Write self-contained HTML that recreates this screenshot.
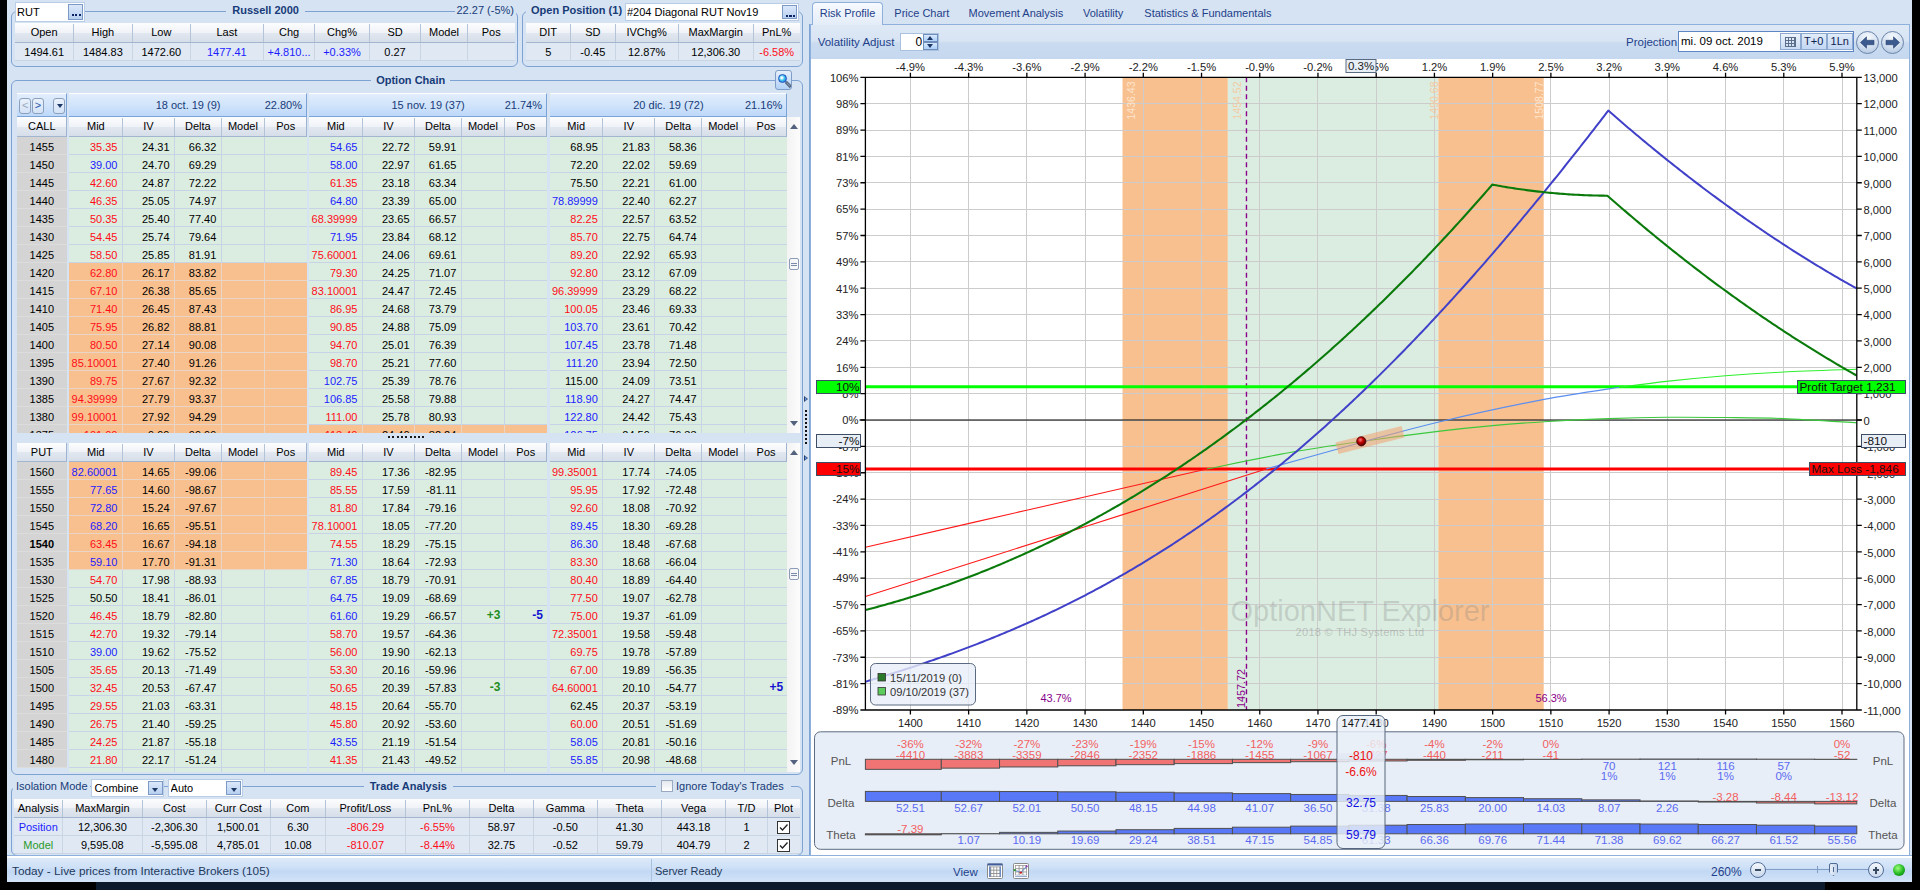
<!DOCTYPE html><html><head><meta charset="utf-8"><style>
*{box-sizing:border-box}
body{margin:0;width:1920px;height:890px;overflow:hidden;position:relative;background:#000;font-family:"Liberation Sans",sans-serif;font-size:11px;color:#000}
body div{position:absolute;white-space:nowrap;overflow:hidden}
svg{position:absolute;overflow:hidden}
</style></head><body>

<div style="left:7.00px;top:0.00px;width:1905.00px;height:882.00px;background:#d6e3f2;"></div>
<div style="left:96.00px;top:882.00px;width:1824.00px;height:8.00px;background:#0c1a2e;"></div>
<div style="left:1825.00px;top:882.00px;width:95.00px;height:8.00px;background:#000;"></div>
<div style="left:11.00px;top:11.00px;width:507.00px;height:56.00px;border:1px solid #7da2d3;border-radius:6px;"></div>
<div style="left:226.27px;top:2.00px;width:78.65px;height:16.00px;line-height:16.00px;text-align:center;color:#173b78;font-size:11px;font-weight:bold;background:#d6e3f2;">Russell 2000</div>
<div style="left:454.53px;top:2.00px;width:61.47px;height:16.00px;line-height:16.00px;text-align:center;color:#173b78;font-size:11px;background:#d6e3f2;">22.27 (-5%)</div>
<div style="left:15.00px;top:2.00px;width:70.00px;height:20.00px;background:#fff;border:1px solid #b9cde6;"></div>
<div style="left:17.00px;top:2.00px;width:66.00px;height:20.00px;line-height:20.00px;text-align:left;color:#000;font-size:11px;padding-left:0px;">RUT</div>
<div style="left:68.00px;top:4.00px;width:15.00px;height:16.00px;background:linear-gradient(#dbe8fa,#b7d0f0);border:1px solid #7b9ac6;"><div style="left:2.5px;top:9px;width:9px;height:2.2px;background:repeating-linear-gradient(90deg,#0c2466 0,#0c2466 2.2px,transparent 2.2px,transparent 3.3px);"></div></div>
<div style="left:15.00px;top:23.00px;width:500.00px;height:19.50px;background:linear-gradient(#fdfdfe,#eff2f7 50%,#e2e8f0 51%,#d6dee9);border-bottom:1px solid #a3b6d0;"></div>
<div style="left:15.00px;top:23.00px;width:58.30px;height:19.50px;line-height:19.50px;text-align:center;color:#000;font-size:11px;">Open</div>
<div style="left:72.80px;top:24.00px;width:1.00px;height:17.50px;background:#b3c3d8;"></div>
<div style="left:73.30px;top:23.00px;width:59.20px;height:19.50px;line-height:19.50px;text-align:center;color:#000;font-size:11px;">High</div>
<div style="left:132.00px;top:24.00px;width:1.00px;height:17.50px;background:#b3c3d8;"></div>
<div style="left:132.50px;top:23.00px;width:57.70px;height:19.50px;line-height:19.50px;text-align:center;color:#000;font-size:11px;">Low</div>
<div style="left:189.70px;top:24.00px;width:1.00px;height:17.50px;background:#b3c3d8;"></div>
<div style="left:190.20px;top:23.00px;width:73.30px;height:19.50px;line-height:19.50px;text-align:center;color:#000;font-size:11px;">Last</div>
<div style="left:263.00px;top:24.00px;width:1.00px;height:17.50px;background:#b3c3d8;"></div>
<div style="left:263.50px;top:23.00px;width:51.10px;height:19.50px;line-height:19.50px;text-align:center;color:#000;font-size:11px;">Chg</div>
<div style="left:314.10px;top:24.00px;width:1.00px;height:17.50px;background:#b3c3d8;"></div>
<div style="left:314.60px;top:23.00px;width:54.80px;height:19.50px;line-height:19.50px;text-align:center;color:#000;font-size:11px;">Chg%</div>
<div style="left:368.90px;top:24.00px;width:1.00px;height:17.50px;background:#b3c3d8;"></div>
<div style="left:369.40px;top:23.00px;width:51.30px;height:19.50px;line-height:19.50px;text-align:center;color:#000;font-size:11px;">SD</div>
<div style="left:420.20px;top:24.00px;width:1.00px;height:17.50px;background:#b3c3d8;"></div>
<div style="left:420.70px;top:23.00px;width:46.80px;height:19.50px;line-height:19.50px;text-align:center;color:#000;font-size:11px;">Model</div>
<div style="left:467.00px;top:24.00px;width:1.00px;height:17.50px;background:#b3c3d8;"></div>
<div style="left:467.50px;top:23.00px;width:47.50px;height:19.50px;line-height:19.50px;text-align:center;color:#000;font-size:11px;">Pos</div>
<div style="left:15.00px;top:42.50px;width:500.00px;height:18.00px;background:#dfe8f3;border-bottom:1px solid #c9d5e3;"></div>
<div style="left:15.00px;top:42.50px;width:58.30px;height:18.00px;line-height:18.00px;text-align:center;color:#000;font-size:11px;">1494.61</div>
<div style="left:72.80px;top:42.50px;width:1.00px;height:18.00px;background:#c9d5e3;"></div>
<div style="left:73.30px;top:42.50px;width:59.20px;height:18.00px;line-height:18.00px;text-align:center;color:#000;font-size:11px;">1484.83</div>
<div style="left:132.00px;top:42.50px;width:1.00px;height:18.00px;background:#c9d5e3;"></div>
<div style="left:132.50px;top:42.50px;width:57.70px;height:18.00px;line-height:18.00px;text-align:center;color:#000;font-size:11px;">1472.60</div>
<div style="left:189.70px;top:42.50px;width:1.00px;height:18.00px;background:#c9d5e3;"></div>
<div style="left:190.20px;top:42.50px;width:73.30px;height:18.00px;line-height:18.00px;text-align:center;color:#1c1cff;font-size:11px;">1477.41</div>
<div style="left:263.00px;top:42.50px;width:1.00px;height:18.00px;background:#c9d5e3;"></div>
<div style="left:263.50px;top:42.50px;width:51.10px;height:18.00px;line-height:18.00px;text-align:center;color:#1c1cff;font-size:11px;">+4.810...</div>
<div style="left:314.10px;top:42.50px;width:1.00px;height:18.00px;background:#c9d5e3;"></div>
<div style="left:314.60px;top:42.50px;width:54.80px;height:18.00px;line-height:18.00px;text-align:center;color:#1c1cff;font-size:11px;">+0.33%</div>
<div style="left:368.90px;top:42.50px;width:1.00px;height:18.00px;background:#c9d5e3;"></div>
<div style="left:369.40px;top:42.50px;width:51.30px;height:18.00px;line-height:18.00px;text-align:center;color:#000;font-size:11px;">0.27</div>
<div style="left:420.20px;top:42.50px;width:1.00px;height:18.00px;background:#c9d5e3;"></div>
<div style="left:420.70px;top:42.50px;width:46.80px;height:18.00px;line-height:18.00px;text-align:center;color:#000;font-size:11px;"></div>
<div style="left:467.00px;top:42.50px;width:1.00px;height:18.00px;background:#c9d5e3;"></div>
<div style="left:467.50px;top:42.50px;width:47.50px;height:18.00px;line-height:18.00px;text-align:center;color:#000;font-size:11px;"></div>
<div style="left:521.50px;top:11.00px;width:281.00px;height:56.00px;border:1px solid #7da2d3;border-radius:6px;"></div>
<div style="left:526.00px;top:2.00px;width:101.05px;height:16.00px;line-height:16.00px;text-align:center;color:#173b78;font-size:11px;font-weight:bold;background:#d6e3f2;">Open Position (1)</div>
<div style="left:625.00px;top:3.00px;width:174.00px;height:18.00px;background:#fff;border:1px solid #b9cde6;"></div>
<div style="left:627.00px;top:3.00px;width:170.00px;height:18.00px;line-height:18.00px;text-align:left;color:#000;font-size:11px;padding-left:0px;">#204 Diagonal RUT Nov19</div>
<div style="left:782.00px;top:5.00px;width:15.00px;height:14.00px;background:linear-gradient(#dbe8fa,#b7d0f0);border:1px solid #7b9ac6;"><div style="left:2.5px;top:9px;width:9px;height:2.2px;background:repeating-linear-gradient(90deg,#0c2466 0,#0c2466 2.2px,transparent 2.2px,transparent 3.3px);"></div></div>
<div style="left:526.00px;top:23.00px;width:274.00px;height:19.50px;background:linear-gradient(#fdfdfe,#eff2f7 50%,#e2e8f0 51%,#d6dee9);border-bottom:1px solid #a3b6d0;"></div>
<div style="left:526.00px;top:23.00px;width:44.40px;height:19.50px;line-height:19.50px;text-align:center;color:#000;font-size:11px;">DIT</div>
<div style="left:569.90px;top:24.00px;width:1.00px;height:17.50px;background:#b3c3d8;"></div>
<div style="left:570.40px;top:23.00px;width:44.80px;height:19.50px;line-height:19.50px;text-align:center;color:#000;font-size:11px;">SD</div>
<div style="left:614.70px;top:24.00px;width:1.00px;height:17.50px;background:#b3c3d8;"></div>
<div style="left:615.20px;top:23.00px;width:62.90px;height:19.50px;line-height:19.50px;text-align:center;color:#000;font-size:11px;">IVChg%</div>
<div style="left:677.60px;top:24.00px;width:1.00px;height:17.50px;background:#b3c3d8;"></div>
<div style="left:678.10px;top:23.00px;width:75.30px;height:19.50px;line-height:19.50px;text-align:center;color:#000;font-size:11px;">MaxMargin</div>
<div style="left:752.90px;top:24.00px;width:1.00px;height:17.50px;background:#b3c3d8;"></div>
<div style="left:753.40px;top:23.00px;width:46.60px;height:19.50px;line-height:19.50px;text-align:center;color:#000;font-size:11px;">PnL%</div>
<div style="left:526.00px;top:42.50px;width:274.00px;height:18.00px;background:#dfe8f3;border-bottom:1px solid #c9d5e3;"></div>
<div style="left:526.00px;top:42.50px;width:44.40px;height:18.00px;line-height:18.00px;text-align:center;color:#000;font-size:11px;">5</div>
<div style="left:569.90px;top:42.50px;width:1.00px;height:18.00px;background:#c9d5e3;"></div>
<div style="left:570.40px;top:42.50px;width:44.80px;height:18.00px;line-height:18.00px;text-align:center;color:#000;font-size:11px;">-0.45</div>
<div style="left:614.70px;top:42.50px;width:1.00px;height:18.00px;background:#c9d5e3;"></div>
<div style="left:615.20px;top:42.50px;width:62.90px;height:18.00px;line-height:18.00px;text-align:center;color:#000;font-size:11px;">12.87%</div>
<div style="left:677.60px;top:42.50px;width:1.00px;height:18.00px;background:#c9d5e3;"></div>
<div style="left:678.10px;top:42.50px;width:75.30px;height:18.00px;line-height:18.00px;text-align:center;color:#000;font-size:11px;">12,306.30</div>
<div style="left:752.90px;top:42.50px;width:1.00px;height:18.00px;background:#c9d5e3;"></div>
<div style="left:753.40px;top:42.50px;width:46.60px;height:18.00px;line-height:18.00px;text-align:center;color:#ff0c18;font-size:11px;">-6.58%</div>
<div style="left:11.00px;top:79.50px;width:792.00px;height:695.50px;border:1px solid #7da2d3;border-radius:6px;"></div>
<div style="left:371.18px;top:71.50px;width:79.04px;height:16.00px;line-height:16.00px;text-align:center;color:#173b78;font-size:11px;font-weight:bold;background:#d6e3f2;">Option Chain</div>
<div style="left:775.00px;top:70.00px;width:17.00px;height:19.50px;background:linear-gradient(#e6f0fc,#b3d1f6);border:1px solid #7f9cc6;border-radius:3px;"><div style="left:1.5px;top:2.5px;width:9.5px;height:9.5px;border:1px solid #2050c0;border-radius:50%;background:radial-gradient(circle at 40% 40%,#ffffff 10%,#3fc8f0 45%,#1f60d0 90%);"></div><div style="left:8.5px;top:12px;width:7px;height:2.5px;background:#8aa0b8;border:0.5px solid #50607a;transform:rotate(45deg);"></div></div>
<div style="left:17.00px;top:92.50px;width:49.70px;height:24.70px;background:linear-gradient(#e1edfc,#d3e5fb 45%,#bdd8f9);border-top:1px solid #fff;border-bottom:1.5px solid #7aa3d8;border-right:1.5px solid #7aa3d8;"></div>
<div style="left:19.40px;top:98.10px;width:11.50px;height:15.60px;border:1px solid #8d9fbb;border-radius:3px;background:linear-gradient(#e9f1fc,#d3e3f7);"><div style="left:0;top:0;width:9.5px;height:13.6px;line-height:13.6px;text-align:center;font-size:11px;color:#9aa8bd">&lt;</div></div>
<div style="left:32.20px;top:98.10px;width:11.50px;height:15.60px;border:1px solid #8d9fbb;border-radius:3px;background:linear-gradient(#e9f1fc,#d3e3f7);"><div style="left:0;top:0;width:9.5px;height:13.6px;line-height:13.6px;text-align:center;font-size:11px;color:#2e56a8">&gt;</div></div>
<div style="left:53.10px;top:98.10px;width:11.60px;height:15.60px;border:1px solid #8d9fbb;border-radius:3px;background:linear-gradient(#e9f1fc,#d3e3f7);"><div style="left:2.5px;top:5px;width:0;height:0;border-left:3.5px solid transparent;border-right:3.5px solid transparent;border-top:4px solid #1c3766;"></div></div>
<div style="left:69.20px;top:92.50px;width:237.80px;height:24.70px;background:linear-gradient(#e1edfc,#d3e5fb 45%,#bdd8f9);border-top:1px solid #fff;border-bottom:1.5px solid #7aa3d8;border-right:1.5px solid #7aa3d8;"></div>
<div style="left:69.20px;top:92.50px;width:237.80px;height:24.70px;line-height:24.70px;text-align:center;color:#173b78;font-size:11px;">18 oct. 19 (9)</div>
<div style="left:69.20px;top:92.50px;width:237.80px;height:24.70px;line-height:24.70px;text-align:right;color:#173b78;font-size:11px;padding-right:5px;">22.80%</div>
<div style="left:309.20px;top:92.50px;width:237.80px;height:24.70px;background:linear-gradient(#e1edfc,#d3e5fb 45%,#bdd8f9);border-top:1px solid #fff;border-bottom:1.5px solid #7aa3d8;border-right:1.5px solid #7aa3d8;"></div>
<div style="left:309.20px;top:92.50px;width:237.80px;height:24.70px;line-height:24.70px;text-align:center;color:#173b78;font-size:11px;">15 nov. 19 (37)</div>
<div style="left:309.20px;top:92.50px;width:237.80px;height:24.70px;line-height:24.70px;text-align:right;color:#173b78;font-size:11px;padding-right:5px;">21.74%</div>
<div style="left:549.50px;top:92.50px;width:237.80px;height:24.70px;background:linear-gradient(#e1edfc,#d3e5fb 45%,#bdd8f9);border-top:1px solid #fff;border-bottom:1.5px solid #7aa3d8;border-right:1.5px solid #7aa3d8;"></div>
<div style="left:549.50px;top:92.50px;width:237.80px;height:24.70px;line-height:24.70px;text-align:center;color:#173b78;font-size:11px;">20 dic. 19 (72)</div>
<div style="left:549.50px;top:92.50px;width:237.80px;height:24.70px;line-height:24.70px;text-align:right;color:#173b78;font-size:11px;padding-right:5px;">21.16%</div>
<div style="left:17.00px;top:117.20px;width:49.70px;height:19.80px;background:linear-gradient(#fdfdfe,#eff2f7 50%,#e2e8f0 51%,#d6dee9);border-bottom:1px solid #a3b6d0;border-right:1px solid #9fb3cf;"></div>
<div style="left:17.00px;top:117.20px;width:49.70px;height:19.80px;line-height:19.80px;text-align:center;color:#000;font-size:11px;">CALL</div>
<div style="left:69.20px;top:117.20px;width:237.80px;height:19.80px;background:linear-gradient(#fdfdfe,#eff2f7 50%,#e2e8f0 51%,#d6dee9);border-bottom:1px solid #a3b6d0;border-right:1px solid #9fb3cf;"></div>
<div style="left:69.20px;top:117.20px;width:53.30px;height:19.80px;line-height:19.80px;text-align:center;color:#000;font-size:11px;">Mid</div>
<div style="left:122.00px;top:118.20px;width:1.00px;height:17.80px;background:#b3c3d8;"></div>
<div style="left:122.50px;top:117.20px;width:52.00px;height:19.80px;line-height:19.80px;text-align:center;color:#000;font-size:11px;">IV</div>
<div style="left:174.00px;top:118.20px;width:1.00px;height:17.80px;background:#b3c3d8;"></div>
<div style="left:174.50px;top:117.20px;width:46.80px;height:19.80px;line-height:19.80px;text-align:center;color:#000;font-size:11px;">Delta</div>
<div style="left:220.80px;top:118.20px;width:1.00px;height:17.80px;background:#b3c3d8;"></div>
<div style="left:221.30px;top:117.20px;width:43.20px;height:19.80px;line-height:19.80px;text-align:center;color:#000;font-size:11px;">Model</div>
<div style="left:264.00px;top:118.20px;width:1.00px;height:17.80px;background:#b3c3d8;"></div>
<div style="left:264.50px;top:117.20px;width:42.50px;height:19.80px;line-height:19.80px;text-align:center;color:#000;font-size:11px;">Pos</div>
<div style="left:309.20px;top:117.20px;width:237.80px;height:19.80px;background:linear-gradient(#fdfdfe,#eff2f7 50%,#e2e8f0 51%,#d6dee9);border-bottom:1px solid #a3b6d0;border-right:1px solid #9fb3cf;"></div>
<div style="left:309.20px;top:117.20px;width:53.30px;height:19.80px;line-height:19.80px;text-align:center;color:#000;font-size:11px;">Mid</div>
<div style="left:362.00px;top:118.20px;width:1.00px;height:17.80px;background:#b3c3d8;"></div>
<div style="left:362.50px;top:117.20px;width:52.00px;height:19.80px;line-height:19.80px;text-align:center;color:#000;font-size:11px;">IV</div>
<div style="left:414.00px;top:118.20px;width:1.00px;height:17.80px;background:#b3c3d8;"></div>
<div style="left:414.50px;top:117.20px;width:46.80px;height:19.80px;line-height:19.80px;text-align:center;color:#000;font-size:11px;">Delta</div>
<div style="left:460.80px;top:118.20px;width:1.00px;height:17.80px;background:#b3c3d8;"></div>
<div style="left:461.30px;top:117.20px;width:43.20px;height:19.80px;line-height:19.80px;text-align:center;color:#000;font-size:11px;">Model</div>
<div style="left:504.00px;top:118.20px;width:1.00px;height:17.80px;background:#b3c3d8;"></div>
<div style="left:504.50px;top:117.20px;width:42.50px;height:19.80px;line-height:19.80px;text-align:center;color:#000;font-size:11px;">Pos</div>
<div style="left:549.50px;top:117.20px;width:237.80px;height:19.80px;background:linear-gradient(#fdfdfe,#eff2f7 50%,#e2e8f0 51%,#d6dee9);border-bottom:1px solid #a3b6d0;border-right:1px solid #9fb3cf;"></div>
<div style="left:549.50px;top:117.20px;width:53.30px;height:19.80px;line-height:19.80px;text-align:center;color:#000;font-size:11px;">Mid</div>
<div style="left:602.30px;top:118.20px;width:1.00px;height:17.80px;background:#b3c3d8;"></div>
<div style="left:602.80px;top:117.20px;width:52.00px;height:19.80px;line-height:19.80px;text-align:center;color:#000;font-size:11px;">IV</div>
<div style="left:654.30px;top:118.20px;width:1.00px;height:17.80px;background:#b3c3d8;"></div>
<div style="left:654.80px;top:117.20px;width:46.80px;height:19.80px;line-height:19.80px;text-align:center;color:#000;font-size:11px;">Delta</div>
<div style="left:701.10px;top:118.20px;width:1.00px;height:17.80px;background:#b3c3d8;"></div>
<div style="left:701.60px;top:117.20px;width:43.20px;height:19.80px;line-height:19.80px;text-align:center;color:#000;font-size:11px;">Model</div>
<div style="left:744.30px;top:118.20px;width:1.00px;height:17.80px;background:#b3c3d8;"></div>
<div style="left:744.80px;top:117.20px;width:42.50px;height:19.80px;line-height:19.80px;text-align:center;color:#000;font-size:11px;">Pos</div>
<div style="left:0;top:0;width:1920px;height:433px;">
<div style="left:17.00px;top:137.00px;width:49.70px;height:18.00px;background:#d4d4d4;border-bottom:1px solid #dcdcdc;"></div>
<div style="left:17.00px;top:137.50px;width:49.70px;height:18.00px;line-height:18.00px;text-align:center;color:#000;font-size:11px;">1455</div>
<div style="left:69.20px;top:137.00px;width:237.80px;height:18.00px;background:#dbede1;border-bottom:1px solid #c9d3e6;"></div>
<div style="left:122.00px;top:137.00px;width:1.00px;height:18.00px;background:#c9d3e6;"></div>
<div style="left:174.00px;top:137.00px;width:1.00px;height:18.00px;background:#c9d3e6;"></div>
<div style="left:220.80px;top:137.00px;width:1.00px;height:18.00px;background:#c9d3e6;"></div>
<div style="left:264.00px;top:137.00px;width:1.00px;height:18.00px;background:#c9d3e6;"></div>
<div style="left:69.20px;top:137.50px;width:53.30px;height:18.00px;line-height:18.00px;text-align:right;color:#ff0c18;font-size:11px;padding-right:5px;">35.35</div>
<div style="left:122.50px;top:137.50px;width:52.00px;height:18.00px;line-height:18.00px;text-align:right;color:#000;font-size:11px;padding-right:5px;">24.31</div>
<div style="left:174.50px;top:137.50px;width:46.80px;height:18.00px;line-height:18.00px;text-align:right;color:#000;font-size:11px;padding-right:5px;">66.32</div>
<div style="left:309.20px;top:137.00px;width:237.80px;height:18.00px;background:#dbede1;border-bottom:1px solid #c9d3e6;"></div>
<div style="left:362.00px;top:137.00px;width:1.00px;height:18.00px;background:#c9d3e6;"></div>
<div style="left:414.00px;top:137.00px;width:1.00px;height:18.00px;background:#c9d3e6;"></div>
<div style="left:460.80px;top:137.00px;width:1.00px;height:18.00px;background:#c9d3e6;"></div>
<div style="left:504.00px;top:137.00px;width:1.00px;height:18.00px;background:#c9d3e6;"></div>
<div style="left:309.20px;top:137.50px;width:53.30px;height:18.00px;line-height:18.00px;text-align:right;color:#1c1cff;font-size:11px;padding-right:5px;">54.65</div>
<div style="left:362.50px;top:137.50px;width:52.00px;height:18.00px;line-height:18.00px;text-align:right;color:#000;font-size:11px;padding-right:5px;">22.72</div>
<div style="left:414.50px;top:137.50px;width:46.80px;height:18.00px;line-height:18.00px;text-align:right;color:#000;font-size:11px;padding-right:5px;">59.91</div>
<div style="left:549.50px;top:137.00px;width:237.80px;height:18.00px;background:#dbede1;border-bottom:1px solid #c9d3e6;"></div>
<div style="left:602.30px;top:137.00px;width:1.00px;height:18.00px;background:#c9d3e6;"></div>
<div style="left:654.30px;top:137.00px;width:1.00px;height:18.00px;background:#c9d3e6;"></div>
<div style="left:701.10px;top:137.00px;width:1.00px;height:18.00px;background:#c9d3e6;"></div>
<div style="left:744.30px;top:137.00px;width:1.00px;height:18.00px;background:#c9d3e6;"></div>
<div style="left:549.50px;top:137.50px;width:53.30px;height:18.00px;line-height:18.00px;text-align:right;color:#000;font-size:11px;padding-right:5px;">68.95</div>
<div style="left:602.80px;top:137.50px;width:52.00px;height:18.00px;line-height:18.00px;text-align:right;color:#000;font-size:11px;padding-right:5px;">21.83</div>
<div style="left:654.80px;top:137.50px;width:46.80px;height:18.00px;line-height:18.00px;text-align:right;color:#000;font-size:11px;padding-right:5px;">58.36</div>
<div style="left:17.00px;top:155.00px;width:49.70px;height:18.00px;background:#d4d4d4;border-bottom:1px solid #dcdcdc;"></div>
<div style="left:17.00px;top:155.50px;width:49.70px;height:18.00px;line-height:18.00px;text-align:center;color:#000;font-size:11px;">1450</div>
<div style="left:69.20px;top:155.00px;width:237.80px;height:18.00px;background:#dbede1;border-bottom:1px solid #c9d3e6;"></div>
<div style="left:122.00px;top:155.00px;width:1.00px;height:18.00px;background:#c9d3e6;"></div>
<div style="left:174.00px;top:155.00px;width:1.00px;height:18.00px;background:#c9d3e6;"></div>
<div style="left:220.80px;top:155.00px;width:1.00px;height:18.00px;background:#c9d3e6;"></div>
<div style="left:264.00px;top:155.00px;width:1.00px;height:18.00px;background:#c9d3e6;"></div>
<div style="left:69.20px;top:155.50px;width:53.30px;height:18.00px;line-height:18.00px;text-align:right;color:#1c1cff;font-size:11px;padding-right:5px;">39.00</div>
<div style="left:122.50px;top:155.50px;width:52.00px;height:18.00px;line-height:18.00px;text-align:right;color:#000;font-size:11px;padding-right:5px;">24.70</div>
<div style="left:174.50px;top:155.50px;width:46.80px;height:18.00px;line-height:18.00px;text-align:right;color:#000;font-size:11px;padding-right:5px;">69.29</div>
<div style="left:309.20px;top:155.00px;width:237.80px;height:18.00px;background:#dbede1;border-bottom:1px solid #c9d3e6;"></div>
<div style="left:362.00px;top:155.00px;width:1.00px;height:18.00px;background:#c9d3e6;"></div>
<div style="left:414.00px;top:155.00px;width:1.00px;height:18.00px;background:#c9d3e6;"></div>
<div style="left:460.80px;top:155.00px;width:1.00px;height:18.00px;background:#c9d3e6;"></div>
<div style="left:504.00px;top:155.00px;width:1.00px;height:18.00px;background:#c9d3e6;"></div>
<div style="left:309.20px;top:155.50px;width:53.30px;height:18.00px;line-height:18.00px;text-align:right;color:#1c1cff;font-size:11px;padding-right:5px;">58.00</div>
<div style="left:362.50px;top:155.50px;width:52.00px;height:18.00px;line-height:18.00px;text-align:right;color:#000;font-size:11px;padding-right:5px;">22.97</div>
<div style="left:414.50px;top:155.50px;width:46.80px;height:18.00px;line-height:18.00px;text-align:right;color:#000;font-size:11px;padding-right:5px;">61.65</div>
<div style="left:549.50px;top:155.00px;width:237.80px;height:18.00px;background:#dbede1;border-bottom:1px solid #c9d3e6;"></div>
<div style="left:602.30px;top:155.00px;width:1.00px;height:18.00px;background:#c9d3e6;"></div>
<div style="left:654.30px;top:155.00px;width:1.00px;height:18.00px;background:#c9d3e6;"></div>
<div style="left:701.10px;top:155.00px;width:1.00px;height:18.00px;background:#c9d3e6;"></div>
<div style="left:744.30px;top:155.00px;width:1.00px;height:18.00px;background:#c9d3e6;"></div>
<div style="left:549.50px;top:155.50px;width:53.30px;height:18.00px;line-height:18.00px;text-align:right;color:#000;font-size:11px;padding-right:5px;">72.20</div>
<div style="left:602.80px;top:155.50px;width:52.00px;height:18.00px;line-height:18.00px;text-align:right;color:#000;font-size:11px;padding-right:5px;">22.02</div>
<div style="left:654.80px;top:155.50px;width:46.80px;height:18.00px;line-height:18.00px;text-align:right;color:#000;font-size:11px;padding-right:5px;">59.69</div>
<div style="left:17.00px;top:173.00px;width:49.70px;height:18.00px;background:#d4d4d4;border-bottom:1px solid #dcdcdc;"></div>
<div style="left:17.00px;top:173.50px;width:49.70px;height:18.00px;line-height:18.00px;text-align:center;color:#000;font-size:11px;">1445</div>
<div style="left:69.20px;top:173.00px;width:237.80px;height:18.00px;background:#dbede1;border-bottom:1px solid #c9d3e6;"></div>
<div style="left:122.00px;top:173.00px;width:1.00px;height:18.00px;background:#c9d3e6;"></div>
<div style="left:174.00px;top:173.00px;width:1.00px;height:18.00px;background:#c9d3e6;"></div>
<div style="left:220.80px;top:173.00px;width:1.00px;height:18.00px;background:#c9d3e6;"></div>
<div style="left:264.00px;top:173.00px;width:1.00px;height:18.00px;background:#c9d3e6;"></div>
<div style="left:69.20px;top:173.50px;width:53.30px;height:18.00px;line-height:18.00px;text-align:right;color:#ff0c18;font-size:11px;padding-right:5px;">42.60</div>
<div style="left:122.50px;top:173.50px;width:52.00px;height:18.00px;line-height:18.00px;text-align:right;color:#000;font-size:11px;padding-right:5px;">24.87</div>
<div style="left:174.50px;top:173.50px;width:46.80px;height:18.00px;line-height:18.00px;text-align:right;color:#000;font-size:11px;padding-right:5px;">72.22</div>
<div style="left:309.20px;top:173.00px;width:237.80px;height:18.00px;background:#dbede1;border-bottom:1px solid #c9d3e6;"></div>
<div style="left:362.00px;top:173.00px;width:1.00px;height:18.00px;background:#c9d3e6;"></div>
<div style="left:414.00px;top:173.00px;width:1.00px;height:18.00px;background:#c9d3e6;"></div>
<div style="left:460.80px;top:173.00px;width:1.00px;height:18.00px;background:#c9d3e6;"></div>
<div style="left:504.00px;top:173.00px;width:1.00px;height:18.00px;background:#c9d3e6;"></div>
<div style="left:309.20px;top:173.50px;width:53.30px;height:18.00px;line-height:18.00px;text-align:right;color:#ff0c18;font-size:11px;padding-right:5px;">61.35</div>
<div style="left:362.50px;top:173.50px;width:52.00px;height:18.00px;line-height:18.00px;text-align:right;color:#000;font-size:11px;padding-right:5px;">23.18</div>
<div style="left:414.50px;top:173.50px;width:46.80px;height:18.00px;line-height:18.00px;text-align:right;color:#000;font-size:11px;padding-right:5px;">63.34</div>
<div style="left:549.50px;top:173.00px;width:237.80px;height:18.00px;background:#dbede1;border-bottom:1px solid #c9d3e6;"></div>
<div style="left:602.30px;top:173.00px;width:1.00px;height:18.00px;background:#c9d3e6;"></div>
<div style="left:654.30px;top:173.00px;width:1.00px;height:18.00px;background:#c9d3e6;"></div>
<div style="left:701.10px;top:173.00px;width:1.00px;height:18.00px;background:#c9d3e6;"></div>
<div style="left:744.30px;top:173.00px;width:1.00px;height:18.00px;background:#c9d3e6;"></div>
<div style="left:549.50px;top:173.50px;width:53.30px;height:18.00px;line-height:18.00px;text-align:right;color:#000;font-size:11px;padding-right:5px;">75.50</div>
<div style="left:602.80px;top:173.50px;width:52.00px;height:18.00px;line-height:18.00px;text-align:right;color:#000;font-size:11px;padding-right:5px;">22.21</div>
<div style="left:654.80px;top:173.50px;width:46.80px;height:18.00px;line-height:18.00px;text-align:right;color:#000;font-size:11px;padding-right:5px;">61.00</div>
<div style="left:17.00px;top:191.00px;width:49.70px;height:18.00px;background:#d4d4d4;border-bottom:1px solid #dcdcdc;"></div>
<div style="left:17.00px;top:191.50px;width:49.70px;height:18.00px;line-height:18.00px;text-align:center;color:#000;font-size:11px;">1440</div>
<div style="left:69.20px;top:191.00px;width:237.80px;height:18.00px;background:#dbede1;border-bottom:1px solid #c9d3e6;"></div>
<div style="left:122.00px;top:191.00px;width:1.00px;height:18.00px;background:#c9d3e6;"></div>
<div style="left:174.00px;top:191.00px;width:1.00px;height:18.00px;background:#c9d3e6;"></div>
<div style="left:220.80px;top:191.00px;width:1.00px;height:18.00px;background:#c9d3e6;"></div>
<div style="left:264.00px;top:191.00px;width:1.00px;height:18.00px;background:#c9d3e6;"></div>
<div style="left:69.20px;top:191.50px;width:53.30px;height:18.00px;line-height:18.00px;text-align:right;color:#ff0c18;font-size:11px;padding-right:5px;">46.35</div>
<div style="left:122.50px;top:191.50px;width:52.00px;height:18.00px;line-height:18.00px;text-align:right;color:#000;font-size:11px;padding-right:5px;">25.05</div>
<div style="left:174.50px;top:191.50px;width:46.80px;height:18.00px;line-height:18.00px;text-align:right;color:#000;font-size:11px;padding-right:5px;">74.97</div>
<div style="left:309.20px;top:191.00px;width:237.80px;height:18.00px;background:#dbede1;border-bottom:1px solid #c9d3e6;"></div>
<div style="left:362.00px;top:191.00px;width:1.00px;height:18.00px;background:#c9d3e6;"></div>
<div style="left:414.00px;top:191.00px;width:1.00px;height:18.00px;background:#c9d3e6;"></div>
<div style="left:460.80px;top:191.00px;width:1.00px;height:18.00px;background:#c9d3e6;"></div>
<div style="left:504.00px;top:191.00px;width:1.00px;height:18.00px;background:#c9d3e6;"></div>
<div style="left:309.20px;top:191.50px;width:53.30px;height:18.00px;line-height:18.00px;text-align:right;color:#1c1cff;font-size:11px;padding-right:5px;">64.80</div>
<div style="left:362.50px;top:191.50px;width:52.00px;height:18.00px;line-height:18.00px;text-align:right;color:#000;font-size:11px;padding-right:5px;">23.39</div>
<div style="left:414.50px;top:191.50px;width:46.80px;height:18.00px;line-height:18.00px;text-align:right;color:#000;font-size:11px;padding-right:5px;">65.00</div>
<div style="left:549.50px;top:191.00px;width:237.80px;height:18.00px;background:#dbede1;border-bottom:1px solid #c9d3e6;"></div>
<div style="left:602.30px;top:191.00px;width:1.00px;height:18.00px;background:#c9d3e6;"></div>
<div style="left:654.30px;top:191.00px;width:1.00px;height:18.00px;background:#c9d3e6;"></div>
<div style="left:701.10px;top:191.00px;width:1.00px;height:18.00px;background:#c9d3e6;"></div>
<div style="left:744.30px;top:191.00px;width:1.00px;height:18.00px;background:#c9d3e6;"></div>
<div style="left:549.50px;top:191.50px;width:53.30px;height:18.00px;line-height:18.00px;text-align:right;color:#1c1cff;font-size:11px;padding-right:5px;">78.89999</div>
<div style="left:602.80px;top:191.50px;width:52.00px;height:18.00px;line-height:18.00px;text-align:right;color:#000;font-size:11px;padding-right:5px;">22.40</div>
<div style="left:654.80px;top:191.50px;width:46.80px;height:18.00px;line-height:18.00px;text-align:right;color:#000;font-size:11px;padding-right:5px;">62.27</div>
<div style="left:17.00px;top:209.00px;width:49.70px;height:18.00px;background:#d4d4d4;border-bottom:1px solid #dcdcdc;"></div>
<div style="left:17.00px;top:209.50px;width:49.70px;height:18.00px;line-height:18.00px;text-align:center;color:#000;font-size:11px;">1435</div>
<div style="left:69.20px;top:209.00px;width:237.80px;height:18.00px;background:#dbede1;border-bottom:1px solid #c9d3e6;"></div>
<div style="left:122.00px;top:209.00px;width:1.00px;height:18.00px;background:#c9d3e6;"></div>
<div style="left:174.00px;top:209.00px;width:1.00px;height:18.00px;background:#c9d3e6;"></div>
<div style="left:220.80px;top:209.00px;width:1.00px;height:18.00px;background:#c9d3e6;"></div>
<div style="left:264.00px;top:209.00px;width:1.00px;height:18.00px;background:#c9d3e6;"></div>
<div style="left:69.20px;top:209.50px;width:53.30px;height:18.00px;line-height:18.00px;text-align:right;color:#ff0c18;font-size:11px;padding-right:5px;">50.35</div>
<div style="left:122.50px;top:209.50px;width:52.00px;height:18.00px;line-height:18.00px;text-align:right;color:#000;font-size:11px;padding-right:5px;">25.40</div>
<div style="left:174.50px;top:209.50px;width:46.80px;height:18.00px;line-height:18.00px;text-align:right;color:#000;font-size:11px;padding-right:5px;">77.40</div>
<div style="left:309.20px;top:209.00px;width:237.80px;height:18.00px;background:#dbede1;border-bottom:1px solid #c9d3e6;"></div>
<div style="left:362.00px;top:209.00px;width:1.00px;height:18.00px;background:#c9d3e6;"></div>
<div style="left:414.00px;top:209.00px;width:1.00px;height:18.00px;background:#c9d3e6;"></div>
<div style="left:460.80px;top:209.00px;width:1.00px;height:18.00px;background:#c9d3e6;"></div>
<div style="left:504.00px;top:209.00px;width:1.00px;height:18.00px;background:#c9d3e6;"></div>
<div style="left:309.20px;top:209.50px;width:53.30px;height:18.00px;line-height:18.00px;text-align:right;color:#ff0c18;font-size:11px;padding-right:5px;">68.39999</div>
<div style="left:362.50px;top:209.50px;width:52.00px;height:18.00px;line-height:18.00px;text-align:right;color:#000;font-size:11px;padding-right:5px;">23.65</div>
<div style="left:414.50px;top:209.50px;width:46.80px;height:18.00px;line-height:18.00px;text-align:right;color:#000;font-size:11px;padding-right:5px;">66.57</div>
<div style="left:549.50px;top:209.00px;width:237.80px;height:18.00px;background:#dbede1;border-bottom:1px solid #c9d3e6;"></div>
<div style="left:602.30px;top:209.00px;width:1.00px;height:18.00px;background:#c9d3e6;"></div>
<div style="left:654.30px;top:209.00px;width:1.00px;height:18.00px;background:#c9d3e6;"></div>
<div style="left:701.10px;top:209.00px;width:1.00px;height:18.00px;background:#c9d3e6;"></div>
<div style="left:744.30px;top:209.00px;width:1.00px;height:18.00px;background:#c9d3e6;"></div>
<div style="left:549.50px;top:209.50px;width:53.30px;height:18.00px;line-height:18.00px;text-align:right;color:#ff0c18;font-size:11px;padding-right:5px;">82.25</div>
<div style="left:602.80px;top:209.50px;width:52.00px;height:18.00px;line-height:18.00px;text-align:right;color:#000;font-size:11px;padding-right:5px;">22.57</div>
<div style="left:654.80px;top:209.50px;width:46.80px;height:18.00px;line-height:18.00px;text-align:right;color:#000;font-size:11px;padding-right:5px;">63.52</div>
<div style="left:17.00px;top:227.00px;width:49.70px;height:18.00px;background:#d4d4d4;border-bottom:1px solid #dcdcdc;"></div>
<div style="left:17.00px;top:227.50px;width:49.70px;height:18.00px;line-height:18.00px;text-align:center;color:#000;font-size:11px;">1430</div>
<div style="left:69.20px;top:227.00px;width:237.80px;height:18.00px;background:#dbede1;border-bottom:1px solid #c9d3e6;"></div>
<div style="left:122.00px;top:227.00px;width:1.00px;height:18.00px;background:#c9d3e6;"></div>
<div style="left:174.00px;top:227.00px;width:1.00px;height:18.00px;background:#c9d3e6;"></div>
<div style="left:220.80px;top:227.00px;width:1.00px;height:18.00px;background:#c9d3e6;"></div>
<div style="left:264.00px;top:227.00px;width:1.00px;height:18.00px;background:#c9d3e6;"></div>
<div style="left:69.20px;top:227.50px;width:53.30px;height:18.00px;line-height:18.00px;text-align:right;color:#ff0c18;font-size:11px;padding-right:5px;">54.45</div>
<div style="left:122.50px;top:227.50px;width:52.00px;height:18.00px;line-height:18.00px;text-align:right;color:#000;font-size:11px;padding-right:5px;">25.74</div>
<div style="left:174.50px;top:227.50px;width:46.80px;height:18.00px;line-height:18.00px;text-align:right;color:#000;font-size:11px;padding-right:5px;">79.64</div>
<div style="left:309.20px;top:227.00px;width:237.80px;height:18.00px;background:#dbede1;border-bottom:1px solid #c9d3e6;"></div>
<div style="left:362.00px;top:227.00px;width:1.00px;height:18.00px;background:#c9d3e6;"></div>
<div style="left:414.00px;top:227.00px;width:1.00px;height:18.00px;background:#c9d3e6;"></div>
<div style="left:460.80px;top:227.00px;width:1.00px;height:18.00px;background:#c9d3e6;"></div>
<div style="left:504.00px;top:227.00px;width:1.00px;height:18.00px;background:#c9d3e6;"></div>
<div style="left:309.20px;top:227.50px;width:53.30px;height:18.00px;line-height:18.00px;text-align:right;color:#1c1cff;font-size:11px;padding-right:5px;">71.95</div>
<div style="left:362.50px;top:227.50px;width:52.00px;height:18.00px;line-height:18.00px;text-align:right;color:#000;font-size:11px;padding-right:5px;">23.84</div>
<div style="left:414.50px;top:227.50px;width:46.80px;height:18.00px;line-height:18.00px;text-align:right;color:#000;font-size:11px;padding-right:5px;">68.12</div>
<div style="left:549.50px;top:227.00px;width:237.80px;height:18.00px;background:#dbede1;border-bottom:1px solid #c9d3e6;"></div>
<div style="left:602.30px;top:227.00px;width:1.00px;height:18.00px;background:#c9d3e6;"></div>
<div style="left:654.30px;top:227.00px;width:1.00px;height:18.00px;background:#c9d3e6;"></div>
<div style="left:701.10px;top:227.00px;width:1.00px;height:18.00px;background:#c9d3e6;"></div>
<div style="left:744.30px;top:227.00px;width:1.00px;height:18.00px;background:#c9d3e6;"></div>
<div style="left:549.50px;top:227.50px;width:53.30px;height:18.00px;line-height:18.00px;text-align:right;color:#ff0c18;font-size:11px;padding-right:5px;">85.70</div>
<div style="left:602.80px;top:227.50px;width:52.00px;height:18.00px;line-height:18.00px;text-align:right;color:#000;font-size:11px;padding-right:5px;">22.75</div>
<div style="left:654.80px;top:227.50px;width:46.80px;height:18.00px;line-height:18.00px;text-align:right;color:#000;font-size:11px;padding-right:5px;">64.74</div>
<div style="left:17.00px;top:245.00px;width:49.70px;height:18.00px;background:#d4d4d4;border-bottom:1px solid #dcdcdc;"></div>
<div style="left:17.00px;top:245.50px;width:49.70px;height:18.00px;line-height:18.00px;text-align:center;color:#000;font-size:11px;">1425</div>
<div style="left:69.20px;top:245.00px;width:237.80px;height:18.00px;background:#dbede1;border-bottom:1px solid #c9d3e6;"></div>
<div style="left:122.00px;top:245.00px;width:1.00px;height:18.00px;background:#c9d3e6;"></div>
<div style="left:174.00px;top:245.00px;width:1.00px;height:18.00px;background:#c9d3e6;"></div>
<div style="left:220.80px;top:245.00px;width:1.00px;height:18.00px;background:#c9d3e6;"></div>
<div style="left:264.00px;top:245.00px;width:1.00px;height:18.00px;background:#c9d3e6;"></div>
<div style="left:69.20px;top:245.50px;width:53.30px;height:18.00px;line-height:18.00px;text-align:right;color:#ff0c18;font-size:11px;padding-right:5px;">58.50</div>
<div style="left:122.50px;top:245.50px;width:52.00px;height:18.00px;line-height:18.00px;text-align:right;color:#000;font-size:11px;padding-right:5px;">25.85</div>
<div style="left:174.50px;top:245.50px;width:46.80px;height:18.00px;line-height:18.00px;text-align:right;color:#000;font-size:11px;padding-right:5px;">81.91</div>
<div style="left:309.20px;top:245.00px;width:237.80px;height:18.00px;background:#dbede1;border-bottom:1px solid #c9d3e6;"></div>
<div style="left:362.00px;top:245.00px;width:1.00px;height:18.00px;background:#c9d3e6;"></div>
<div style="left:414.00px;top:245.00px;width:1.00px;height:18.00px;background:#c9d3e6;"></div>
<div style="left:460.80px;top:245.00px;width:1.00px;height:18.00px;background:#c9d3e6;"></div>
<div style="left:504.00px;top:245.00px;width:1.00px;height:18.00px;background:#c9d3e6;"></div>
<div style="left:309.20px;top:245.50px;width:53.30px;height:18.00px;line-height:18.00px;text-align:right;color:#ff0c18;font-size:11px;padding-right:5px;">75.60001</div>
<div style="left:362.50px;top:245.50px;width:52.00px;height:18.00px;line-height:18.00px;text-align:right;color:#000;font-size:11px;padding-right:5px;">24.06</div>
<div style="left:414.50px;top:245.50px;width:46.80px;height:18.00px;line-height:18.00px;text-align:right;color:#000;font-size:11px;padding-right:5px;">69.61</div>
<div style="left:549.50px;top:245.00px;width:237.80px;height:18.00px;background:#dbede1;border-bottom:1px solid #c9d3e6;"></div>
<div style="left:602.30px;top:245.00px;width:1.00px;height:18.00px;background:#c9d3e6;"></div>
<div style="left:654.30px;top:245.00px;width:1.00px;height:18.00px;background:#c9d3e6;"></div>
<div style="left:701.10px;top:245.00px;width:1.00px;height:18.00px;background:#c9d3e6;"></div>
<div style="left:744.30px;top:245.00px;width:1.00px;height:18.00px;background:#c9d3e6;"></div>
<div style="left:549.50px;top:245.50px;width:53.30px;height:18.00px;line-height:18.00px;text-align:right;color:#ff0c18;font-size:11px;padding-right:5px;">89.20</div>
<div style="left:602.80px;top:245.50px;width:52.00px;height:18.00px;line-height:18.00px;text-align:right;color:#000;font-size:11px;padding-right:5px;">22.92</div>
<div style="left:654.80px;top:245.50px;width:46.80px;height:18.00px;line-height:18.00px;text-align:right;color:#000;font-size:11px;padding-right:5px;">65.93</div>
<div style="left:17.00px;top:263.00px;width:49.70px;height:18.00px;background:#d4d4d4;border-bottom:1px solid #dcdcdc;"></div>
<div style="left:17.00px;top:263.50px;width:49.70px;height:18.00px;line-height:18.00px;text-align:center;color:#000;font-size:11px;">1420</div>
<div style="left:69.20px;top:263.00px;width:237.80px;height:18.00px;background:#f9c08f;border-bottom:1px solid #e9d4c8;"></div>
<div style="left:122.00px;top:263.00px;width:1.00px;height:18.00px;background:#e9d4c8;"></div>
<div style="left:174.00px;top:263.00px;width:1.00px;height:18.00px;background:#e9d4c8;"></div>
<div style="left:220.80px;top:263.00px;width:1.00px;height:18.00px;background:#e9d4c8;"></div>
<div style="left:264.00px;top:263.00px;width:1.00px;height:18.00px;background:#e9d4c8;"></div>
<div style="left:69.20px;top:263.50px;width:53.30px;height:18.00px;line-height:18.00px;text-align:right;color:#ff0c18;font-size:11px;padding-right:5px;">62.80</div>
<div style="left:122.50px;top:263.50px;width:52.00px;height:18.00px;line-height:18.00px;text-align:right;color:#000;font-size:11px;padding-right:5px;">26.17</div>
<div style="left:174.50px;top:263.50px;width:46.80px;height:18.00px;line-height:18.00px;text-align:right;color:#000;font-size:11px;padding-right:5px;">83.82</div>
<div style="left:309.20px;top:263.00px;width:237.80px;height:18.00px;background:#dbede1;border-bottom:1px solid #c9d3e6;"></div>
<div style="left:362.00px;top:263.00px;width:1.00px;height:18.00px;background:#c9d3e6;"></div>
<div style="left:414.00px;top:263.00px;width:1.00px;height:18.00px;background:#c9d3e6;"></div>
<div style="left:460.80px;top:263.00px;width:1.00px;height:18.00px;background:#c9d3e6;"></div>
<div style="left:504.00px;top:263.00px;width:1.00px;height:18.00px;background:#c9d3e6;"></div>
<div style="left:309.20px;top:263.50px;width:53.30px;height:18.00px;line-height:18.00px;text-align:right;color:#ff0c18;font-size:11px;padding-right:5px;">79.30</div>
<div style="left:362.50px;top:263.50px;width:52.00px;height:18.00px;line-height:18.00px;text-align:right;color:#000;font-size:11px;padding-right:5px;">24.25</div>
<div style="left:414.50px;top:263.50px;width:46.80px;height:18.00px;line-height:18.00px;text-align:right;color:#000;font-size:11px;padding-right:5px;">71.07</div>
<div style="left:549.50px;top:263.00px;width:237.80px;height:18.00px;background:#dbede1;border-bottom:1px solid #c9d3e6;"></div>
<div style="left:602.30px;top:263.00px;width:1.00px;height:18.00px;background:#c9d3e6;"></div>
<div style="left:654.30px;top:263.00px;width:1.00px;height:18.00px;background:#c9d3e6;"></div>
<div style="left:701.10px;top:263.00px;width:1.00px;height:18.00px;background:#c9d3e6;"></div>
<div style="left:744.30px;top:263.00px;width:1.00px;height:18.00px;background:#c9d3e6;"></div>
<div style="left:549.50px;top:263.50px;width:53.30px;height:18.00px;line-height:18.00px;text-align:right;color:#ff0c18;font-size:11px;padding-right:5px;">92.80</div>
<div style="left:602.80px;top:263.50px;width:52.00px;height:18.00px;line-height:18.00px;text-align:right;color:#000;font-size:11px;padding-right:5px;">23.12</div>
<div style="left:654.80px;top:263.50px;width:46.80px;height:18.00px;line-height:18.00px;text-align:right;color:#000;font-size:11px;padding-right:5px;">67.09</div>
<div style="left:17.00px;top:281.00px;width:49.70px;height:18.00px;background:#d4d4d4;border-bottom:1px solid #dcdcdc;"></div>
<div style="left:17.00px;top:281.50px;width:49.70px;height:18.00px;line-height:18.00px;text-align:center;color:#000;font-size:11px;">1415</div>
<div style="left:69.20px;top:281.00px;width:237.80px;height:18.00px;background:#f9c08f;border-bottom:1px solid #e9d4c8;"></div>
<div style="left:122.00px;top:281.00px;width:1.00px;height:18.00px;background:#e9d4c8;"></div>
<div style="left:174.00px;top:281.00px;width:1.00px;height:18.00px;background:#e9d4c8;"></div>
<div style="left:220.80px;top:281.00px;width:1.00px;height:18.00px;background:#e9d4c8;"></div>
<div style="left:264.00px;top:281.00px;width:1.00px;height:18.00px;background:#e9d4c8;"></div>
<div style="left:69.20px;top:281.50px;width:53.30px;height:18.00px;line-height:18.00px;text-align:right;color:#ff0c18;font-size:11px;padding-right:5px;">67.10</div>
<div style="left:122.50px;top:281.50px;width:52.00px;height:18.00px;line-height:18.00px;text-align:right;color:#000;font-size:11px;padding-right:5px;">26.38</div>
<div style="left:174.50px;top:281.50px;width:46.80px;height:18.00px;line-height:18.00px;text-align:right;color:#000;font-size:11px;padding-right:5px;">85.65</div>
<div style="left:309.20px;top:281.00px;width:237.80px;height:18.00px;background:#dbede1;border-bottom:1px solid #c9d3e6;"></div>
<div style="left:362.00px;top:281.00px;width:1.00px;height:18.00px;background:#c9d3e6;"></div>
<div style="left:414.00px;top:281.00px;width:1.00px;height:18.00px;background:#c9d3e6;"></div>
<div style="left:460.80px;top:281.00px;width:1.00px;height:18.00px;background:#c9d3e6;"></div>
<div style="left:504.00px;top:281.00px;width:1.00px;height:18.00px;background:#c9d3e6;"></div>
<div style="left:309.20px;top:281.50px;width:53.30px;height:18.00px;line-height:18.00px;text-align:right;color:#ff0c18;font-size:11px;padding-right:5px;">83.10001</div>
<div style="left:362.50px;top:281.50px;width:52.00px;height:18.00px;line-height:18.00px;text-align:right;color:#000;font-size:11px;padding-right:5px;">24.47</div>
<div style="left:414.50px;top:281.50px;width:46.80px;height:18.00px;line-height:18.00px;text-align:right;color:#000;font-size:11px;padding-right:5px;">72.45</div>
<div style="left:549.50px;top:281.00px;width:237.80px;height:18.00px;background:#dbede1;border-bottom:1px solid #c9d3e6;"></div>
<div style="left:602.30px;top:281.00px;width:1.00px;height:18.00px;background:#c9d3e6;"></div>
<div style="left:654.30px;top:281.00px;width:1.00px;height:18.00px;background:#c9d3e6;"></div>
<div style="left:701.10px;top:281.00px;width:1.00px;height:18.00px;background:#c9d3e6;"></div>
<div style="left:744.30px;top:281.00px;width:1.00px;height:18.00px;background:#c9d3e6;"></div>
<div style="left:549.50px;top:281.50px;width:53.30px;height:18.00px;line-height:18.00px;text-align:right;color:#ff0c18;font-size:11px;padding-right:5px;">96.39999</div>
<div style="left:602.80px;top:281.50px;width:52.00px;height:18.00px;line-height:18.00px;text-align:right;color:#000;font-size:11px;padding-right:5px;">23.29</div>
<div style="left:654.80px;top:281.50px;width:46.80px;height:18.00px;line-height:18.00px;text-align:right;color:#000;font-size:11px;padding-right:5px;">68.22</div>
<div style="left:17.00px;top:299.00px;width:49.70px;height:18.00px;background:#d4d4d4;border-bottom:1px solid #dcdcdc;"></div>
<div style="left:17.00px;top:299.50px;width:49.70px;height:18.00px;line-height:18.00px;text-align:center;color:#000;font-size:11px;">1410</div>
<div style="left:69.20px;top:299.00px;width:237.80px;height:18.00px;background:#f9c08f;border-bottom:1px solid #e9d4c8;"></div>
<div style="left:122.00px;top:299.00px;width:1.00px;height:18.00px;background:#e9d4c8;"></div>
<div style="left:174.00px;top:299.00px;width:1.00px;height:18.00px;background:#e9d4c8;"></div>
<div style="left:220.80px;top:299.00px;width:1.00px;height:18.00px;background:#e9d4c8;"></div>
<div style="left:264.00px;top:299.00px;width:1.00px;height:18.00px;background:#e9d4c8;"></div>
<div style="left:69.20px;top:299.50px;width:53.30px;height:18.00px;line-height:18.00px;text-align:right;color:#ff0c18;font-size:11px;padding-right:5px;">71.40</div>
<div style="left:122.50px;top:299.50px;width:52.00px;height:18.00px;line-height:18.00px;text-align:right;color:#000;font-size:11px;padding-right:5px;">26.45</div>
<div style="left:174.50px;top:299.50px;width:46.80px;height:18.00px;line-height:18.00px;text-align:right;color:#000;font-size:11px;padding-right:5px;">87.43</div>
<div style="left:309.20px;top:299.00px;width:237.80px;height:18.00px;background:#dbede1;border-bottom:1px solid #c9d3e6;"></div>
<div style="left:362.00px;top:299.00px;width:1.00px;height:18.00px;background:#c9d3e6;"></div>
<div style="left:414.00px;top:299.00px;width:1.00px;height:18.00px;background:#c9d3e6;"></div>
<div style="left:460.80px;top:299.00px;width:1.00px;height:18.00px;background:#c9d3e6;"></div>
<div style="left:504.00px;top:299.00px;width:1.00px;height:18.00px;background:#c9d3e6;"></div>
<div style="left:309.20px;top:299.50px;width:53.30px;height:18.00px;line-height:18.00px;text-align:right;color:#ff0c18;font-size:11px;padding-right:5px;">86.95</div>
<div style="left:362.50px;top:299.50px;width:52.00px;height:18.00px;line-height:18.00px;text-align:right;color:#000;font-size:11px;padding-right:5px;">24.68</div>
<div style="left:414.50px;top:299.50px;width:46.80px;height:18.00px;line-height:18.00px;text-align:right;color:#000;font-size:11px;padding-right:5px;">73.79</div>
<div style="left:549.50px;top:299.00px;width:237.80px;height:18.00px;background:#dbede1;border-bottom:1px solid #c9d3e6;"></div>
<div style="left:602.30px;top:299.00px;width:1.00px;height:18.00px;background:#c9d3e6;"></div>
<div style="left:654.30px;top:299.00px;width:1.00px;height:18.00px;background:#c9d3e6;"></div>
<div style="left:701.10px;top:299.00px;width:1.00px;height:18.00px;background:#c9d3e6;"></div>
<div style="left:744.30px;top:299.00px;width:1.00px;height:18.00px;background:#c9d3e6;"></div>
<div style="left:549.50px;top:299.50px;width:53.30px;height:18.00px;line-height:18.00px;text-align:right;color:#ff0c18;font-size:11px;padding-right:5px;">100.05</div>
<div style="left:602.80px;top:299.50px;width:52.00px;height:18.00px;line-height:18.00px;text-align:right;color:#000;font-size:11px;padding-right:5px;">23.46</div>
<div style="left:654.80px;top:299.50px;width:46.80px;height:18.00px;line-height:18.00px;text-align:right;color:#000;font-size:11px;padding-right:5px;">69.33</div>
<div style="left:17.00px;top:317.00px;width:49.70px;height:18.00px;background:#d4d4d4;border-bottom:1px solid #dcdcdc;"></div>
<div style="left:17.00px;top:317.50px;width:49.70px;height:18.00px;line-height:18.00px;text-align:center;color:#000;font-size:11px;">1405</div>
<div style="left:69.20px;top:317.00px;width:237.80px;height:18.00px;background:#f9c08f;border-bottom:1px solid #e9d4c8;"></div>
<div style="left:122.00px;top:317.00px;width:1.00px;height:18.00px;background:#e9d4c8;"></div>
<div style="left:174.00px;top:317.00px;width:1.00px;height:18.00px;background:#e9d4c8;"></div>
<div style="left:220.80px;top:317.00px;width:1.00px;height:18.00px;background:#e9d4c8;"></div>
<div style="left:264.00px;top:317.00px;width:1.00px;height:18.00px;background:#e9d4c8;"></div>
<div style="left:69.20px;top:317.50px;width:53.30px;height:18.00px;line-height:18.00px;text-align:right;color:#ff0c18;font-size:11px;padding-right:5px;">75.95</div>
<div style="left:122.50px;top:317.50px;width:52.00px;height:18.00px;line-height:18.00px;text-align:right;color:#000;font-size:11px;padding-right:5px;">26.82</div>
<div style="left:174.50px;top:317.50px;width:46.80px;height:18.00px;line-height:18.00px;text-align:right;color:#000;font-size:11px;padding-right:5px;">88.81</div>
<div style="left:309.20px;top:317.00px;width:237.80px;height:18.00px;background:#dbede1;border-bottom:1px solid #c9d3e6;"></div>
<div style="left:362.00px;top:317.00px;width:1.00px;height:18.00px;background:#c9d3e6;"></div>
<div style="left:414.00px;top:317.00px;width:1.00px;height:18.00px;background:#c9d3e6;"></div>
<div style="left:460.80px;top:317.00px;width:1.00px;height:18.00px;background:#c9d3e6;"></div>
<div style="left:504.00px;top:317.00px;width:1.00px;height:18.00px;background:#c9d3e6;"></div>
<div style="left:309.20px;top:317.50px;width:53.30px;height:18.00px;line-height:18.00px;text-align:right;color:#ff0c18;font-size:11px;padding-right:5px;">90.85</div>
<div style="left:362.50px;top:317.50px;width:52.00px;height:18.00px;line-height:18.00px;text-align:right;color:#000;font-size:11px;padding-right:5px;">24.88</div>
<div style="left:414.50px;top:317.50px;width:46.80px;height:18.00px;line-height:18.00px;text-align:right;color:#000;font-size:11px;padding-right:5px;">75.09</div>
<div style="left:549.50px;top:317.00px;width:237.80px;height:18.00px;background:#dbede1;border-bottom:1px solid #c9d3e6;"></div>
<div style="left:602.30px;top:317.00px;width:1.00px;height:18.00px;background:#c9d3e6;"></div>
<div style="left:654.30px;top:317.00px;width:1.00px;height:18.00px;background:#c9d3e6;"></div>
<div style="left:701.10px;top:317.00px;width:1.00px;height:18.00px;background:#c9d3e6;"></div>
<div style="left:744.30px;top:317.00px;width:1.00px;height:18.00px;background:#c9d3e6;"></div>
<div style="left:549.50px;top:317.50px;width:53.30px;height:18.00px;line-height:18.00px;text-align:right;color:#1c1cff;font-size:11px;padding-right:5px;">103.70</div>
<div style="left:602.80px;top:317.50px;width:52.00px;height:18.00px;line-height:18.00px;text-align:right;color:#000;font-size:11px;padding-right:5px;">23.61</div>
<div style="left:654.80px;top:317.50px;width:46.80px;height:18.00px;line-height:18.00px;text-align:right;color:#000;font-size:11px;padding-right:5px;">70.42</div>
<div style="left:17.00px;top:335.00px;width:49.70px;height:18.00px;background:#d4d4d4;border-bottom:1px solid #dcdcdc;"></div>
<div style="left:17.00px;top:335.50px;width:49.70px;height:18.00px;line-height:18.00px;text-align:center;color:#000;font-size:11px;">1400</div>
<div style="left:69.20px;top:335.00px;width:237.80px;height:18.00px;background:#f9c08f;border-bottom:1px solid #e9d4c8;"></div>
<div style="left:122.00px;top:335.00px;width:1.00px;height:18.00px;background:#e9d4c8;"></div>
<div style="left:174.00px;top:335.00px;width:1.00px;height:18.00px;background:#e9d4c8;"></div>
<div style="left:220.80px;top:335.00px;width:1.00px;height:18.00px;background:#e9d4c8;"></div>
<div style="left:264.00px;top:335.00px;width:1.00px;height:18.00px;background:#e9d4c8;"></div>
<div style="left:69.20px;top:335.50px;width:53.30px;height:18.00px;line-height:18.00px;text-align:right;color:#ff0c18;font-size:11px;padding-right:5px;">80.50</div>
<div style="left:122.50px;top:335.50px;width:52.00px;height:18.00px;line-height:18.00px;text-align:right;color:#000;font-size:11px;padding-right:5px;">27.14</div>
<div style="left:174.50px;top:335.50px;width:46.80px;height:18.00px;line-height:18.00px;text-align:right;color:#000;font-size:11px;padding-right:5px;">90.08</div>
<div style="left:309.20px;top:335.00px;width:237.80px;height:18.00px;background:#dbede1;border-bottom:1px solid #c9d3e6;"></div>
<div style="left:362.00px;top:335.00px;width:1.00px;height:18.00px;background:#c9d3e6;"></div>
<div style="left:414.00px;top:335.00px;width:1.00px;height:18.00px;background:#c9d3e6;"></div>
<div style="left:460.80px;top:335.00px;width:1.00px;height:18.00px;background:#c9d3e6;"></div>
<div style="left:504.00px;top:335.00px;width:1.00px;height:18.00px;background:#c9d3e6;"></div>
<div style="left:309.20px;top:335.50px;width:53.30px;height:18.00px;line-height:18.00px;text-align:right;color:#ff0c18;font-size:11px;padding-right:5px;">94.70</div>
<div style="left:362.50px;top:335.50px;width:52.00px;height:18.00px;line-height:18.00px;text-align:right;color:#000;font-size:11px;padding-right:5px;">25.01</div>
<div style="left:414.50px;top:335.50px;width:46.80px;height:18.00px;line-height:18.00px;text-align:right;color:#000;font-size:11px;padding-right:5px;">76.39</div>
<div style="left:549.50px;top:335.00px;width:237.80px;height:18.00px;background:#dbede1;border-bottom:1px solid #c9d3e6;"></div>
<div style="left:602.30px;top:335.00px;width:1.00px;height:18.00px;background:#c9d3e6;"></div>
<div style="left:654.30px;top:335.00px;width:1.00px;height:18.00px;background:#c9d3e6;"></div>
<div style="left:701.10px;top:335.00px;width:1.00px;height:18.00px;background:#c9d3e6;"></div>
<div style="left:744.30px;top:335.00px;width:1.00px;height:18.00px;background:#c9d3e6;"></div>
<div style="left:549.50px;top:335.50px;width:53.30px;height:18.00px;line-height:18.00px;text-align:right;color:#1c1cff;font-size:11px;padding-right:5px;">107.45</div>
<div style="left:602.80px;top:335.50px;width:52.00px;height:18.00px;line-height:18.00px;text-align:right;color:#000;font-size:11px;padding-right:5px;">23.78</div>
<div style="left:654.80px;top:335.50px;width:46.80px;height:18.00px;line-height:18.00px;text-align:right;color:#000;font-size:11px;padding-right:5px;">71.48</div>
<div style="left:17.00px;top:353.00px;width:49.70px;height:18.00px;background:#d4d4d4;border-bottom:1px solid #dcdcdc;"></div>
<div style="left:17.00px;top:353.50px;width:49.70px;height:18.00px;line-height:18.00px;text-align:center;color:#000;font-size:11px;">1395</div>
<div style="left:69.20px;top:353.00px;width:237.80px;height:18.00px;background:#f9c08f;border-bottom:1px solid #e9d4c8;"></div>
<div style="left:122.00px;top:353.00px;width:1.00px;height:18.00px;background:#e9d4c8;"></div>
<div style="left:174.00px;top:353.00px;width:1.00px;height:18.00px;background:#e9d4c8;"></div>
<div style="left:220.80px;top:353.00px;width:1.00px;height:18.00px;background:#e9d4c8;"></div>
<div style="left:264.00px;top:353.00px;width:1.00px;height:18.00px;background:#e9d4c8;"></div>
<div style="left:69.20px;top:353.50px;width:53.30px;height:18.00px;line-height:18.00px;text-align:right;color:#ff0c18;font-size:11px;padding-right:5px;">85.10001</div>
<div style="left:122.50px;top:353.50px;width:52.00px;height:18.00px;line-height:18.00px;text-align:right;color:#000;font-size:11px;padding-right:5px;">27.40</div>
<div style="left:174.50px;top:353.50px;width:46.80px;height:18.00px;line-height:18.00px;text-align:right;color:#000;font-size:11px;padding-right:5px;">91.26</div>
<div style="left:309.20px;top:353.00px;width:237.80px;height:18.00px;background:#dbede1;border-bottom:1px solid #c9d3e6;"></div>
<div style="left:362.00px;top:353.00px;width:1.00px;height:18.00px;background:#c9d3e6;"></div>
<div style="left:414.00px;top:353.00px;width:1.00px;height:18.00px;background:#c9d3e6;"></div>
<div style="left:460.80px;top:353.00px;width:1.00px;height:18.00px;background:#c9d3e6;"></div>
<div style="left:504.00px;top:353.00px;width:1.00px;height:18.00px;background:#c9d3e6;"></div>
<div style="left:309.20px;top:353.50px;width:53.30px;height:18.00px;line-height:18.00px;text-align:right;color:#ff0c18;font-size:11px;padding-right:5px;">98.70</div>
<div style="left:362.50px;top:353.50px;width:52.00px;height:18.00px;line-height:18.00px;text-align:right;color:#000;font-size:11px;padding-right:5px;">25.21</div>
<div style="left:414.50px;top:353.50px;width:46.80px;height:18.00px;line-height:18.00px;text-align:right;color:#000;font-size:11px;padding-right:5px;">77.60</div>
<div style="left:549.50px;top:353.00px;width:237.80px;height:18.00px;background:#dbede1;border-bottom:1px solid #c9d3e6;"></div>
<div style="left:602.30px;top:353.00px;width:1.00px;height:18.00px;background:#c9d3e6;"></div>
<div style="left:654.30px;top:353.00px;width:1.00px;height:18.00px;background:#c9d3e6;"></div>
<div style="left:701.10px;top:353.00px;width:1.00px;height:18.00px;background:#c9d3e6;"></div>
<div style="left:744.30px;top:353.00px;width:1.00px;height:18.00px;background:#c9d3e6;"></div>
<div style="left:549.50px;top:353.50px;width:53.30px;height:18.00px;line-height:18.00px;text-align:right;color:#1c1cff;font-size:11px;padding-right:5px;">111.20</div>
<div style="left:602.80px;top:353.50px;width:52.00px;height:18.00px;line-height:18.00px;text-align:right;color:#000;font-size:11px;padding-right:5px;">23.94</div>
<div style="left:654.80px;top:353.50px;width:46.80px;height:18.00px;line-height:18.00px;text-align:right;color:#000;font-size:11px;padding-right:5px;">72.50</div>
<div style="left:17.00px;top:371.00px;width:49.70px;height:18.00px;background:#d4d4d4;border-bottom:1px solid #dcdcdc;"></div>
<div style="left:17.00px;top:371.50px;width:49.70px;height:18.00px;line-height:18.00px;text-align:center;color:#000;font-size:11px;">1390</div>
<div style="left:69.20px;top:371.00px;width:237.80px;height:18.00px;background:#f9c08f;border-bottom:1px solid #e9d4c8;"></div>
<div style="left:122.00px;top:371.00px;width:1.00px;height:18.00px;background:#e9d4c8;"></div>
<div style="left:174.00px;top:371.00px;width:1.00px;height:18.00px;background:#e9d4c8;"></div>
<div style="left:220.80px;top:371.00px;width:1.00px;height:18.00px;background:#e9d4c8;"></div>
<div style="left:264.00px;top:371.00px;width:1.00px;height:18.00px;background:#e9d4c8;"></div>
<div style="left:69.20px;top:371.50px;width:53.30px;height:18.00px;line-height:18.00px;text-align:right;color:#ff0c18;font-size:11px;padding-right:5px;">89.75</div>
<div style="left:122.50px;top:371.50px;width:52.00px;height:18.00px;line-height:18.00px;text-align:right;color:#000;font-size:11px;padding-right:5px;">27.67</div>
<div style="left:174.50px;top:371.50px;width:46.80px;height:18.00px;line-height:18.00px;text-align:right;color:#000;font-size:11px;padding-right:5px;">92.32</div>
<div style="left:309.20px;top:371.00px;width:237.80px;height:18.00px;background:#dbede1;border-bottom:1px solid #c9d3e6;"></div>
<div style="left:362.00px;top:371.00px;width:1.00px;height:18.00px;background:#c9d3e6;"></div>
<div style="left:414.00px;top:371.00px;width:1.00px;height:18.00px;background:#c9d3e6;"></div>
<div style="left:460.80px;top:371.00px;width:1.00px;height:18.00px;background:#c9d3e6;"></div>
<div style="left:504.00px;top:371.00px;width:1.00px;height:18.00px;background:#c9d3e6;"></div>
<div style="left:309.20px;top:371.50px;width:53.30px;height:18.00px;line-height:18.00px;text-align:right;color:#1c1cff;font-size:11px;padding-right:5px;">102.75</div>
<div style="left:362.50px;top:371.50px;width:52.00px;height:18.00px;line-height:18.00px;text-align:right;color:#000;font-size:11px;padding-right:5px;">25.39</div>
<div style="left:414.50px;top:371.50px;width:46.80px;height:18.00px;line-height:18.00px;text-align:right;color:#000;font-size:11px;padding-right:5px;">78.76</div>
<div style="left:549.50px;top:371.00px;width:237.80px;height:18.00px;background:#dbede1;border-bottom:1px solid #c9d3e6;"></div>
<div style="left:602.30px;top:371.00px;width:1.00px;height:18.00px;background:#c9d3e6;"></div>
<div style="left:654.30px;top:371.00px;width:1.00px;height:18.00px;background:#c9d3e6;"></div>
<div style="left:701.10px;top:371.00px;width:1.00px;height:18.00px;background:#c9d3e6;"></div>
<div style="left:744.30px;top:371.00px;width:1.00px;height:18.00px;background:#c9d3e6;"></div>
<div style="left:549.50px;top:371.50px;width:53.30px;height:18.00px;line-height:18.00px;text-align:right;color:#000;font-size:11px;padding-right:5px;">115.00</div>
<div style="left:602.80px;top:371.50px;width:52.00px;height:18.00px;line-height:18.00px;text-align:right;color:#000;font-size:11px;padding-right:5px;">24.09</div>
<div style="left:654.80px;top:371.50px;width:46.80px;height:18.00px;line-height:18.00px;text-align:right;color:#000;font-size:11px;padding-right:5px;">73.51</div>
<div style="left:17.00px;top:389.00px;width:49.70px;height:18.00px;background:#d4d4d4;border-bottom:1px solid #dcdcdc;"></div>
<div style="left:17.00px;top:389.50px;width:49.70px;height:18.00px;line-height:18.00px;text-align:center;color:#000;font-size:11px;">1385</div>
<div style="left:69.20px;top:389.00px;width:237.80px;height:18.00px;background:#f9c08f;border-bottom:1px solid #e9d4c8;"></div>
<div style="left:122.00px;top:389.00px;width:1.00px;height:18.00px;background:#e9d4c8;"></div>
<div style="left:174.00px;top:389.00px;width:1.00px;height:18.00px;background:#e9d4c8;"></div>
<div style="left:220.80px;top:389.00px;width:1.00px;height:18.00px;background:#e9d4c8;"></div>
<div style="left:264.00px;top:389.00px;width:1.00px;height:18.00px;background:#e9d4c8;"></div>
<div style="left:69.20px;top:389.50px;width:53.30px;height:18.00px;line-height:18.00px;text-align:right;color:#ff0c18;font-size:11px;padding-right:5px;">94.39999</div>
<div style="left:122.50px;top:389.50px;width:52.00px;height:18.00px;line-height:18.00px;text-align:right;color:#000;font-size:11px;padding-right:5px;">27.79</div>
<div style="left:174.50px;top:389.50px;width:46.80px;height:18.00px;line-height:18.00px;text-align:right;color:#000;font-size:11px;padding-right:5px;">93.37</div>
<div style="left:309.20px;top:389.00px;width:237.80px;height:18.00px;background:#dbede1;border-bottom:1px solid #c9d3e6;"></div>
<div style="left:362.00px;top:389.00px;width:1.00px;height:18.00px;background:#c9d3e6;"></div>
<div style="left:414.00px;top:389.00px;width:1.00px;height:18.00px;background:#c9d3e6;"></div>
<div style="left:460.80px;top:389.00px;width:1.00px;height:18.00px;background:#c9d3e6;"></div>
<div style="left:504.00px;top:389.00px;width:1.00px;height:18.00px;background:#c9d3e6;"></div>
<div style="left:309.20px;top:389.50px;width:53.30px;height:18.00px;line-height:18.00px;text-align:right;color:#1c1cff;font-size:11px;padding-right:5px;">106.85</div>
<div style="left:362.50px;top:389.50px;width:52.00px;height:18.00px;line-height:18.00px;text-align:right;color:#000;font-size:11px;padding-right:5px;">25.58</div>
<div style="left:414.50px;top:389.50px;width:46.80px;height:18.00px;line-height:18.00px;text-align:right;color:#000;font-size:11px;padding-right:5px;">79.88</div>
<div style="left:549.50px;top:389.00px;width:237.80px;height:18.00px;background:#dbede1;border-bottom:1px solid #c9d3e6;"></div>
<div style="left:602.30px;top:389.00px;width:1.00px;height:18.00px;background:#c9d3e6;"></div>
<div style="left:654.30px;top:389.00px;width:1.00px;height:18.00px;background:#c9d3e6;"></div>
<div style="left:701.10px;top:389.00px;width:1.00px;height:18.00px;background:#c9d3e6;"></div>
<div style="left:744.30px;top:389.00px;width:1.00px;height:18.00px;background:#c9d3e6;"></div>
<div style="left:549.50px;top:389.50px;width:53.30px;height:18.00px;line-height:18.00px;text-align:right;color:#1c1cff;font-size:11px;padding-right:5px;">118.90</div>
<div style="left:602.80px;top:389.50px;width:52.00px;height:18.00px;line-height:18.00px;text-align:right;color:#000;font-size:11px;padding-right:5px;">24.27</div>
<div style="left:654.80px;top:389.50px;width:46.80px;height:18.00px;line-height:18.00px;text-align:right;color:#000;font-size:11px;padding-right:5px;">74.47</div>
<div style="left:17.00px;top:407.00px;width:49.70px;height:18.00px;background:#d4d4d4;border-bottom:1px solid #dcdcdc;"></div>
<div style="left:17.00px;top:407.50px;width:49.70px;height:18.00px;line-height:18.00px;text-align:center;color:#000;font-size:11px;">1380</div>
<div style="left:69.20px;top:407.00px;width:237.80px;height:18.00px;background:#f9c08f;border-bottom:1px solid #e9d4c8;"></div>
<div style="left:122.00px;top:407.00px;width:1.00px;height:18.00px;background:#e9d4c8;"></div>
<div style="left:174.00px;top:407.00px;width:1.00px;height:18.00px;background:#e9d4c8;"></div>
<div style="left:220.80px;top:407.00px;width:1.00px;height:18.00px;background:#e9d4c8;"></div>
<div style="left:264.00px;top:407.00px;width:1.00px;height:18.00px;background:#e9d4c8;"></div>
<div style="left:69.20px;top:407.50px;width:53.30px;height:18.00px;line-height:18.00px;text-align:right;color:#ff0c18;font-size:11px;padding-right:5px;">99.10001</div>
<div style="left:122.50px;top:407.50px;width:52.00px;height:18.00px;line-height:18.00px;text-align:right;color:#000;font-size:11px;padding-right:5px;">27.92</div>
<div style="left:174.50px;top:407.50px;width:46.80px;height:18.00px;line-height:18.00px;text-align:right;color:#000;font-size:11px;padding-right:5px;">94.29</div>
<div style="left:309.20px;top:407.00px;width:237.80px;height:18.00px;background:#dbede1;border-bottom:1px solid #c9d3e6;"></div>
<div style="left:362.00px;top:407.00px;width:1.00px;height:18.00px;background:#c9d3e6;"></div>
<div style="left:414.00px;top:407.00px;width:1.00px;height:18.00px;background:#c9d3e6;"></div>
<div style="left:460.80px;top:407.00px;width:1.00px;height:18.00px;background:#c9d3e6;"></div>
<div style="left:504.00px;top:407.00px;width:1.00px;height:18.00px;background:#c9d3e6;"></div>
<div style="left:309.20px;top:407.50px;width:53.30px;height:18.00px;line-height:18.00px;text-align:right;color:#ff0c18;font-size:11px;padding-right:5px;">111.00</div>
<div style="left:362.50px;top:407.50px;width:52.00px;height:18.00px;line-height:18.00px;text-align:right;color:#000;font-size:11px;padding-right:5px;">25.78</div>
<div style="left:414.50px;top:407.50px;width:46.80px;height:18.00px;line-height:18.00px;text-align:right;color:#000;font-size:11px;padding-right:5px;">80.93</div>
<div style="left:549.50px;top:407.00px;width:237.80px;height:18.00px;background:#dbede1;border-bottom:1px solid #c9d3e6;"></div>
<div style="left:602.30px;top:407.00px;width:1.00px;height:18.00px;background:#c9d3e6;"></div>
<div style="left:654.30px;top:407.00px;width:1.00px;height:18.00px;background:#c9d3e6;"></div>
<div style="left:701.10px;top:407.00px;width:1.00px;height:18.00px;background:#c9d3e6;"></div>
<div style="left:744.30px;top:407.00px;width:1.00px;height:18.00px;background:#c9d3e6;"></div>
<div style="left:549.50px;top:407.50px;width:53.30px;height:18.00px;line-height:18.00px;text-align:right;color:#1c1cff;font-size:11px;padding-right:5px;">122.80</div>
<div style="left:602.80px;top:407.50px;width:52.00px;height:18.00px;line-height:18.00px;text-align:right;color:#000;font-size:11px;padding-right:5px;">24.42</div>
<div style="left:654.80px;top:407.50px;width:46.80px;height:18.00px;line-height:18.00px;text-align:right;color:#000;font-size:11px;padding-right:5px;">75.43</div>
<div style="left:17.00px;top:425.00px;width:49.70px;height:18.00px;background:#d4d4d4;border-bottom:1px solid #dcdcdc;"></div>
<div style="left:17.00px;top:425.50px;width:49.70px;height:18.00px;line-height:18.00px;text-align:center;color:#000;font-size:11px;">1375</div>
<div style="left:69.20px;top:425.00px;width:237.80px;height:18.00px;background:#f9c08f;border-bottom:1px solid #e9d4c8;"></div>
<div style="left:122.00px;top:425.00px;width:1.00px;height:18.00px;background:#e9d4c8;"></div>
<div style="left:174.00px;top:425.00px;width:1.00px;height:18.00px;background:#e9d4c8;"></div>
<div style="left:220.80px;top:425.00px;width:1.00px;height:18.00px;background:#e9d4c8;"></div>
<div style="left:264.00px;top:425.00px;width:1.00px;height:18.00px;background:#e9d4c8;"></div>
<div style="left:69.20px;top:425.50px;width:53.30px;height:18.00px;line-height:18.00px;text-align:right;color:#ff0c18;font-size:11px;padding-right:5px;">101.00</div>
<div style="left:122.50px;top:425.50px;width:52.00px;height:18.00px;line-height:18.00px;text-align:right;color:#000;font-size:11px;padding-right:5px;">9.99</div>
<div style="left:174.50px;top:425.50px;width:46.80px;height:18.00px;line-height:18.00px;text-align:right;color:#000;font-size:11px;padding-right:5px;">99.99</div>
<div style="left:309.20px;top:425.00px;width:237.80px;height:18.00px;background:#f9c08f;border-bottom:1px solid #e9d4c8;"></div>
<div style="left:362.00px;top:425.00px;width:1.00px;height:18.00px;background:#e9d4c8;"></div>
<div style="left:414.00px;top:425.00px;width:1.00px;height:18.00px;background:#e9d4c8;"></div>
<div style="left:460.80px;top:425.00px;width:1.00px;height:18.00px;background:#e9d4c8;"></div>
<div style="left:504.00px;top:425.00px;width:1.00px;height:18.00px;background:#e9d4c8;"></div>
<div style="left:309.20px;top:425.50px;width:53.30px;height:18.00px;line-height:18.00px;text-align:right;color:#ff0c18;font-size:11px;padding-right:5px;">113.40</div>
<div style="left:362.50px;top:425.50px;width:52.00px;height:18.00px;line-height:18.00px;text-align:right;color:#000;font-size:11px;padding-right:5px;">24.40</div>
<div style="left:414.50px;top:425.50px;width:46.80px;height:18.00px;line-height:18.00px;text-align:right;color:#000;font-size:11px;padding-right:5px;">82.24</div>
<div style="left:549.50px;top:425.00px;width:237.80px;height:18.00px;background:#dbede1;border-bottom:1px solid #c9d3e6;"></div>
<div style="left:602.30px;top:425.00px;width:1.00px;height:18.00px;background:#c9d3e6;"></div>
<div style="left:654.30px;top:425.00px;width:1.00px;height:18.00px;background:#c9d3e6;"></div>
<div style="left:701.10px;top:425.00px;width:1.00px;height:18.00px;background:#c9d3e6;"></div>
<div style="left:744.30px;top:425.00px;width:1.00px;height:18.00px;background:#c9d3e6;"></div>
<div style="left:549.50px;top:425.50px;width:53.30px;height:18.00px;line-height:18.00px;text-align:right;color:#1c1cff;font-size:11px;padding-right:5px;">126.75</div>
<div style="left:602.80px;top:425.50px;width:52.00px;height:18.00px;line-height:18.00px;text-align:right;color:#000;font-size:11px;padding-right:5px;">24.59</div>
<div style="left:654.80px;top:425.50px;width:46.80px;height:18.00px;line-height:18.00px;text-align:right;color:#000;font-size:11px;padding-right:5px;">76.33</div>
</div>
<div style="left:786.50px;top:117.20px;width:13.50px;height:315.80px;background:linear-gradient(90deg,#f3f3f3,#fcfcfc);"></div>
<div style="left:789.50px;top:124.20px;width:8.00px;height:0.00px;border-left:4px solid transparent;border-right:4px solid transparent;border-bottom:5px solid #53627e;"></div>
<div style="left:789.50px;top:421.00px;width:8.00px;height:0.00px;border-left:4px solid transparent;border-right:4px solid transparent;border-top:5px solid #53627e;"></div>
<div style="left:788.50px;top:257.50px;width:10.00px;height:12.00px;border:1px solid #8a9cb8;border-radius:2px;background:repeating-linear-gradient(#f4f6fa 0,#f4f6fa 1.5px,#7d8ca6 1.5px,#7d8ca6 2.5px);background-clip:content-box;padding:2px 1px;"></div>
<div style="left:17.00px;top:433.00px;width:770.00px;height:9.00px;background:#d6e3f2;"></div>
<div style="left:388.00px;top:435.50px;width:38.00px;height:2.50px;background:repeating-linear-gradient(90deg,#1a1a1a 0,#1a1a1a 2px,transparent 2px,transparent 4.3px);"></div>
<div style="left:17.00px;top:442.50px;width:49.70px;height:19.80px;background:linear-gradient(#fdfdfe,#eff2f7 50%,#e2e8f0 51%,#d6dee9);border-bottom:1px solid #a3b6d0;border-right:1px solid #9fb3cf;"></div>
<div style="left:17.00px;top:442.50px;width:49.70px;height:19.80px;line-height:19.80px;text-align:center;color:#000;font-size:11px;">PUT</div>
<div style="left:69.20px;top:442.50px;width:237.80px;height:19.80px;background:linear-gradient(#fdfdfe,#eff2f7 50%,#e2e8f0 51%,#d6dee9);border-bottom:1px solid #a3b6d0;border-right:1px solid #9fb3cf;"></div>
<div style="left:69.20px;top:442.50px;width:53.30px;height:19.80px;line-height:19.80px;text-align:center;color:#000;font-size:11px;">Mid</div>
<div style="left:122.00px;top:443.50px;width:1.00px;height:17.80px;background:#b3c3d8;"></div>
<div style="left:122.50px;top:442.50px;width:52.00px;height:19.80px;line-height:19.80px;text-align:center;color:#000;font-size:11px;">IV</div>
<div style="left:174.00px;top:443.50px;width:1.00px;height:17.80px;background:#b3c3d8;"></div>
<div style="left:174.50px;top:442.50px;width:46.80px;height:19.80px;line-height:19.80px;text-align:center;color:#000;font-size:11px;">Delta</div>
<div style="left:220.80px;top:443.50px;width:1.00px;height:17.80px;background:#b3c3d8;"></div>
<div style="left:221.30px;top:442.50px;width:43.20px;height:19.80px;line-height:19.80px;text-align:center;color:#000;font-size:11px;">Model</div>
<div style="left:264.00px;top:443.50px;width:1.00px;height:17.80px;background:#b3c3d8;"></div>
<div style="left:264.50px;top:442.50px;width:42.50px;height:19.80px;line-height:19.80px;text-align:center;color:#000;font-size:11px;">Pos</div>
<div style="left:309.20px;top:442.50px;width:237.80px;height:19.80px;background:linear-gradient(#fdfdfe,#eff2f7 50%,#e2e8f0 51%,#d6dee9);border-bottom:1px solid #a3b6d0;border-right:1px solid #9fb3cf;"></div>
<div style="left:309.20px;top:442.50px;width:53.30px;height:19.80px;line-height:19.80px;text-align:center;color:#000;font-size:11px;">Mid</div>
<div style="left:362.00px;top:443.50px;width:1.00px;height:17.80px;background:#b3c3d8;"></div>
<div style="left:362.50px;top:442.50px;width:52.00px;height:19.80px;line-height:19.80px;text-align:center;color:#000;font-size:11px;">IV</div>
<div style="left:414.00px;top:443.50px;width:1.00px;height:17.80px;background:#b3c3d8;"></div>
<div style="left:414.50px;top:442.50px;width:46.80px;height:19.80px;line-height:19.80px;text-align:center;color:#000;font-size:11px;">Delta</div>
<div style="left:460.80px;top:443.50px;width:1.00px;height:17.80px;background:#b3c3d8;"></div>
<div style="left:461.30px;top:442.50px;width:43.20px;height:19.80px;line-height:19.80px;text-align:center;color:#000;font-size:11px;">Model</div>
<div style="left:504.00px;top:443.50px;width:1.00px;height:17.80px;background:#b3c3d8;"></div>
<div style="left:504.50px;top:442.50px;width:42.50px;height:19.80px;line-height:19.80px;text-align:center;color:#000;font-size:11px;">Pos</div>
<div style="left:549.50px;top:442.50px;width:237.80px;height:19.80px;background:linear-gradient(#fdfdfe,#eff2f7 50%,#e2e8f0 51%,#d6dee9);border-bottom:1px solid #a3b6d0;border-right:1px solid #9fb3cf;"></div>
<div style="left:549.50px;top:442.50px;width:53.30px;height:19.80px;line-height:19.80px;text-align:center;color:#000;font-size:11px;">Mid</div>
<div style="left:602.30px;top:443.50px;width:1.00px;height:17.80px;background:#b3c3d8;"></div>
<div style="left:602.80px;top:442.50px;width:52.00px;height:19.80px;line-height:19.80px;text-align:center;color:#000;font-size:11px;">IV</div>
<div style="left:654.30px;top:443.50px;width:1.00px;height:17.80px;background:#b3c3d8;"></div>
<div style="left:654.80px;top:442.50px;width:46.80px;height:19.80px;line-height:19.80px;text-align:center;color:#000;font-size:11px;">Delta</div>
<div style="left:701.10px;top:443.50px;width:1.00px;height:17.80px;background:#b3c3d8;"></div>
<div style="left:701.60px;top:442.50px;width:43.20px;height:19.80px;line-height:19.80px;text-align:center;color:#000;font-size:11px;">Model</div>
<div style="left:744.30px;top:443.50px;width:1.00px;height:17.80px;background:#b3c3d8;"></div>
<div style="left:744.80px;top:442.50px;width:42.50px;height:19.80px;line-height:19.80px;text-align:center;color:#000;font-size:11px;">Pos</div>
<div style="left:0;top:0;width:1920px;height:772px;">
<div style="left:17.00px;top:462.30px;width:49.70px;height:18.00px;background:#d4d4d4;border-bottom:1px solid #dcdcdc;"></div>
<div style="left:17.00px;top:462.80px;width:49.70px;height:18.00px;line-height:18.00px;text-align:center;color:#000;font-size:11px;">1560</div>
<div style="left:69.20px;top:462.30px;width:237.80px;height:18.00px;background:#f9c08f;border-bottom:1px solid #e9d4c8;"></div>
<div style="left:122.00px;top:462.30px;width:1.00px;height:18.00px;background:#e9d4c8;"></div>
<div style="left:174.00px;top:462.30px;width:1.00px;height:18.00px;background:#e9d4c8;"></div>
<div style="left:220.80px;top:462.30px;width:1.00px;height:18.00px;background:#e9d4c8;"></div>
<div style="left:264.00px;top:462.30px;width:1.00px;height:18.00px;background:#e9d4c8;"></div>
<div style="left:69.20px;top:462.80px;width:53.30px;height:18.00px;line-height:18.00px;text-align:right;color:#1c1cff;font-size:11px;padding-right:5px;">82.60001</div>
<div style="left:122.50px;top:462.80px;width:52.00px;height:18.00px;line-height:18.00px;text-align:right;color:#000;font-size:11px;padding-right:5px;">14.65</div>
<div style="left:174.50px;top:462.80px;width:46.80px;height:18.00px;line-height:18.00px;text-align:right;color:#000;font-size:11px;padding-right:5px;">-99.06</div>
<div style="left:309.20px;top:462.30px;width:237.80px;height:18.00px;background:#dbede1;border-bottom:1px solid #c9d3e6;"></div>
<div style="left:362.00px;top:462.30px;width:1.00px;height:18.00px;background:#c9d3e6;"></div>
<div style="left:414.00px;top:462.30px;width:1.00px;height:18.00px;background:#c9d3e6;"></div>
<div style="left:460.80px;top:462.30px;width:1.00px;height:18.00px;background:#c9d3e6;"></div>
<div style="left:504.00px;top:462.30px;width:1.00px;height:18.00px;background:#c9d3e6;"></div>
<div style="left:309.20px;top:462.80px;width:53.30px;height:18.00px;line-height:18.00px;text-align:right;color:#ff0c18;font-size:11px;padding-right:5px;">89.45</div>
<div style="left:362.50px;top:462.80px;width:52.00px;height:18.00px;line-height:18.00px;text-align:right;color:#000;font-size:11px;padding-right:5px;">17.36</div>
<div style="left:414.50px;top:462.80px;width:46.80px;height:18.00px;line-height:18.00px;text-align:right;color:#000;font-size:11px;padding-right:5px;">-82.95</div>
<div style="left:549.50px;top:462.30px;width:237.80px;height:18.00px;background:#dbede1;border-bottom:1px solid #c9d3e6;"></div>
<div style="left:602.30px;top:462.30px;width:1.00px;height:18.00px;background:#c9d3e6;"></div>
<div style="left:654.30px;top:462.30px;width:1.00px;height:18.00px;background:#c9d3e6;"></div>
<div style="left:701.10px;top:462.30px;width:1.00px;height:18.00px;background:#c9d3e6;"></div>
<div style="left:744.30px;top:462.30px;width:1.00px;height:18.00px;background:#c9d3e6;"></div>
<div style="left:549.50px;top:462.80px;width:53.30px;height:18.00px;line-height:18.00px;text-align:right;color:#ff0c18;font-size:11px;padding-right:5px;">99.35001</div>
<div style="left:602.80px;top:462.80px;width:52.00px;height:18.00px;line-height:18.00px;text-align:right;color:#000;font-size:11px;padding-right:5px;">17.74</div>
<div style="left:654.80px;top:462.80px;width:46.80px;height:18.00px;line-height:18.00px;text-align:right;color:#000;font-size:11px;padding-right:5px;">-74.05</div>
<div style="left:17.00px;top:480.30px;width:49.70px;height:18.00px;background:#d4d4d4;border-bottom:1px solid #dcdcdc;"></div>
<div style="left:17.00px;top:480.80px;width:49.70px;height:18.00px;line-height:18.00px;text-align:center;color:#000;font-size:11px;">1555</div>
<div style="left:69.20px;top:480.30px;width:237.80px;height:18.00px;background:#f9c08f;border-bottom:1px solid #e9d4c8;"></div>
<div style="left:122.00px;top:480.30px;width:1.00px;height:18.00px;background:#e9d4c8;"></div>
<div style="left:174.00px;top:480.30px;width:1.00px;height:18.00px;background:#e9d4c8;"></div>
<div style="left:220.80px;top:480.30px;width:1.00px;height:18.00px;background:#e9d4c8;"></div>
<div style="left:264.00px;top:480.30px;width:1.00px;height:18.00px;background:#e9d4c8;"></div>
<div style="left:69.20px;top:480.80px;width:53.30px;height:18.00px;line-height:18.00px;text-align:right;color:#1c1cff;font-size:11px;padding-right:5px;">77.65</div>
<div style="left:122.50px;top:480.80px;width:52.00px;height:18.00px;line-height:18.00px;text-align:right;color:#000;font-size:11px;padding-right:5px;">14.60</div>
<div style="left:174.50px;top:480.80px;width:46.80px;height:18.00px;line-height:18.00px;text-align:right;color:#000;font-size:11px;padding-right:5px;">-98.67</div>
<div style="left:309.20px;top:480.30px;width:237.80px;height:18.00px;background:#dbede1;border-bottom:1px solid #c9d3e6;"></div>
<div style="left:362.00px;top:480.30px;width:1.00px;height:18.00px;background:#c9d3e6;"></div>
<div style="left:414.00px;top:480.30px;width:1.00px;height:18.00px;background:#c9d3e6;"></div>
<div style="left:460.80px;top:480.30px;width:1.00px;height:18.00px;background:#c9d3e6;"></div>
<div style="left:504.00px;top:480.30px;width:1.00px;height:18.00px;background:#c9d3e6;"></div>
<div style="left:309.20px;top:480.80px;width:53.30px;height:18.00px;line-height:18.00px;text-align:right;color:#ff0c18;font-size:11px;padding-right:5px;">85.55</div>
<div style="left:362.50px;top:480.80px;width:52.00px;height:18.00px;line-height:18.00px;text-align:right;color:#000;font-size:11px;padding-right:5px;">17.59</div>
<div style="left:414.50px;top:480.80px;width:46.80px;height:18.00px;line-height:18.00px;text-align:right;color:#000;font-size:11px;padding-right:5px;">-81.11</div>
<div style="left:549.50px;top:480.30px;width:237.80px;height:18.00px;background:#dbede1;border-bottom:1px solid #c9d3e6;"></div>
<div style="left:602.30px;top:480.30px;width:1.00px;height:18.00px;background:#c9d3e6;"></div>
<div style="left:654.30px;top:480.30px;width:1.00px;height:18.00px;background:#c9d3e6;"></div>
<div style="left:701.10px;top:480.30px;width:1.00px;height:18.00px;background:#c9d3e6;"></div>
<div style="left:744.30px;top:480.30px;width:1.00px;height:18.00px;background:#c9d3e6;"></div>
<div style="left:549.50px;top:480.80px;width:53.30px;height:18.00px;line-height:18.00px;text-align:right;color:#ff0c18;font-size:11px;padding-right:5px;">95.95</div>
<div style="left:602.80px;top:480.80px;width:52.00px;height:18.00px;line-height:18.00px;text-align:right;color:#000;font-size:11px;padding-right:5px;">17.92</div>
<div style="left:654.80px;top:480.80px;width:46.80px;height:18.00px;line-height:18.00px;text-align:right;color:#000;font-size:11px;padding-right:5px;">-72.48</div>
<div style="left:17.00px;top:498.30px;width:49.70px;height:18.00px;background:#d4d4d4;border-bottom:1px solid #dcdcdc;"></div>
<div style="left:17.00px;top:498.80px;width:49.70px;height:18.00px;line-height:18.00px;text-align:center;color:#000;font-size:11px;">1550</div>
<div style="left:69.20px;top:498.30px;width:237.80px;height:18.00px;background:#f9c08f;border-bottom:1px solid #e9d4c8;"></div>
<div style="left:122.00px;top:498.30px;width:1.00px;height:18.00px;background:#e9d4c8;"></div>
<div style="left:174.00px;top:498.30px;width:1.00px;height:18.00px;background:#e9d4c8;"></div>
<div style="left:220.80px;top:498.30px;width:1.00px;height:18.00px;background:#e9d4c8;"></div>
<div style="left:264.00px;top:498.30px;width:1.00px;height:18.00px;background:#e9d4c8;"></div>
<div style="left:69.20px;top:498.80px;width:53.30px;height:18.00px;line-height:18.00px;text-align:right;color:#1c1cff;font-size:11px;padding-right:5px;">72.80</div>
<div style="left:122.50px;top:498.80px;width:52.00px;height:18.00px;line-height:18.00px;text-align:right;color:#000;font-size:11px;padding-right:5px;">15.24</div>
<div style="left:174.50px;top:498.80px;width:46.80px;height:18.00px;line-height:18.00px;text-align:right;color:#000;font-size:11px;padding-right:5px;">-97.67</div>
<div style="left:309.20px;top:498.30px;width:237.80px;height:18.00px;background:#dbede1;border-bottom:1px solid #c9d3e6;"></div>
<div style="left:362.00px;top:498.30px;width:1.00px;height:18.00px;background:#c9d3e6;"></div>
<div style="left:414.00px;top:498.30px;width:1.00px;height:18.00px;background:#c9d3e6;"></div>
<div style="left:460.80px;top:498.30px;width:1.00px;height:18.00px;background:#c9d3e6;"></div>
<div style="left:504.00px;top:498.30px;width:1.00px;height:18.00px;background:#c9d3e6;"></div>
<div style="left:309.20px;top:498.80px;width:53.30px;height:18.00px;line-height:18.00px;text-align:right;color:#ff0c18;font-size:11px;padding-right:5px;">81.80</div>
<div style="left:362.50px;top:498.80px;width:52.00px;height:18.00px;line-height:18.00px;text-align:right;color:#000;font-size:11px;padding-right:5px;">17.84</div>
<div style="left:414.50px;top:498.80px;width:46.80px;height:18.00px;line-height:18.00px;text-align:right;color:#000;font-size:11px;padding-right:5px;">-79.16</div>
<div style="left:549.50px;top:498.30px;width:237.80px;height:18.00px;background:#dbede1;border-bottom:1px solid #c9d3e6;"></div>
<div style="left:602.30px;top:498.30px;width:1.00px;height:18.00px;background:#c9d3e6;"></div>
<div style="left:654.30px;top:498.30px;width:1.00px;height:18.00px;background:#c9d3e6;"></div>
<div style="left:701.10px;top:498.30px;width:1.00px;height:18.00px;background:#c9d3e6;"></div>
<div style="left:744.30px;top:498.30px;width:1.00px;height:18.00px;background:#c9d3e6;"></div>
<div style="left:549.50px;top:498.80px;width:53.30px;height:18.00px;line-height:18.00px;text-align:right;color:#ff0c18;font-size:11px;padding-right:5px;">92.60</div>
<div style="left:602.80px;top:498.80px;width:52.00px;height:18.00px;line-height:18.00px;text-align:right;color:#000;font-size:11px;padding-right:5px;">18.08</div>
<div style="left:654.80px;top:498.80px;width:46.80px;height:18.00px;line-height:18.00px;text-align:right;color:#000;font-size:11px;padding-right:5px;">-70.92</div>
<div style="left:17.00px;top:516.30px;width:49.70px;height:18.00px;background:#d4d4d4;border-bottom:1px solid #dcdcdc;"></div>
<div style="left:17.00px;top:516.80px;width:49.70px;height:18.00px;line-height:18.00px;text-align:center;color:#000;font-size:11px;">1545</div>
<div style="left:69.20px;top:516.30px;width:237.80px;height:18.00px;background:#f9c08f;border-bottom:1px solid #e9d4c8;"></div>
<div style="left:122.00px;top:516.30px;width:1.00px;height:18.00px;background:#e9d4c8;"></div>
<div style="left:174.00px;top:516.30px;width:1.00px;height:18.00px;background:#e9d4c8;"></div>
<div style="left:220.80px;top:516.30px;width:1.00px;height:18.00px;background:#e9d4c8;"></div>
<div style="left:264.00px;top:516.30px;width:1.00px;height:18.00px;background:#e9d4c8;"></div>
<div style="left:69.20px;top:516.80px;width:53.30px;height:18.00px;line-height:18.00px;text-align:right;color:#1c1cff;font-size:11px;padding-right:5px;">68.20</div>
<div style="left:122.50px;top:516.80px;width:52.00px;height:18.00px;line-height:18.00px;text-align:right;color:#000;font-size:11px;padding-right:5px;">16.65</div>
<div style="left:174.50px;top:516.80px;width:46.80px;height:18.00px;line-height:18.00px;text-align:right;color:#000;font-size:11px;padding-right:5px;">-95.51</div>
<div style="left:309.20px;top:516.30px;width:237.80px;height:18.00px;background:#dbede1;border-bottom:1px solid #c9d3e6;"></div>
<div style="left:362.00px;top:516.30px;width:1.00px;height:18.00px;background:#c9d3e6;"></div>
<div style="left:414.00px;top:516.30px;width:1.00px;height:18.00px;background:#c9d3e6;"></div>
<div style="left:460.80px;top:516.30px;width:1.00px;height:18.00px;background:#c9d3e6;"></div>
<div style="left:504.00px;top:516.30px;width:1.00px;height:18.00px;background:#c9d3e6;"></div>
<div style="left:309.20px;top:516.80px;width:53.30px;height:18.00px;line-height:18.00px;text-align:right;color:#ff0c18;font-size:11px;padding-right:5px;">78.10001</div>
<div style="left:362.50px;top:516.80px;width:52.00px;height:18.00px;line-height:18.00px;text-align:right;color:#000;font-size:11px;padding-right:5px;">18.05</div>
<div style="left:414.50px;top:516.80px;width:46.80px;height:18.00px;line-height:18.00px;text-align:right;color:#000;font-size:11px;padding-right:5px;">-77.20</div>
<div style="left:549.50px;top:516.30px;width:237.80px;height:18.00px;background:#dbede1;border-bottom:1px solid #c9d3e6;"></div>
<div style="left:602.30px;top:516.30px;width:1.00px;height:18.00px;background:#c9d3e6;"></div>
<div style="left:654.30px;top:516.30px;width:1.00px;height:18.00px;background:#c9d3e6;"></div>
<div style="left:701.10px;top:516.30px;width:1.00px;height:18.00px;background:#c9d3e6;"></div>
<div style="left:744.30px;top:516.30px;width:1.00px;height:18.00px;background:#c9d3e6;"></div>
<div style="left:549.50px;top:516.80px;width:53.30px;height:18.00px;line-height:18.00px;text-align:right;color:#1c1cff;font-size:11px;padding-right:5px;">89.45</div>
<div style="left:602.80px;top:516.80px;width:52.00px;height:18.00px;line-height:18.00px;text-align:right;color:#000;font-size:11px;padding-right:5px;">18.30</div>
<div style="left:654.80px;top:516.80px;width:46.80px;height:18.00px;line-height:18.00px;text-align:right;color:#000;font-size:11px;padding-right:5px;">-69.28</div>
<div style="left:17.00px;top:534.30px;width:49.70px;height:18.00px;background:#d4d4d4;border-bottom:1px solid #dcdcdc;"></div>
<div style="left:17.00px;top:534.80px;width:49.70px;height:18.00px;line-height:18.00px;text-align:center;color:#000;font-size:11px;font-weight:bold;">1540</div>
<div style="left:69.20px;top:534.30px;width:237.80px;height:18.00px;background:#f9c08f;border-bottom:1px solid #e9d4c8;"></div>
<div style="left:122.00px;top:534.30px;width:1.00px;height:18.00px;background:#e9d4c8;"></div>
<div style="left:174.00px;top:534.30px;width:1.00px;height:18.00px;background:#e9d4c8;"></div>
<div style="left:220.80px;top:534.30px;width:1.00px;height:18.00px;background:#e9d4c8;"></div>
<div style="left:264.00px;top:534.30px;width:1.00px;height:18.00px;background:#e9d4c8;"></div>
<div style="left:69.20px;top:534.80px;width:53.30px;height:18.00px;line-height:18.00px;text-align:right;color:#ff0c18;font-size:11px;padding-right:5px;">63.45</div>
<div style="left:122.50px;top:534.80px;width:52.00px;height:18.00px;line-height:18.00px;text-align:right;color:#000;font-size:11px;padding-right:5px;">16.67</div>
<div style="left:174.50px;top:534.80px;width:46.80px;height:18.00px;line-height:18.00px;text-align:right;color:#000;font-size:11px;padding-right:5px;">-94.18</div>
<div style="left:309.20px;top:534.30px;width:237.80px;height:18.00px;background:#dbede1;border-bottom:1px solid #c9d3e6;"></div>
<div style="left:362.00px;top:534.30px;width:1.00px;height:18.00px;background:#c9d3e6;"></div>
<div style="left:414.00px;top:534.30px;width:1.00px;height:18.00px;background:#c9d3e6;"></div>
<div style="left:460.80px;top:534.30px;width:1.00px;height:18.00px;background:#c9d3e6;"></div>
<div style="left:504.00px;top:534.30px;width:1.00px;height:18.00px;background:#c9d3e6;"></div>
<div style="left:309.20px;top:534.80px;width:53.30px;height:18.00px;line-height:18.00px;text-align:right;color:#ff0c18;font-size:11px;padding-right:5px;">74.55</div>
<div style="left:362.50px;top:534.80px;width:52.00px;height:18.00px;line-height:18.00px;text-align:right;color:#000;font-size:11px;padding-right:5px;">18.29</div>
<div style="left:414.50px;top:534.80px;width:46.80px;height:18.00px;line-height:18.00px;text-align:right;color:#000;font-size:11px;padding-right:5px;">-75.15</div>
<div style="left:549.50px;top:534.30px;width:237.80px;height:18.00px;background:#dbede1;border-bottom:1px solid #c9d3e6;"></div>
<div style="left:602.30px;top:534.30px;width:1.00px;height:18.00px;background:#c9d3e6;"></div>
<div style="left:654.30px;top:534.30px;width:1.00px;height:18.00px;background:#c9d3e6;"></div>
<div style="left:701.10px;top:534.30px;width:1.00px;height:18.00px;background:#c9d3e6;"></div>
<div style="left:744.30px;top:534.30px;width:1.00px;height:18.00px;background:#c9d3e6;"></div>
<div style="left:549.50px;top:534.80px;width:53.30px;height:18.00px;line-height:18.00px;text-align:right;color:#1c1cff;font-size:11px;padding-right:5px;">86.30</div>
<div style="left:602.80px;top:534.80px;width:52.00px;height:18.00px;line-height:18.00px;text-align:right;color:#000;font-size:11px;padding-right:5px;">18.48</div>
<div style="left:654.80px;top:534.80px;width:46.80px;height:18.00px;line-height:18.00px;text-align:right;color:#000;font-size:11px;padding-right:5px;">-67.68</div>
<div style="left:17.00px;top:552.30px;width:49.70px;height:18.00px;background:#d4d4d4;border-bottom:1px solid #dcdcdc;"></div>
<div style="left:17.00px;top:552.80px;width:49.70px;height:18.00px;line-height:18.00px;text-align:center;color:#000;font-size:11px;">1535</div>
<div style="left:69.20px;top:552.30px;width:237.80px;height:18.00px;background:#f9c08f;border-bottom:1px solid #e9d4c8;"></div>
<div style="left:122.00px;top:552.30px;width:1.00px;height:18.00px;background:#e9d4c8;"></div>
<div style="left:174.00px;top:552.30px;width:1.00px;height:18.00px;background:#e9d4c8;"></div>
<div style="left:220.80px;top:552.30px;width:1.00px;height:18.00px;background:#e9d4c8;"></div>
<div style="left:264.00px;top:552.30px;width:1.00px;height:18.00px;background:#e9d4c8;"></div>
<div style="left:69.20px;top:552.80px;width:53.30px;height:18.00px;line-height:18.00px;text-align:right;color:#1c1cff;font-size:11px;padding-right:5px;">59.10</div>
<div style="left:122.50px;top:552.80px;width:52.00px;height:18.00px;line-height:18.00px;text-align:right;color:#000;font-size:11px;padding-right:5px;">17.70</div>
<div style="left:174.50px;top:552.80px;width:46.80px;height:18.00px;line-height:18.00px;text-align:right;color:#000;font-size:11px;padding-right:5px;">-91.31</div>
<div style="left:309.20px;top:552.30px;width:237.80px;height:18.00px;background:#dbede1;border-bottom:1px solid #c9d3e6;"></div>
<div style="left:362.00px;top:552.30px;width:1.00px;height:18.00px;background:#c9d3e6;"></div>
<div style="left:414.00px;top:552.30px;width:1.00px;height:18.00px;background:#c9d3e6;"></div>
<div style="left:460.80px;top:552.30px;width:1.00px;height:18.00px;background:#c9d3e6;"></div>
<div style="left:504.00px;top:552.30px;width:1.00px;height:18.00px;background:#c9d3e6;"></div>
<div style="left:309.20px;top:552.80px;width:53.30px;height:18.00px;line-height:18.00px;text-align:right;color:#1c1cff;font-size:11px;padding-right:5px;">71.30</div>
<div style="left:362.50px;top:552.80px;width:52.00px;height:18.00px;line-height:18.00px;text-align:right;color:#000;font-size:11px;padding-right:5px;">18.64</div>
<div style="left:414.50px;top:552.80px;width:46.80px;height:18.00px;line-height:18.00px;text-align:right;color:#000;font-size:11px;padding-right:5px;">-72.93</div>
<div style="left:549.50px;top:552.30px;width:237.80px;height:18.00px;background:#dbede1;border-bottom:1px solid #c9d3e6;"></div>
<div style="left:602.30px;top:552.30px;width:1.00px;height:18.00px;background:#c9d3e6;"></div>
<div style="left:654.30px;top:552.30px;width:1.00px;height:18.00px;background:#c9d3e6;"></div>
<div style="left:701.10px;top:552.30px;width:1.00px;height:18.00px;background:#c9d3e6;"></div>
<div style="left:744.30px;top:552.30px;width:1.00px;height:18.00px;background:#c9d3e6;"></div>
<div style="left:549.50px;top:552.80px;width:53.30px;height:18.00px;line-height:18.00px;text-align:right;color:#ff0c18;font-size:11px;padding-right:5px;">83.30</div>
<div style="left:602.80px;top:552.80px;width:52.00px;height:18.00px;line-height:18.00px;text-align:right;color:#000;font-size:11px;padding-right:5px;">18.68</div>
<div style="left:654.80px;top:552.80px;width:46.80px;height:18.00px;line-height:18.00px;text-align:right;color:#000;font-size:11px;padding-right:5px;">-66.04</div>
<div style="left:17.00px;top:570.30px;width:49.70px;height:18.00px;background:#d4d4d4;border-bottom:1px solid #dcdcdc;"></div>
<div style="left:17.00px;top:570.80px;width:49.70px;height:18.00px;line-height:18.00px;text-align:center;color:#000;font-size:11px;">1530</div>
<div style="left:69.20px;top:570.30px;width:237.80px;height:18.00px;background:#dbede1;border-bottom:1px solid #c9d3e6;"></div>
<div style="left:122.00px;top:570.30px;width:1.00px;height:18.00px;background:#c9d3e6;"></div>
<div style="left:174.00px;top:570.30px;width:1.00px;height:18.00px;background:#c9d3e6;"></div>
<div style="left:220.80px;top:570.30px;width:1.00px;height:18.00px;background:#c9d3e6;"></div>
<div style="left:264.00px;top:570.30px;width:1.00px;height:18.00px;background:#c9d3e6;"></div>
<div style="left:69.20px;top:570.80px;width:53.30px;height:18.00px;line-height:18.00px;text-align:right;color:#ff0c18;font-size:11px;padding-right:5px;">54.70</div>
<div style="left:122.50px;top:570.80px;width:52.00px;height:18.00px;line-height:18.00px;text-align:right;color:#000;font-size:11px;padding-right:5px;">17.98</div>
<div style="left:174.50px;top:570.80px;width:46.80px;height:18.00px;line-height:18.00px;text-align:right;color:#000;font-size:11px;padding-right:5px;">-88.93</div>
<div style="left:309.20px;top:570.30px;width:237.80px;height:18.00px;background:#dbede1;border-bottom:1px solid #c9d3e6;"></div>
<div style="left:362.00px;top:570.30px;width:1.00px;height:18.00px;background:#c9d3e6;"></div>
<div style="left:414.00px;top:570.30px;width:1.00px;height:18.00px;background:#c9d3e6;"></div>
<div style="left:460.80px;top:570.30px;width:1.00px;height:18.00px;background:#c9d3e6;"></div>
<div style="left:504.00px;top:570.30px;width:1.00px;height:18.00px;background:#c9d3e6;"></div>
<div style="left:309.20px;top:570.80px;width:53.30px;height:18.00px;line-height:18.00px;text-align:right;color:#1c1cff;font-size:11px;padding-right:5px;">67.85</div>
<div style="left:362.50px;top:570.80px;width:52.00px;height:18.00px;line-height:18.00px;text-align:right;color:#000;font-size:11px;padding-right:5px;">18.79</div>
<div style="left:414.50px;top:570.80px;width:46.80px;height:18.00px;line-height:18.00px;text-align:right;color:#000;font-size:11px;padding-right:5px;">-70.91</div>
<div style="left:549.50px;top:570.30px;width:237.80px;height:18.00px;background:#dbede1;border-bottom:1px solid #c9d3e6;"></div>
<div style="left:602.30px;top:570.30px;width:1.00px;height:18.00px;background:#c9d3e6;"></div>
<div style="left:654.30px;top:570.30px;width:1.00px;height:18.00px;background:#c9d3e6;"></div>
<div style="left:701.10px;top:570.30px;width:1.00px;height:18.00px;background:#c9d3e6;"></div>
<div style="left:744.30px;top:570.30px;width:1.00px;height:18.00px;background:#c9d3e6;"></div>
<div style="left:549.50px;top:570.80px;width:53.30px;height:18.00px;line-height:18.00px;text-align:right;color:#ff0c18;font-size:11px;padding-right:5px;">80.40</div>
<div style="left:602.80px;top:570.80px;width:52.00px;height:18.00px;line-height:18.00px;text-align:right;color:#000;font-size:11px;padding-right:5px;">18.89</div>
<div style="left:654.80px;top:570.80px;width:46.80px;height:18.00px;line-height:18.00px;text-align:right;color:#000;font-size:11px;padding-right:5px;">-64.40</div>
<div style="left:17.00px;top:588.30px;width:49.70px;height:18.00px;background:#d4d4d4;border-bottom:1px solid #dcdcdc;"></div>
<div style="left:17.00px;top:588.80px;width:49.70px;height:18.00px;line-height:18.00px;text-align:center;color:#000;font-size:11px;">1525</div>
<div style="left:69.20px;top:588.30px;width:237.80px;height:18.00px;background:#dbede1;border-bottom:1px solid #c9d3e6;"></div>
<div style="left:122.00px;top:588.30px;width:1.00px;height:18.00px;background:#c9d3e6;"></div>
<div style="left:174.00px;top:588.30px;width:1.00px;height:18.00px;background:#c9d3e6;"></div>
<div style="left:220.80px;top:588.30px;width:1.00px;height:18.00px;background:#c9d3e6;"></div>
<div style="left:264.00px;top:588.30px;width:1.00px;height:18.00px;background:#c9d3e6;"></div>
<div style="left:69.20px;top:588.80px;width:53.30px;height:18.00px;line-height:18.00px;text-align:right;color:#000;font-size:11px;padding-right:5px;">50.50</div>
<div style="left:122.50px;top:588.80px;width:52.00px;height:18.00px;line-height:18.00px;text-align:right;color:#000;font-size:11px;padding-right:5px;">18.41</div>
<div style="left:174.50px;top:588.80px;width:46.80px;height:18.00px;line-height:18.00px;text-align:right;color:#000;font-size:11px;padding-right:5px;">-86.01</div>
<div style="left:309.20px;top:588.30px;width:237.80px;height:18.00px;background:#dbede1;border-bottom:1px solid #c9d3e6;"></div>
<div style="left:362.00px;top:588.30px;width:1.00px;height:18.00px;background:#c9d3e6;"></div>
<div style="left:414.00px;top:588.30px;width:1.00px;height:18.00px;background:#c9d3e6;"></div>
<div style="left:460.80px;top:588.30px;width:1.00px;height:18.00px;background:#c9d3e6;"></div>
<div style="left:504.00px;top:588.30px;width:1.00px;height:18.00px;background:#c9d3e6;"></div>
<div style="left:309.20px;top:588.80px;width:53.30px;height:18.00px;line-height:18.00px;text-align:right;color:#1c1cff;font-size:11px;padding-right:5px;">64.75</div>
<div style="left:362.50px;top:588.80px;width:52.00px;height:18.00px;line-height:18.00px;text-align:right;color:#000;font-size:11px;padding-right:5px;">19.09</div>
<div style="left:414.50px;top:588.80px;width:46.80px;height:18.00px;line-height:18.00px;text-align:right;color:#000;font-size:11px;padding-right:5px;">-68.69</div>
<div style="left:549.50px;top:588.30px;width:237.80px;height:18.00px;background:#dbede1;border-bottom:1px solid #c9d3e6;"></div>
<div style="left:602.30px;top:588.30px;width:1.00px;height:18.00px;background:#c9d3e6;"></div>
<div style="left:654.30px;top:588.30px;width:1.00px;height:18.00px;background:#c9d3e6;"></div>
<div style="left:701.10px;top:588.30px;width:1.00px;height:18.00px;background:#c9d3e6;"></div>
<div style="left:744.30px;top:588.30px;width:1.00px;height:18.00px;background:#c9d3e6;"></div>
<div style="left:549.50px;top:588.80px;width:53.30px;height:18.00px;line-height:18.00px;text-align:right;color:#ff0c18;font-size:11px;padding-right:5px;">77.50</div>
<div style="left:602.80px;top:588.80px;width:52.00px;height:18.00px;line-height:18.00px;text-align:right;color:#000;font-size:11px;padding-right:5px;">19.07</div>
<div style="left:654.80px;top:588.80px;width:46.80px;height:18.00px;line-height:18.00px;text-align:right;color:#000;font-size:11px;padding-right:5px;">-62.78</div>
<div style="left:17.00px;top:606.30px;width:49.70px;height:18.00px;background:#d4d4d4;border-bottom:1px solid #dcdcdc;"></div>
<div style="left:17.00px;top:606.80px;width:49.70px;height:18.00px;line-height:18.00px;text-align:center;color:#000;font-size:11px;">1520</div>
<div style="left:69.20px;top:606.30px;width:237.80px;height:18.00px;background:#dbede1;border-bottom:1px solid #c9d3e6;"></div>
<div style="left:122.00px;top:606.30px;width:1.00px;height:18.00px;background:#c9d3e6;"></div>
<div style="left:174.00px;top:606.30px;width:1.00px;height:18.00px;background:#c9d3e6;"></div>
<div style="left:220.80px;top:606.30px;width:1.00px;height:18.00px;background:#c9d3e6;"></div>
<div style="left:264.00px;top:606.30px;width:1.00px;height:18.00px;background:#c9d3e6;"></div>
<div style="left:69.20px;top:606.80px;width:53.30px;height:18.00px;line-height:18.00px;text-align:right;color:#ff0c18;font-size:11px;padding-right:5px;">46.45</div>
<div style="left:122.50px;top:606.80px;width:52.00px;height:18.00px;line-height:18.00px;text-align:right;color:#000;font-size:11px;padding-right:5px;">18.79</div>
<div style="left:174.50px;top:606.80px;width:46.80px;height:18.00px;line-height:18.00px;text-align:right;color:#000;font-size:11px;padding-right:5px;">-82.80</div>
<div style="left:309.20px;top:606.30px;width:237.80px;height:18.00px;background:#dbede1;border-bottom:1px solid #c9d3e6;"></div>
<div style="left:362.00px;top:606.30px;width:1.00px;height:18.00px;background:#c9d3e6;"></div>
<div style="left:414.00px;top:606.30px;width:1.00px;height:18.00px;background:#c9d3e6;"></div>
<div style="left:460.80px;top:606.30px;width:1.00px;height:18.00px;background:#c9d3e6;"></div>
<div style="left:504.00px;top:606.30px;width:1.00px;height:18.00px;background:#c9d3e6;"></div>
<div style="left:309.20px;top:606.80px;width:53.30px;height:18.00px;line-height:18.00px;text-align:right;color:#1c1cff;font-size:11px;padding-right:5px;">61.60</div>
<div style="left:362.50px;top:606.80px;width:52.00px;height:18.00px;line-height:18.00px;text-align:right;color:#000;font-size:11px;padding-right:5px;">19.29</div>
<div style="left:414.50px;top:606.80px;width:46.80px;height:18.00px;line-height:18.00px;text-align:right;color:#000;font-size:11px;padding-right:5px;">-66.57</div>
<div style="left:549.50px;top:606.30px;width:237.80px;height:18.00px;background:#dbede1;border-bottom:1px solid #c9d3e6;"></div>
<div style="left:602.30px;top:606.30px;width:1.00px;height:18.00px;background:#c9d3e6;"></div>
<div style="left:654.30px;top:606.30px;width:1.00px;height:18.00px;background:#c9d3e6;"></div>
<div style="left:701.10px;top:606.30px;width:1.00px;height:18.00px;background:#c9d3e6;"></div>
<div style="left:744.30px;top:606.30px;width:1.00px;height:18.00px;background:#c9d3e6;"></div>
<div style="left:549.50px;top:606.80px;width:53.30px;height:18.00px;line-height:18.00px;text-align:right;color:#ff0c18;font-size:11px;padding-right:5px;">75.00</div>
<div style="left:602.80px;top:606.80px;width:52.00px;height:18.00px;line-height:18.00px;text-align:right;color:#000;font-size:11px;padding-right:5px;">19.37</div>
<div style="left:654.80px;top:606.80px;width:46.80px;height:18.00px;line-height:18.00px;text-align:right;color:#000;font-size:11px;padding-right:5px;">-61.09</div>
<div style="left:17.00px;top:624.30px;width:49.70px;height:18.00px;background:#d4d4d4;border-bottom:1px solid #dcdcdc;"></div>
<div style="left:17.00px;top:624.80px;width:49.70px;height:18.00px;line-height:18.00px;text-align:center;color:#000;font-size:11px;">1515</div>
<div style="left:69.20px;top:624.30px;width:237.80px;height:18.00px;background:#dbede1;border-bottom:1px solid #c9d3e6;"></div>
<div style="left:122.00px;top:624.30px;width:1.00px;height:18.00px;background:#c9d3e6;"></div>
<div style="left:174.00px;top:624.30px;width:1.00px;height:18.00px;background:#c9d3e6;"></div>
<div style="left:220.80px;top:624.30px;width:1.00px;height:18.00px;background:#c9d3e6;"></div>
<div style="left:264.00px;top:624.30px;width:1.00px;height:18.00px;background:#c9d3e6;"></div>
<div style="left:69.20px;top:624.80px;width:53.30px;height:18.00px;line-height:18.00px;text-align:right;color:#ff0c18;font-size:11px;padding-right:5px;">42.70</div>
<div style="left:122.50px;top:624.80px;width:52.00px;height:18.00px;line-height:18.00px;text-align:right;color:#000;font-size:11px;padding-right:5px;">19.32</div>
<div style="left:174.50px;top:624.80px;width:46.80px;height:18.00px;line-height:18.00px;text-align:right;color:#000;font-size:11px;padding-right:5px;">-79.14</div>
<div style="left:309.20px;top:624.30px;width:237.80px;height:18.00px;background:#dbede1;border-bottom:1px solid #c9d3e6;"></div>
<div style="left:362.00px;top:624.30px;width:1.00px;height:18.00px;background:#c9d3e6;"></div>
<div style="left:414.00px;top:624.30px;width:1.00px;height:18.00px;background:#c9d3e6;"></div>
<div style="left:460.80px;top:624.30px;width:1.00px;height:18.00px;background:#c9d3e6;"></div>
<div style="left:504.00px;top:624.30px;width:1.00px;height:18.00px;background:#c9d3e6;"></div>
<div style="left:309.20px;top:624.80px;width:53.30px;height:18.00px;line-height:18.00px;text-align:right;color:#ff0c18;font-size:11px;padding-right:5px;">58.70</div>
<div style="left:362.50px;top:624.80px;width:52.00px;height:18.00px;line-height:18.00px;text-align:right;color:#000;font-size:11px;padding-right:5px;">19.57</div>
<div style="left:414.50px;top:624.80px;width:46.80px;height:18.00px;line-height:18.00px;text-align:right;color:#000;font-size:11px;padding-right:5px;">-64.36</div>
<div style="left:549.50px;top:624.30px;width:237.80px;height:18.00px;background:#dbede1;border-bottom:1px solid #c9d3e6;"></div>
<div style="left:602.30px;top:624.30px;width:1.00px;height:18.00px;background:#c9d3e6;"></div>
<div style="left:654.30px;top:624.30px;width:1.00px;height:18.00px;background:#c9d3e6;"></div>
<div style="left:701.10px;top:624.30px;width:1.00px;height:18.00px;background:#c9d3e6;"></div>
<div style="left:744.30px;top:624.30px;width:1.00px;height:18.00px;background:#c9d3e6;"></div>
<div style="left:549.50px;top:624.80px;width:53.30px;height:18.00px;line-height:18.00px;text-align:right;color:#ff0c18;font-size:11px;padding-right:5px;">72.35001</div>
<div style="left:602.80px;top:624.80px;width:52.00px;height:18.00px;line-height:18.00px;text-align:right;color:#000;font-size:11px;padding-right:5px;">19.58</div>
<div style="left:654.80px;top:624.80px;width:46.80px;height:18.00px;line-height:18.00px;text-align:right;color:#000;font-size:11px;padding-right:5px;">-59.48</div>
<div style="left:17.00px;top:642.30px;width:49.70px;height:18.00px;background:#d4d4d4;border-bottom:1px solid #dcdcdc;"></div>
<div style="left:17.00px;top:642.80px;width:49.70px;height:18.00px;line-height:18.00px;text-align:center;color:#000;font-size:11px;">1510</div>
<div style="left:69.20px;top:642.30px;width:237.80px;height:18.00px;background:#dbede1;border-bottom:1px solid #c9d3e6;"></div>
<div style="left:122.00px;top:642.30px;width:1.00px;height:18.00px;background:#c9d3e6;"></div>
<div style="left:174.00px;top:642.30px;width:1.00px;height:18.00px;background:#c9d3e6;"></div>
<div style="left:220.80px;top:642.30px;width:1.00px;height:18.00px;background:#c9d3e6;"></div>
<div style="left:264.00px;top:642.30px;width:1.00px;height:18.00px;background:#c9d3e6;"></div>
<div style="left:69.20px;top:642.80px;width:53.30px;height:18.00px;line-height:18.00px;text-align:right;color:#1c1cff;font-size:11px;padding-right:5px;">39.00</div>
<div style="left:122.50px;top:642.80px;width:52.00px;height:18.00px;line-height:18.00px;text-align:right;color:#000;font-size:11px;padding-right:5px;">19.62</div>
<div style="left:174.50px;top:642.80px;width:46.80px;height:18.00px;line-height:18.00px;text-align:right;color:#000;font-size:11px;padding-right:5px;">-75.52</div>
<div style="left:309.20px;top:642.30px;width:237.80px;height:18.00px;background:#dbede1;border-bottom:1px solid #c9d3e6;"></div>
<div style="left:362.00px;top:642.30px;width:1.00px;height:18.00px;background:#c9d3e6;"></div>
<div style="left:414.00px;top:642.30px;width:1.00px;height:18.00px;background:#c9d3e6;"></div>
<div style="left:460.80px;top:642.30px;width:1.00px;height:18.00px;background:#c9d3e6;"></div>
<div style="left:504.00px;top:642.30px;width:1.00px;height:18.00px;background:#c9d3e6;"></div>
<div style="left:309.20px;top:642.80px;width:53.30px;height:18.00px;line-height:18.00px;text-align:right;color:#ff0c18;font-size:11px;padding-right:5px;">56.00</div>
<div style="left:362.50px;top:642.80px;width:52.00px;height:18.00px;line-height:18.00px;text-align:right;color:#000;font-size:11px;padding-right:5px;">19.90</div>
<div style="left:414.50px;top:642.80px;width:46.80px;height:18.00px;line-height:18.00px;text-align:right;color:#000;font-size:11px;padding-right:5px;">-62.13</div>
<div style="left:549.50px;top:642.30px;width:237.80px;height:18.00px;background:#dbede1;border-bottom:1px solid #c9d3e6;"></div>
<div style="left:602.30px;top:642.30px;width:1.00px;height:18.00px;background:#c9d3e6;"></div>
<div style="left:654.30px;top:642.30px;width:1.00px;height:18.00px;background:#c9d3e6;"></div>
<div style="left:701.10px;top:642.30px;width:1.00px;height:18.00px;background:#c9d3e6;"></div>
<div style="left:744.30px;top:642.30px;width:1.00px;height:18.00px;background:#c9d3e6;"></div>
<div style="left:549.50px;top:642.80px;width:53.30px;height:18.00px;line-height:18.00px;text-align:right;color:#ff0c18;font-size:11px;padding-right:5px;">69.75</div>
<div style="left:602.80px;top:642.80px;width:52.00px;height:18.00px;line-height:18.00px;text-align:right;color:#000;font-size:11px;padding-right:5px;">19.78</div>
<div style="left:654.80px;top:642.80px;width:46.80px;height:18.00px;line-height:18.00px;text-align:right;color:#000;font-size:11px;padding-right:5px;">-57.89</div>
<div style="left:17.00px;top:660.30px;width:49.70px;height:18.00px;background:#d4d4d4;border-bottom:1px solid #dcdcdc;"></div>
<div style="left:17.00px;top:660.80px;width:49.70px;height:18.00px;line-height:18.00px;text-align:center;color:#000;font-size:11px;">1505</div>
<div style="left:69.20px;top:660.30px;width:237.80px;height:18.00px;background:#dbede1;border-bottom:1px solid #c9d3e6;"></div>
<div style="left:122.00px;top:660.30px;width:1.00px;height:18.00px;background:#c9d3e6;"></div>
<div style="left:174.00px;top:660.30px;width:1.00px;height:18.00px;background:#c9d3e6;"></div>
<div style="left:220.80px;top:660.30px;width:1.00px;height:18.00px;background:#c9d3e6;"></div>
<div style="left:264.00px;top:660.30px;width:1.00px;height:18.00px;background:#c9d3e6;"></div>
<div style="left:69.20px;top:660.80px;width:53.30px;height:18.00px;line-height:18.00px;text-align:right;color:#ff0c18;font-size:11px;padding-right:5px;">35.65</div>
<div style="left:122.50px;top:660.80px;width:52.00px;height:18.00px;line-height:18.00px;text-align:right;color:#000;font-size:11px;padding-right:5px;">20.13</div>
<div style="left:174.50px;top:660.80px;width:46.80px;height:18.00px;line-height:18.00px;text-align:right;color:#000;font-size:11px;padding-right:5px;">-71.49</div>
<div style="left:309.20px;top:660.30px;width:237.80px;height:18.00px;background:#dbede1;border-bottom:1px solid #c9d3e6;"></div>
<div style="left:362.00px;top:660.30px;width:1.00px;height:18.00px;background:#c9d3e6;"></div>
<div style="left:414.00px;top:660.30px;width:1.00px;height:18.00px;background:#c9d3e6;"></div>
<div style="left:460.80px;top:660.30px;width:1.00px;height:18.00px;background:#c9d3e6;"></div>
<div style="left:504.00px;top:660.30px;width:1.00px;height:18.00px;background:#c9d3e6;"></div>
<div style="left:309.20px;top:660.80px;width:53.30px;height:18.00px;line-height:18.00px;text-align:right;color:#ff0c18;font-size:11px;padding-right:5px;">53.30</div>
<div style="left:362.50px;top:660.80px;width:52.00px;height:18.00px;line-height:18.00px;text-align:right;color:#000;font-size:11px;padding-right:5px;">20.16</div>
<div style="left:414.50px;top:660.80px;width:46.80px;height:18.00px;line-height:18.00px;text-align:right;color:#000;font-size:11px;padding-right:5px;">-59.96</div>
<div style="left:549.50px;top:660.30px;width:237.80px;height:18.00px;background:#dbede1;border-bottom:1px solid #c9d3e6;"></div>
<div style="left:602.30px;top:660.30px;width:1.00px;height:18.00px;background:#c9d3e6;"></div>
<div style="left:654.30px;top:660.30px;width:1.00px;height:18.00px;background:#c9d3e6;"></div>
<div style="left:701.10px;top:660.30px;width:1.00px;height:18.00px;background:#c9d3e6;"></div>
<div style="left:744.30px;top:660.30px;width:1.00px;height:18.00px;background:#c9d3e6;"></div>
<div style="left:549.50px;top:660.80px;width:53.30px;height:18.00px;line-height:18.00px;text-align:right;color:#ff0c18;font-size:11px;padding-right:5px;">67.00</div>
<div style="left:602.80px;top:660.80px;width:52.00px;height:18.00px;line-height:18.00px;text-align:right;color:#000;font-size:11px;padding-right:5px;">19.89</div>
<div style="left:654.80px;top:660.80px;width:46.80px;height:18.00px;line-height:18.00px;text-align:right;color:#000;font-size:11px;padding-right:5px;">-56.35</div>
<div style="left:17.00px;top:678.30px;width:49.70px;height:18.00px;background:#d4d4d4;border-bottom:1px solid #dcdcdc;"></div>
<div style="left:17.00px;top:678.80px;width:49.70px;height:18.00px;line-height:18.00px;text-align:center;color:#000;font-size:11px;">1500</div>
<div style="left:69.20px;top:678.30px;width:237.80px;height:18.00px;background:#dbede1;border-bottom:1px solid #c9d3e6;"></div>
<div style="left:122.00px;top:678.30px;width:1.00px;height:18.00px;background:#c9d3e6;"></div>
<div style="left:174.00px;top:678.30px;width:1.00px;height:18.00px;background:#c9d3e6;"></div>
<div style="left:220.80px;top:678.30px;width:1.00px;height:18.00px;background:#c9d3e6;"></div>
<div style="left:264.00px;top:678.30px;width:1.00px;height:18.00px;background:#c9d3e6;"></div>
<div style="left:69.20px;top:678.80px;width:53.30px;height:18.00px;line-height:18.00px;text-align:right;color:#ff0c18;font-size:11px;padding-right:5px;">32.45</div>
<div style="left:122.50px;top:678.80px;width:52.00px;height:18.00px;line-height:18.00px;text-align:right;color:#000;font-size:11px;padding-right:5px;">20.53</div>
<div style="left:174.50px;top:678.80px;width:46.80px;height:18.00px;line-height:18.00px;text-align:right;color:#000;font-size:11px;padding-right:5px;">-67.47</div>
<div style="left:309.20px;top:678.30px;width:237.80px;height:18.00px;background:#dbede1;border-bottom:1px solid #c9d3e6;"></div>
<div style="left:362.00px;top:678.30px;width:1.00px;height:18.00px;background:#c9d3e6;"></div>
<div style="left:414.00px;top:678.30px;width:1.00px;height:18.00px;background:#c9d3e6;"></div>
<div style="left:460.80px;top:678.30px;width:1.00px;height:18.00px;background:#c9d3e6;"></div>
<div style="left:504.00px;top:678.30px;width:1.00px;height:18.00px;background:#c9d3e6;"></div>
<div style="left:309.20px;top:678.80px;width:53.30px;height:18.00px;line-height:18.00px;text-align:right;color:#ff0c18;font-size:11px;padding-right:5px;">50.65</div>
<div style="left:362.50px;top:678.80px;width:52.00px;height:18.00px;line-height:18.00px;text-align:right;color:#000;font-size:11px;padding-right:5px;">20.39</div>
<div style="left:414.50px;top:678.80px;width:46.80px;height:18.00px;line-height:18.00px;text-align:right;color:#000;font-size:11px;padding-right:5px;">-57.83</div>
<div style="left:549.50px;top:678.30px;width:237.80px;height:18.00px;background:#dbede1;border-bottom:1px solid #c9d3e6;"></div>
<div style="left:602.30px;top:678.30px;width:1.00px;height:18.00px;background:#c9d3e6;"></div>
<div style="left:654.30px;top:678.30px;width:1.00px;height:18.00px;background:#c9d3e6;"></div>
<div style="left:701.10px;top:678.30px;width:1.00px;height:18.00px;background:#c9d3e6;"></div>
<div style="left:744.30px;top:678.30px;width:1.00px;height:18.00px;background:#c9d3e6;"></div>
<div style="left:549.50px;top:678.80px;width:53.30px;height:18.00px;line-height:18.00px;text-align:right;color:#ff0c18;font-size:11px;padding-right:5px;">64.60001</div>
<div style="left:602.80px;top:678.80px;width:52.00px;height:18.00px;line-height:18.00px;text-align:right;color:#000;font-size:11px;padding-right:5px;">20.10</div>
<div style="left:654.80px;top:678.80px;width:46.80px;height:18.00px;line-height:18.00px;text-align:right;color:#000;font-size:11px;padding-right:5px;">-54.77</div>
<div style="left:17.00px;top:696.30px;width:49.70px;height:18.00px;background:#d4d4d4;border-bottom:1px solid #dcdcdc;"></div>
<div style="left:17.00px;top:696.80px;width:49.70px;height:18.00px;line-height:18.00px;text-align:center;color:#000;font-size:11px;">1495</div>
<div style="left:69.20px;top:696.30px;width:237.80px;height:18.00px;background:#dbede1;border-bottom:1px solid #c9d3e6;"></div>
<div style="left:122.00px;top:696.30px;width:1.00px;height:18.00px;background:#c9d3e6;"></div>
<div style="left:174.00px;top:696.30px;width:1.00px;height:18.00px;background:#c9d3e6;"></div>
<div style="left:220.80px;top:696.30px;width:1.00px;height:18.00px;background:#c9d3e6;"></div>
<div style="left:264.00px;top:696.30px;width:1.00px;height:18.00px;background:#c9d3e6;"></div>
<div style="left:69.20px;top:696.80px;width:53.30px;height:18.00px;line-height:18.00px;text-align:right;color:#ff0c18;font-size:11px;padding-right:5px;">29.55</div>
<div style="left:122.50px;top:696.80px;width:52.00px;height:18.00px;line-height:18.00px;text-align:right;color:#000;font-size:11px;padding-right:5px;">21.03</div>
<div style="left:174.50px;top:696.80px;width:46.80px;height:18.00px;line-height:18.00px;text-align:right;color:#000;font-size:11px;padding-right:5px;">-63.31</div>
<div style="left:309.20px;top:696.30px;width:237.80px;height:18.00px;background:#dbede1;border-bottom:1px solid #c9d3e6;"></div>
<div style="left:362.00px;top:696.30px;width:1.00px;height:18.00px;background:#c9d3e6;"></div>
<div style="left:414.00px;top:696.30px;width:1.00px;height:18.00px;background:#c9d3e6;"></div>
<div style="left:460.80px;top:696.30px;width:1.00px;height:18.00px;background:#c9d3e6;"></div>
<div style="left:504.00px;top:696.30px;width:1.00px;height:18.00px;background:#c9d3e6;"></div>
<div style="left:309.20px;top:696.80px;width:53.30px;height:18.00px;line-height:18.00px;text-align:right;color:#ff0c18;font-size:11px;padding-right:5px;">48.15</div>
<div style="left:362.50px;top:696.80px;width:52.00px;height:18.00px;line-height:18.00px;text-align:right;color:#000;font-size:11px;padding-right:5px;">20.64</div>
<div style="left:414.50px;top:696.80px;width:46.80px;height:18.00px;line-height:18.00px;text-align:right;color:#000;font-size:11px;padding-right:5px;">-55.70</div>
<div style="left:549.50px;top:696.30px;width:237.80px;height:18.00px;background:#dbede1;border-bottom:1px solid #c9d3e6;"></div>
<div style="left:602.30px;top:696.30px;width:1.00px;height:18.00px;background:#c9d3e6;"></div>
<div style="left:654.30px;top:696.30px;width:1.00px;height:18.00px;background:#c9d3e6;"></div>
<div style="left:701.10px;top:696.30px;width:1.00px;height:18.00px;background:#c9d3e6;"></div>
<div style="left:744.30px;top:696.30px;width:1.00px;height:18.00px;background:#c9d3e6;"></div>
<div style="left:549.50px;top:696.80px;width:53.30px;height:18.00px;line-height:18.00px;text-align:right;color:#000;font-size:11px;padding-right:5px;">62.45</div>
<div style="left:602.80px;top:696.80px;width:52.00px;height:18.00px;line-height:18.00px;text-align:right;color:#000;font-size:11px;padding-right:5px;">20.37</div>
<div style="left:654.80px;top:696.80px;width:46.80px;height:18.00px;line-height:18.00px;text-align:right;color:#000;font-size:11px;padding-right:5px;">-53.19</div>
<div style="left:17.00px;top:714.30px;width:49.70px;height:18.00px;background:#d4d4d4;border-bottom:1px solid #dcdcdc;"></div>
<div style="left:17.00px;top:714.80px;width:49.70px;height:18.00px;line-height:18.00px;text-align:center;color:#000;font-size:11px;">1490</div>
<div style="left:69.20px;top:714.30px;width:237.80px;height:18.00px;background:#dbede1;border-bottom:1px solid #c9d3e6;"></div>
<div style="left:122.00px;top:714.30px;width:1.00px;height:18.00px;background:#c9d3e6;"></div>
<div style="left:174.00px;top:714.30px;width:1.00px;height:18.00px;background:#c9d3e6;"></div>
<div style="left:220.80px;top:714.30px;width:1.00px;height:18.00px;background:#c9d3e6;"></div>
<div style="left:264.00px;top:714.30px;width:1.00px;height:18.00px;background:#c9d3e6;"></div>
<div style="left:69.20px;top:714.80px;width:53.30px;height:18.00px;line-height:18.00px;text-align:right;color:#ff0c18;font-size:11px;padding-right:5px;">26.75</div>
<div style="left:122.50px;top:714.80px;width:52.00px;height:18.00px;line-height:18.00px;text-align:right;color:#000;font-size:11px;padding-right:5px;">21.40</div>
<div style="left:174.50px;top:714.80px;width:46.80px;height:18.00px;line-height:18.00px;text-align:right;color:#000;font-size:11px;padding-right:5px;">-59.25</div>
<div style="left:309.20px;top:714.30px;width:237.80px;height:18.00px;background:#dbede1;border-bottom:1px solid #c9d3e6;"></div>
<div style="left:362.00px;top:714.30px;width:1.00px;height:18.00px;background:#c9d3e6;"></div>
<div style="left:414.00px;top:714.30px;width:1.00px;height:18.00px;background:#c9d3e6;"></div>
<div style="left:460.80px;top:714.30px;width:1.00px;height:18.00px;background:#c9d3e6;"></div>
<div style="left:504.00px;top:714.30px;width:1.00px;height:18.00px;background:#c9d3e6;"></div>
<div style="left:309.20px;top:714.80px;width:53.30px;height:18.00px;line-height:18.00px;text-align:right;color:#ff0c18;font-size:11px;padding-right:5px;">45.80</div>
<div style="left:362.50px;top:714.80px;width:52.00px;height:18.00px;line-height:18.00px;text-align:right;color:#000;font-size:11px;padding-right:5px;">20.92</div>
<div style="left:414.50px;top:714.80px;width:46.80px;height:18.00px;line-height:18.00px;text-align:right;color:#000;font-size:11px;padding-right:5px;">-53.60</div>
<div style="left:549.50px;top:714.30px;width:237.80px;height:18.00px;background:#dbede1;border-bottom:1px solid #c9d3e6;"></div>
<div style="left:602.30px;top:714.30px;width:1.00px;height:18.00px;background:#c9d3e6;"></div>
<div style="left:654.30px;top:714.30px;width:1.00px;height:18.00px;background:#c9d3e6;"></div>
<div style="left:701.10px;top:714.30px;width:1.00px;height:18.00px;background:#c9d3e6;"></div>
<div style="left:744.30px;top:714.30px;width:1.00px;height:18.00px;background:#c9d3e6;"></div>
<div style="left:549.50px;top:714.80px;width:53.30px;height:18.00px;line-height:18.00px;text-align:right;color:#ff0c18;font-size:11px;padding-right:5px;">60.00</div>
<div style="left:602.80px;top:714.80px;width:52.00px;height:18.00px;line-height:18.00px;text-align:right;color:#000;font-size:11px;padding-right:5px;">20.51</div>
<div style="left:654.80px;top:714.80px;width:46.80px;height:18.00px;line-height:18.00px;text-align:right;color:#000;font-size:11px;padding-right:5px;">-51.69</div>
<div style="left:17.00px;top:732.30px;width:49.70px;height:18.00px;background:#d4d4d4;border-bottom:1px solid #dcdcdc;"></div>
<div style="left:17.00px;top:732.80px;width:49.70px;height:18.00px;line-height:18.00px;text-align:center;color:#000;font-size:11px;">1485</div>
<div style="left:69.20px;top:732.30px;width:237.80px;height:18.00px;background:#dbede1;border-bottom:1px solid #c9d3e6;"></div>
<div style="left:122.00px;top:732.30px;width:1.00px;height:18.00px;background:#c9d3e6;"></div>
<div style="left:174.00px;top:732.30px;width:1.00px;height:18.00px;background:#c9d3e6;"></div>
<div style="left:220.80px;top:732.30px;width:1.00px;height:18.00px;background:#c9d3e6;"></div>
<div style="left:264.00px;top:732.30px;width:1.00px;height:18.00px;background:#c9d3e6;"></div>
<div style="left:69.20px;top:732.80px;width:53.30px;height:18.00px;line-height:18.00px;text-align:right;color:#ff0c18;font-size:11px;padding-right:5px;">24.25</div>
<div style="left:122.50px;top:732.80px;width:52.00px;height:18.00px;line-height:18.00px;text-align:right;color:#000;font-size:11px;padding-right:5px;">21.87</div>
<div style="left:174.50px;top:732.80px;width:46.80px;height:18.00px;line-height:18.00px;text-align:right;color:#000;font-size:11px;padding-right:5px;">-55.18</div>
<div style="left:309.20px;top:732.30px;width:237.80px;height:18.00px;background:#dbede1;border-bottom:1px solid #c9d3e6;"></div>
<div style="left:362.00px;top:732.30px;width:1.00px;height:18.00px;background:#c9d3e6;"></div>
<div style="left:414.00px;top:732.30px;width:1.00px;height:18.00px;background:#c9d3e6;"></div>
<div style="left:460.80px;top:732.30px;width:1.00px;height:18.00px;background:#c9d3e6;"></div>
<div style="left:504.00px;top:732.30px;width:1.00px;height:18.00px;background:#c9d3e6;"></div>
<div style="left:309.20px;top:732.80px;width:53.30px;height:18.00px;line-height:18.00px;text-align:right;color:#1c1cff;font-size:11px;padding-right:5px;">43.55</div>
<div style="left:362.50px;top:732.80px;width:52.00px;height:18.00px;line-height:18.00px;text-align:right;color:#000;font-size:11px;padding-right:5px;">21.19</div>
<div style="left:414.50px;top:732.80px;width:46.80px;height:18.00px;line-height:18.00px;text-align:right;color:#000;font-size:11px;padding-right:5px;">-51.54</div>
<div style="left:549.50px;top:732.30px;width:237.80px;height:18.00px;background:#dbede1;border-bottom:1px solid #c9d3e6;"></div>
<div style="left:602.30px;top:732.30px;width:1.00px;height:18.00px;background:#c9d3e6;"></div>
<div style="left:654.30px;top:732.30px;width:1.00px;height:18.00px;background:#c9d3e6;"></div>
<div style="left:701.10px;top:732.30px;width:1.00px;height:18.00px;background:#c9d3e6;"></div>
<div style="left:744.30px;top:732.30px;width:1.00px;height:18.00px;background:#c9d3e6;"></div>
<div style="left:549.50px;top:732.80px;width:53.30px;height:18.00px;line-height:18.00px;text-align:right;color:#1c1cff;font-size:11px;padding-right:5px;">58.05</div>
<div style="left:602.80px;top:732.80px;width:52.00px;height:18.00px;line-height:18.00px;text-align:right;color:#000;font-size:11px;padding-right:5px;">20.81</div>
<div style="left:654.80px;top:732.80px;width:46.80px;height:18.00px;line-height:18.00px;text-align:right;color:#000;font-size:11px;padding-right:5px;">-50.16</div>
<div style="left:17.00px;top:750.30px;width:49.70px;height:18.00px;background:#d4d4d4;border-bottom:1px solid #dcdcdc;"></div>
<div style="left:17.00px;top:750.80px;width:49.70px;height:18.00px;line-height:18.00px;text-align:center;color:#000;font-size:11px;">1480</div>
<div style="left:69.20px;top:750.30px;width:237.80px;height:18.00px;background:#dbede1;border-bottom:1px solid #c9d3e6;"></div>
<div style="left:122.00px;top:750.30px;width:1.00px;height:18.00px;background:#c9d3e6;"></div>
<div style="left:174.00px;top:750.30px;width:1.00px;height:18.00px;background:#c9d3e6;"></div>
<div style="left:220.80px;top:750.30px;width:1.00px;height:18.00px;background:#c9d3e6;"></div>
<div style="left:264.00px;top:750.30px;width:1.00px;height:18.00px;background:#c9d3e6;"></div>
<div style="left:69.20px;top:750.80px;width:53.30px;height:18.00px;line-height:18.00px;text-align:right;color:#ff0c18;font-size:11px;padding-right:5px;">21.80</div>
<div style="left:122.50px;top:750.80px;width:52.00px;height:18.00px;line-height:18.00px;text-align:right;color:#000;font-size:11px;padding-right:5px;">22.17</div>
<div style="left:174.50px;top:750.80px;width:46.80px;height:18.00px;line-height:18.00px;text-align:right;color:#000;font-size:11px;padding-right:5px;">-51.24</div>
<div style="left:309.20px;top:750.30px;width:237.80px;height:18.00px;background:#dbede1;border-bottom:1px solid #c9d3e6;"></div>
<div style="left:362.00px;top:750.30px;width:1.00px;height:18.00px;background:#c9d3e6;"></div>
<div style="left:414.00px;top:750.30px;width:1.00px;height:18.00px;background:#c9d3e6;"></div>
<div style="left:460.80px;top:750.30px;width:1.00px;height:18.00px;background:#c9d3e6;"></div>
<div style="left:504.00px;top:750.30px;width:1.00px;height:18.00px;background:#c9d3e6;"></div>
<div style="left:309.20px;top:750.80px;width:53.30px;height:18.00px;line-height:18.00px;text-align:right;color:#ff0c18;font-size:11px;padding-right:5px;">41.35</div>
<div style="left:362.50px;top:750.80px;width:52.00px;height:18.00px;line-height:18.00px;text-align:right;color:#000;font-size:11px;padding-right:5px;">21.43</div>
<div style="left:414.50px;top:750.80px;width:46.80px;height:18.00px;line-height:18.00px;text-align:right;color:#000;font-size:11px;padding-right:5px;">-49.52</div>
<div style="left:549.50px;top:750.30px;width:237.80px;height:18.00px;background:#dbede1;border-bottom:1px solid #c9d3e6;"></div>
<div style="left:602.30px;top:750.30px;width:1.00px;height:18.00px;background:#c9d3e6;"></div>
<div style="left:654.30px;top:750.30px;width:1.00px;height:18.00px;background:#c9d3e6;"></div>
<div style="left:701.10px;top:750.30px;width:1.00px;height:18.00px;background:#c9d3e6;"></div>
<div style="left:744.30px;top:750.30px;width:1.00px;height:18.00px;background:#c9d3e6;"></div>
<div style="left:549.50px;top:750.80px;width:53.30px;height:18.00px;line-height:18.00px;text-align:right;color:#1c1cff;font-size:11px;padding-right:5px;">55.85</div>
<div style="left:602.80px;top:750.80px;width:52.00px;height:18.00px;line-height:18.00px;text-align:right;color:#000;font-size:11px;padding-right:5px;">20.98</div>
<div style="left:654.80px;top:750.80px;width:46.80px;height:18.00px;line-height:18.00px;text-align:right;color:#000;font-size:11px;padding-right:5px;">-48.68</div>
<div style="left:69.20px;top:768.30px;width:237.80px;height:18.00px;background:#dbede1;border-bottom:1px solid #c9d3e6;"></div>
<div style="left:122.00px;top:768.30px;width:1.00px;height:18.00px;background:#c9d3e6;"></div>
<div style="left:174.00px;top:768.30px;width:1.00px;height:18.00px;background:#c9d3e6;"></div>
<div style="left:220.80px;top:768.30px;width:1.00px;height:18.00px;background:#c9d3e6;"></div>
<div style="left:264.00px;top:768.30px;width:1.00px;height:18.00px;background:#c9d3e6;"></div>
<div style="left:69.20px;top:768.80px;width:53.30px;height:18.00px;line-height:18.00px;text-align:right;color:#ff0c18;font-size:11px;padding-right:5px;">19.50</div>
<div style="left:122.50px;top:768.80px;width:52.00px;height:18.00px;line-height:18.00px;text-align:right;color:#000;font-size:11px;padding-right:5px;">22.50</div>
<div style="left:174.50px;top:768.80px;width:46.80px;height:18.00px;line-height:18.00px;text-align:right;color:#000;font-size:11px;padding-right:5px;">-47.30</div>
<div style="left:309.20px;top:768.30px;width:237.80px;height:18.00px;background:#dbede1;border-bottom:1px solid #c9d3e6;"></div>
<div style="left:362.00px;top:768.30px;width:1.00px;height:18.00px;background:#c9d3e6;"></div>
<div style="left:414.00px;top:768.30px;width:1.00px;height:18.00px;background:#c9d3e6;"></div>
<div style="left:460.80px;top:768.30px;width:1.00px;height:18.00px;background:#c9d3e6;"></div>
<div style="left:504.00px;top:768.30px;width:1.00px;height:18.00px;background:#c9d3e6;"></div>
<div style="left:309.20px;top:768.80px;width:53.30px;height:18.00px;line-height:18.00px;text-align:right;color:#ff0c18;font-size:11px;padding-right:5px;">39.25</div>
<div style="left:362.50px;top:768.80px;width:52.00px;height:18.00px;line-height:18.00px;text-align:right;color:#000;font-size:11px;padding-right:5px;">21.70</div>
<div style="left:414.50px;top:768.80px;width:46.80px;height:18.00px;line-height:18.00px;text-align:right;color:#000;font-size:11px;padding-right:5px;">-47.50</div>
<div style="left:549.50px;top:768.30px;width:237.80px;height:18.00px;background:#dbede1;border-bottom:1px solid #c9d3e6;"></div>
<div style="left:602.30px;top:768.30px;width:1.00px;height:18.00px;background:#c9d3e6;"></div>
<div style="left:654.30px;top:768.30px;width:1.00px;height:18.00px;background:#c9d3e6;"></div>
<div style="left:701.10px;top:768.30px;width:1.00px;height:18.00px;background:#c9d3e6;"></div>
<div style="left:744.30px;top:768.30px;width:1.00px;height:18.00px;background:#c9d3e6;"></div>
<div style="left:549.50px;top:768.80px;width:53.30px;height:18.00px;line-height:18.00px;text-align:right;color:#1c1cff;font-size:11px;padding-right:5px;">53.75</div>
<div style="left:602.80px;top:768.80px;width:52.00px;height:18.00px;line-height:18.00px;text-align:right;color:#000;font-size:11px;padding-right:5px;">21.15</div>
<div style="left:654.80px;top:768.80px;width:46.80px;height:18.00px;line-height:18.00px;text-align:right;color:#000;font-size:11px;padding-right:5px;">-47.20</div>
</div>
<div style="left:786.50px;top:442.50px;width:13.50px;height:329.50px;background:linear-gradient(90deg,#f3f3f3,#fcfcfc);"></div>
<div style="left:789.50px;top:449.50px;width:8.00px;height:0.00px;border-left:4px solid transparent;border-right:4px solid transparent;border-bottom:5px solid #53627e;"></div>
<div style="left:789.50px;top:760.00px;width:8.00px;height:0.00px;border-left:4px solid transparent;border-right:4px solid transparent;border-top:5px solid #53627e;"></div>
<div style="left:788.50px;top:567.50px;width:10.00px;height:12.00px;border:1px solid #8a9cb8;border-radius:2px;background:repeating-linear-gradient(#f4f6fa 0,#f4f6fa 1.5px,#7d8ca6 1.5px,#7d8ca6 2.5px);background-clip:content-box;padding:2px 1px;"></div>
<div style="left:461.30px;top:606.30px;width:43.20px;height:18.00px;line-height:18.00px;text-align:right;color:#1e8c1e;font-size:12px;font-weight:bold;padding-right:4px;">+3</div>
<div style="left:504.50px;top:606.30px;width:42.50px;height:18.00px;line-height:18.00px;text-align:right;color:#1414d0;font-size:12px;font-weight:bold;padding-right:4px;">-5</div>
<div style="left:461.30px;top:678.30px;width:43.20px;height:18.00px;line-height:18.00px;text-align:right;color:#1e8c1e;font-size:12px;font-weight:bold;padding-right:4px;">-3</div>
<div style="left:744.80px;top:678.30px;width:42.50px;height:18.00px;line-height:18.00px;text-align:right;color:#1414d0;font-size:12px;font-weight:bold;padding-right:4px;">+5</div>
<div style="left:11.00px;top:786.00px;width:792.00px;height:70.00px;border:1px solid #7da2d3;border-radius:6px;"></div>
<div style="left:363.78px;top:778.00px;width:89.24px;height:16.00px;line-height:16.00px;text-align:center;color:#173b78;font-size:11px;font-weight:bold;background:#d6e3f2;">Trade Analysis</div>
<div style="left:13.00px;top:778.00px;width:77.00px;height:17.00px;line-height:17.00px;text-align:left;color:#173b78;font-size:11px;padding-left:3px;background:#d6e3f2;">Isolation Mode</div>
<div style="left:91.40px;top:779.00px;width:73.10px;height:18.30px;background:#fff;border:1px solid #b9cde6;"></div>
<div style="left:94.40px;top:779.00px;width:53.10px;height:18.30px;line-height:18.30px;text-align:left;color:#000;font-size:11px;padding-left:0px;">Combine</div>
<div style="left:147.50px;top:781.00px;width:15.00px;height:14.30px;background:linear-gradient(#dbe8fa,#b7d0f0);border:1px solid #7b9ac6;"><div style="left:3.5px;top:6px;width:0;height:0;border-left:3.5px solid transparent;border-right:3.5px solid transparent;border-top:4px solid #1c3766;"></div></div>
<div style="left:167.60px;top:779.00px;width:75.70px;height:18.30px;background:#fff;border:1px solid #b9cde6;"></div>
<div style="left:170.60px;top:779.00px;width:55.70px;height:18.30px;line-height:18.30px;text-align:left;color:#000;font-size:11px;padding-left:0px;">Auto</div>
<div style="left:226.30px;top:781.00px;width:15.00px;height:14.30px;background:linear-gradient(#dbe8fa,#b7d0f0);border:1px solid #7b9ac6;"><div style="left:3.5px;top:6px;width:0;height:0;border-left:3.5px solid transparent;border-right:3.5px solid transparent;border-top:4px solid #1c3766;"></div></div>
<div style="left:656.00px;top:778.00px;width:135.00px;height:17.00px;line-height:17.00px;text-align:left;color:#000;font-size:11px;padding-left:0px;background:#d6e3f2;"></div>
<div style="left:661.00px;top:779.50px;width:11.50px;height:12.50px;border:1px solid #9aa9bf;background:linear-gradient(#e4e8ee,#fff);"></div>
<div style="left:676.00px;top:778.00px;width:112.00px;height:17.00px;line-height:17.00px;text-align:left;color:#173b78;font-size:11px;padding-left:0px;">Ignore Today's Trades</div>
<div style="left:14.20px;top:799.00px;width:785.60px;height:19.30px;background:linear-gradient(#fdfdfe,#eff2f7 50%,#e2e8f0 51%,#d6dee9);border-bottom:1px solid #a3b6d0;"></div>
<div style="left:14.20px;top:799.00px;width:48.10px;height:19.30px;line-height:19.30px;text-align:center;color:#000;font-size:11px;">Analysis</div>
<div style="left:61.80px;top:800.00px;width:1.00px;height:17.30px;background:#b3c3d8;"></div>
<div style="left:62.30px;top:799.00px;width:80.10px;height:19.30px;line-height:19.30px;text-align:center;color:#000;font-size:11px;">MaxMargin</div>
<div style="left:141.90px;top:800.00px;width:1.00px;height:17.30px;background:#b3c3d8;"></div>
<div style="left:142.40px;top:799.00px;width:63.90px;height:19.30px;line-height:19.30px;text-align:center;color:#000;font-size:11px;">Cost</div>
<div style="left:205.80px;top:800.00px;width:1.00px;height:17.30px;background:#b3c3d8;"></div>
<div style="left:206.30px;top:799.00px;width:64.10px;height:19.30px;line-height:19.30px;text-align:center;color:#000;font-size:11px;">Curr Cost</div>
<div style="left:269.90px;top:800.00px;width:1.00px;height:17.30px;background:#b3c3d8;"></div>
<div style="left:270.40px;top:799.00px;width:55.10px;height:19.30px;line-height:19.30px;text-align:center;color:#000;font-size:11px;">Com</div>
<div style="left:325.00px;top:800.00px;width:1.00px;height:17.30px;background:#b3c3d8;"></div>
<div style="left:325.50px;top:799.00px;width:79.80px;height:19.30px;line-height:19.30px;text-align:center;color:#000;font-size:11px;">Profit/Loss</div>
<div style="left:404.80px;top:800.00px;width:1.00px;height:17.30px;background:#b3c3d8;"></div>
<div style="left:405.30px;top:799.00px;width:64.30px;height:19.30px;line-height:19.30px;text-align:center;color:#000;font-size:11px;">PnL%</div>
<div style="left:469.10px;top:800.00px;width:1.00px;height:17.30px;background:#b3c3d8;"></div>
<div style="left:469.60px;top:799.00px;width:63.70px;height:19.30px;line-height:19.30px;text-align:center;color:#000;font-size:11px;">Delta</div>
<div style="left:532.80px;top:800.00px;width:1.00px;height:17.30px;background:#b3c3d8;"></div>
<div style="left:533.30px;top:799.00px;width:64.20px;height:19.30px;line-height:19.30px;text-align:center;color:#000;font-size:11px;">Gamma</div>
<div style="left:597.00px;top:800.00px;width:1.00px;height:17.30px;background:#b3c3d8;"></div>
<div style="left:597.50px;top:799.00px;width:63.90px;height:19.30px;line-height:19.30px;text-align:center;color:#000;font-size:11px;">Theta</div>
<div style="left:660.90px;top:800.00px;width:1.00px;height:17.30px;background:#b3c3d8;"></div>
<div style="left:661.40px;top:799.00px;width:64.30px;height:19.30px;line-height:19.30px;text-align:center;color:#000;font-size:11px;">Vega</div>
<div style="left:725.20px;top:800.00px;width:1.00px;height:17.30px;background:#b3c3d8;"></div>
<div style="left:725.70px;top:799.00px;width:41.60px;height:19.30px;line-height:19.30px;text-align:center;color:#000;font-size:11px;">T/D</div>
<div style="left:766.80px;top:800.00px;width:1.00px;height:17.30px;background:#b3c3d8;"></div>
<div style="left:767.30px;top:799.00px;width:32.50px;height:19.30px;line-height:19.30px;text-align:center;color:#000;font-size:11px;">Plot</div>
<div style="left:14.20px;top:818.30px;width:785.60px;height:18.00px;background:#dfe8f3;border-bottom:1px solid #c9d5e3;"></div>
<div style="left:14.20px;top:818.30px;width:48.10px;height:18.00px;line-height:18.00px;text-align:center;color:#1c1cff;font-size:11px;">Position</div>
<div style="left:61.80px;top:818.30px;width:1.00px;height:18.00px;background:#c9d5e3;"></div>
<div style="left:62.30px;top:818.30px;width:80.10px;height:18.00px;line-height:18.00px;text-align:center;color:#000;font-size:11px;">12,306.30</div>
<div style="left:141.90px;top:818.30px;width:1.00px;height:18.00px;background:#c9d5e3;"></div>
<div style="left:142.40px;top:818.30px;width:63.90px;height:18.00px;line-height:18.00px;text-align:center;color:#000;font-size:11px;">-2,306.30</div>
<div style="left:205.80px;top:818.30px;width:1.00px;height:18.00px;background:#c9d5e3;"></div>
<div style="left:206.30px;top:818.30px;width:64.10px;height:18.00px;line-height:18.00px;text-align:center;color:#000;font-size:11px;">1,500.01</div>
<div style="left:269.90px;top:818.30px;width:1.00px;height:18.00px;background:#c9d5e3;"></div>
<div style="left:270.40px;top:818.30px;width:55.10px;height:18.00px;line-height:18.00px;text-align:center;color:#000;font-size:11px;">6.30</div>
<div style="left:325.00px;top:818.30px;width:1.00px;height:18.00px;background:#c9d5e3;"></div>
<div style="left:325.50px;top:818.30px;width:79.80px;height:18.00px;line-height:18.00px;text-align:center;color:#ff0c18;font-size:11px;">-806.29</div>
<div style="left:404.80px;top:818.30px;width:1.00px;height:18.00px;background:#c9d5e3;"></div>
<div style="left:405.30px;top:818.30px;width:64.30px;height:18.00px;line-height:18.00px;text-align:center;color:#ff0c18;font-size:11px;">-6.55%</div>
<div style="left:469.10px;top:818.30px;width:1.00px;height:18.00px;background:#c9d5e3;"></div>
<div style="left:469.60px;top:818.30px;width:63.70px;height:18.00px;line-height:18.00px;text-align:center;color:#000;font-size:11px;">58.97</div>
<div style="left:532.80px;top:818.30px;width:1.00px;height:18.00px;background:#c9d5e3;"></div>
<div style="left:533.30px;top:818.30px;width:64.20px;height:18.00px;line-height:18.00px;text-align:center;color:#000;font-size:11px;">-0.50</div>
<div style="left:597.00px;top:818.30px;width:1.00px;height:18.00px;background:#c9d5e3;"></div>
<div style="left:597.50px;top:818.30px;width:63.90px;height:18.00px;line-height:18.00px;text-align:center;color:#000;font-size:11px;">41.30</div>
<div style="left:660.90px;top:818.30px;width:1.00px;height:18.00px;background:#c9d5e3;"></div>
<div style="left:661.40px;top:818.30px;width:64.30px;height:18.00px;line-height:18.00px;text-align:center;color:#000;font-size:11px;">443.18</div>
<div style="left:725.20px;top:818.30px;width:1.00px;height:18.00px;background:#c9d5e3;"></div>
<div style="left:725.70px;top:818.30px;width:41.60px;height:18.00px;line-height:18.00px;text-align:center;color:#000;font-size:11px;">1</div>
<div style="left:766.80px;top:818.30px;width:1.00px;height:18.00px;background:#c9d5e3;"></div>
<div style="left:767.30px;top:818.30px;width:32.50px;height:18.00px;line-height:18.00px;text-align:center;color:#000;font-size:11px;"></div>
<div style="left:14.20px;top:836.30px;width:785.60px;height:18.00px;background:#dfe8f3;border-bottom:1px solid #c9d5e3;"></div>
<div style="left:14.20px;top:836.30px;width:48.10px;height:18.00px;line-height:18.00px;text-align:center;color:#2a9a2a;font-size:11px;">Model</div>
<div style="left:61.80px;top:836.30px;width:1.00px;height:18.00px;background:#c9d5e3;"></div>
<div style="left:62.30px;top:836.30px;width:80.10px;height:18.00px;line-height:18.00px;text-align:center;color:#000;font-size:11px;">9,595.08</div>
<div style="left:141.90px;top:836.30px;width:1.00px;height:18.00px;background:#c9d5e3;"></div>
<div style="left:142.40px;top:836.30px;width:63.90px;height:18.00px;line-height:18.00px;text-align:center;color:#000;font-size:11px;">-5,595.08</div>
<div style="left:205.80px;top:836.30px;width:1.00px;height:18.00px;background:#c9d5e3;"></div>
<div style="left:206.30px;top:836.30px;width:64.10px;height:18.00px;line-height:18.00px;text-align:center;color:#000;font-size:11px;">4,785.01</div>
<div style="left:269.90px;top:836.30px;width:1.00px;height:18.00px;background:#c9d5e3;"></div>
<div style="left:270.40px;top:836.30px;width:55.10px;height:18.00px;line-height:18.00px;text-align:center;color:#000;font-size:11px;">10.08</div>
<div style="left:325.00px;top:836.30px;width:1.00px;height:18.00px;background:#c9d5e3;"></div>
<div style="left:325.50px;top:836.30px;width:79.80px;height:18.00px;line-height:18.00px;text-align:center;color:#ff0c18;font-size:11px;">-810.07</div>
<div style="left:404.80px;top:836.30px;width:1.00px;height:18.00px;background:#c9d5e3;"></div>
<div style="left:405.30px;top:836.30px;width:64.30px;height:18.00px;line-height:18.00px;text-align:center;color:#ff0c18;font-size:11px;">-8.44%</div>
<div style="left:469.10px;top:836.30px;width:1.00px;height:18.00px;background:#c9d5e3;"></div>
<div style="left:469.60px;top:836.30px;width:63.70px;height:18.00px;line-height:18.00px;text-align:center;color:#000;font-size:11px;">32.75</div>
<div style="left:532.80px;top:836.30px;width:1.00px;height:18.00px;background:#c9d5e3;"></div>
<div style="left:533.30px;top:836.30px;width:64.20px;height:18.00px;line-height:18.00px;text-align:center;color:#000;font-size:11px;">-0.52</div>
<div style="left:597.00px;top:836.30px;width:1.00px;height:18.00px;background:#c9d5e3;"></div>
<div style="left:597.50px;top:836.30px;width:63.90px;height:18.00px;line-height:18.00px;text-align:center;color:#000;font-size:11px;">59.79</div>
<div style="left:660.90px;top:836.30px;width:1.00px;height:18.00px;background:#c9d5e3;"></div>
<div style="left:661.40px;top:836.30px;width:64.30px;height:18.00px;line-height:18.00px;text-align:center;color:#000;font-size:11px;">404.79</div>
<div style="left:725.20px;top:836.30px;width:1.00px;height:18.00px;background:#c9d5e3;"></div>
<div style="left:725.70px;top:836.30px;width:41.60px;height:18.00px;line-height:18.00px;text-align:center;color:#000;font-size:11px;">2</div>
<div style="left:766.80px;top:836.30px;width:1.00px;height:18.00px;background:#c9d5e3;"></div>
<div style="left:767.30px;top:836.30px;width:32.50px;height:18.00px;line-height:18.00px;text-align:center;color:#000;font-size:11px;"></div>
<div style="left:777.00px;top:820.50px;width:13.00px;height:13.00px;background:#fff;border:1px solid #333;"><svg width="11" height="11" style="left:0;top:0"><path d="M2 5.5 L4.5 8 L9.5 2.5" stroke="#222" stroke-width="1.3" fill="none"/></svg></div>
<div style="left:777.00px;top:838.50px;width:13.00px;height:13.00px;background:#fff;border:1px solid #333;"><svg width="11" height="11" style="left:0;top:0"><path d="M2 5.5 L4.5 8 L9.5 2.5" stroke="#222" stroke-width="1.3" fill="none"/></svg></div>
<div style="left:7.00px;top:855.00px;width:1905.00px;height:27.00px;background:linear-gradient(#8db0dc 0,#8db0dc 1.5px,#ffffff 1.5px,#ffffff 2.5px,#dce9f9 3px,#cfe1f7 45%,#c2d8f4 60%,#d2e3f8 100%);"></div>
<div style="left:12.00px;top:859.00px;width:300.00px;height:25.00px;line-height:25.00px;text-align:left;color:#1e395b;font-size:11.8px;padding-left:0px;">Today - Live prices from Interactive Brokers (105)</div>
<div style="left:651.00px;top:859.00px;width:1.00px;height:22.00px;background:#a9c0de;"></div>
<div style="left:655.00px;top:859.00px;width:100.00px;height:25.00px;line-height:25.00px;text-align:left;color:#1e395b;font-size:11px;padding-left:0px;">Server Ready</div>
<div style="left:953.00px;top:859.50px;width:40.00px;height:25.00px;line-height:25.00px;text-align:left;color:#1e3f8a;font-size:11.5px;padding-left:0px;">View</div>
<svg style="left:987px;top:862.5px" width="16" height="16" viewBox="0 0 16 16"><rect x="0.5" y="1" width="15" height="14.5" rx="1" fill="#fff" stroke="#8a8a8a"/><rect x="0.5" y="0.5" width="15" height="2" fill="#3f5c9c"/><rect x="2" y="3.5" width="12" height="10.5" fill="#8e8e8e"/><rect x="2" y="3.5" width="1.5" height="10.5" fill="#6f8cc4"/><rect x="12.5" y="3.5" width="1.5" height="10.5" fill="#6f8cc4"/><rect x="4.2" y="4.3" width="2.2" height="2.4" fill="#fff"/><rect x="4.2" y="7.6" width="2.2" height="2.4" fill="#fff"/><rect x="4.2" y="10.899999999999999" width="2.2" height="2.4" fill="#fff"/><rect x="7.2" y="4.3" width="2.2" height="2.4" fill="#fff"/><rect x="7.2" y="7.6" width="2.2" height="2.4" fill="#fff"/><rect x="7.2" y="10.899999999999999" width="2.2" height="2.4" fill="#fff"/><rect x="10.2" y="4.3" width="2.2" height="2.4" fill="#fff"/><rect x="10.2" y="7.6" width="2.2" height="2.4" fill="#fff"/><rect x="10.2" y="10.899999999999999" width="2.2" height="2.4" fill="#fff"/></svg>
<svg style="left:1013px;top:862.5px" width="16" height="16" viewBox="0 0 16 16"><rect x="0.5" y="0.5" width="15" height="15" rx="1.2" fill="#fff" stroke="#8a8a8a"/><rect x="2" y="2" width="12" height="10" fill="#9a9a9a"/><rect x="2.8" y="2.8" width="2.8" height="2.4" fill="#fff"/><rect x="2.8" y="6.1" width="2.8" height="2.4" fill="#fff"/><rect x="2.8" y="9.399999999999999" width="2.8" height="2.4" fill="#fff"/><rect x="6.6" y="2.8" width="2.8" height="2.4" fill="#fff"/><rect x="6.6" y="6.1" width="2.8" height="2.4" fill="#fff"/><rect x="6.6" y="9.399999999999999" width="2.8" height="2.4" fill="#fff"/><rect x="10.399999999999999" y="2.8" width="2.8" height="2.4" fill="#fff"/><rect x="10.399999999999999" y="6.1" width="2.8" height="2.4" fill="#fff"/><rect x="10.399999999999999" y="9.399999999999999" width="2.8" height="2.4" fill="#fff"/><path d="M2 13.2H14" stroke="#5a78b8" stroke-width="0.9"/><path d="M1.8 7.2 L7.8 9.6 L13.6 3.4" stroke="#7a95c8" stroke-width="1.1" fill="none"/><circle cx="1.8" cy="7.2" r="1.1" fill="#2a9a2a"/><circle cx="7.8" cy="9.6" r="1.2" fill="#d01818"/><circle cx="13.6" cy="3.4" r="1.1" fill="#8a3aa8"/></svg>
<div style="left:1711.00px;top:859.50px;width:40.00px;height:25.00px;line-height:25.00px;text-align:left;color:#1e3f8a;font-size:12px;padding-left:0px;">260%</div>
<div style="left:1750.00px;top:862.00px;width:16.00px;height:16.00px;border:1.2px solid #4f6b95;border-radius:50%;background:linear-gradient(#f5f8fc,#c9d8ec);"><div style="left:3.5px;top:6.3px;width:6.5px;height:2px;background:#3a4a60"></div></div>
<div style="left:1766.00px;top:869.30px;width:102.00px;height:1.20px;background:#7f9cc4;"></div>
<div style="left:1817.00px;top:866.00px;width:1.20px;height:7.00px;background:#7f9cc4;"></div>
<div style="left:1829.00px;top:863.00px;width:9.00px;height:13.00px;border:1px solid #4f6b95;border-radius:2px 2px 0 0;background:linear-gradient(90deg,#e9f0f8,#c2d3ea);clip-path:polygon(0 0,100% 0,100% 70%,50% 100%,0 70%);"><div style="left:3px;top:3px;width:1px;height:5px;background:#4f6b95"></div></div>
<div style="left:1868.00px;top:862.00px;width:16.00px;height:16.00px;border:1.2px solid #4f6b95;border-radius:50%;background:linear-gradient(#f5f8fc,#c9d8ec);"><div style="left:3.5px;top:6.3px;width:6.5px;height:2px;background:#3a4a60"></div><div style="left:5.75px;top:4px;width:2px;height:6.5px;background:#3a4a60"></div></div>
<div style="left:1893.00px;top:864.00px;width:12.00px;height:12.00px;border-radius:50%;background:radial-gradient(circle at 40% 35%,#9cff7a,#1fb41f 55%,#0a6e0a);"></div>
<div style="left:803.00px;top:24.00px;width:7.00px;height:831.00px;background:#d6e3f2;border-right:1px solid #7ea4d6;"></div>
<div style="left:804.00px;top:396.00px;width:0.00px;height:0.00px;border-top:3.5px solid transparent;border-bottom:3.5px solid transparent;border-left:4px solid #2c3e60;"></div>
<div style="left:804.60px;top:397.30px;width:0.00px;height:0.00px;border-top:2.2px solid transparent;border-bottom:2.2px solid transparent;border-left:2.5px solid #5a8fe0;"></div>
<div style="left:804.00px;top:455.00px;width:0.00px;height:0.00px;border-top:3.5px solid transparent;border-bottom:3.5px solid transparent;border-left:4px solid #2c3e60;"></div>
<div style="left:804.60px;top:456.30px;width:0.00px;height:0.00px;border-top:2.2px solid transparent;border-bottom:2.2px solid transparent;border-left:2.5px solid #5a8fe0;"></div>
<div style="left:804.50px;top:410.00px;width:2.50px;height:35.00px;background:repeating-linear-gradient(#111 0,#111 2px,transparent 2px,transparent 4px);"></div>
<div style="left:810.00px;top:24.00px;width:1099.50px;height:831.00px;border:1px solid #8db0dc;border-bottom:none;"></div>
<div style="left:812.00px;top:1.50px;width:71.00px;height:23.50px;background:linear-gradient(#f7fafe,#e3ecf8);border:1px solid #8db0dc;border-bottom:none;border-radius:4px 4px 0 0;"></div>
<div style="left:812.00px;top:1.50px;width:71.00px;height:22.00px;line-height:22.00px;text-align:center;color:#1e3f8a;font-size:11px;">Risk Profile</div>
<div style="left:894.30px;top:1.50px;width:200.00px;height:22.00px;line-height:22.00px;text-align:left;color:#1e3f8a;font-size:11px;padding-left:0px;">Price Chart</div>
<div style="left:968.50px;top:1.50px;width:200.00px;height:22.00px;line-height:22.00px;text-align:left;color:#1e3f8a;font-size:11px;padding-left:0px;">Movement Analysis</div>
<div style="left:1083.00px;top:1.50px;width:200.00px;height:22.00px;line-height:22.00px;text-align:left;color:#1e3f8a;font-size:11px;padding-left:0px;">Volatility</div>
<div style="left:1144.30px;top:1.50px;width:200.00px;height:22.00px;line-height:22.00px;text-align:left;color:#1e3f8a;font-size:11px;padding-left:0px;">Statistics &amp; Fundamentals</div>
<div style="left:811.00px;top:25.00px;width:1097.50px;height:34.00px;background:linear-gradient(#dfe9f6,#d7e4f3 47%,#cadbf0 53%,#c5d8ef);"></div>
<div style="left:817.70px;top:33.00px;width:90.00px;height:18.00px;line-height:18.00px;text-align:left;color:#1e3f8a;font-size:11.5px;padding-left:0px;">Volatility Adjust</div>
<div style="left:900.30px;top:32.60px;width:39.00px;height:18.70px;background:#fff;border:1px solid #a9c0de;"></div>
<div style="left:900.30px;top:32.60px;width:22.00px;height:18.70px;line-height:18.70px;text-align:right;color:#000;font-size:12px;padding-right:0px;">0</div>
<div style="left:923.00px;top:34.00px;width:14.50px;height:7.80px;border:1px solid #6f8fba;background:linear-gradient(#d8e9fd,#abcef9);"><div style="left:3px;top:1px;width:0;height:0;border-left:3.5px solid transparent;border-right:3.5px solid transparent;border-bottom:4px solid #1c3766;"></div></div>
<div style="left:923.00px;top:42.20px;width:14.50px;height:7.80px;border:1px solid #6f8fba;background:linear-gradient(#d8e9fd,#abcef9);"><div style="left:3px;top:1px;width:0;height:0;border-left:3.5px solid transparent;border-right:3.5px solid transparent;border-top:4px solid #1c3766;"></div></div>
<div style="left:1626.00px;top:33.00px;width:55.00px;height:18.00px;line-height:18.00px;text-align:left;color:#1e3f8a;font-size:11.5px;padding-left:0px;">Projection</div>
<div style="left:1678.40px;top:31.30px;width:175.40px;height:21.00px;background:#fff;border:1.5px solid #5f86c4;"></div>
<div style="left:1681.00px;top:31.30px;width:100.00px;height:21.00px;line-height:21.00px;text-align:left;color:#000;font-size:11.5px;padding-left:0px;">mi. 09 oct. 2019</div>
<div style="left:1780.00px;top:33.00px;width:20.50px;height:17.00px;border:1px solid #8ea9cf;background:linear-gradient(#eef4fc,#c8dbf3);"><div style="left:4px;top:3px;width:11px;height:10px;border:1px solid #5c6f8a;background:repeating-linear-gradient(90deg,transparent 0,transparent 2px,#5c6f8a 2px,#5c6f8a 3px),repeating-linear-gradient(transparent 0,transparent 2px,#5c6f8a 2px,#5c6f8a 3px);"></div></div>
<div style="left:1800.50px;top:33.00px;width:26.50px;height:17.00px;border:1px solid #8ea9cf;background:linear-gradient(#e2ecfa,#c2d7f2);"></div>
<div style="left:1800.50px;top:33.00px;width:26.50px;height:17.00px;line-height:17.00px;text-align:center;color:#0f2350;font-size:11px;">T+0</div>
<div style="left:1827.00px;top:33.00px;width:25.50px;height:17.00px;border:1px solid #8ea9cf;background:linear-gradient(#e2ecfa,#c2d7f2);"></div>
<div style="left:1827.00px;top:33.00px;width:25.50px;height:17.00px;line-height:17.00px;text-align:center;color:#0f2350;font-size:11px;">1Ln</div>
<div style="left:1855.80px;top:30.50px;width:23.00px;height:23.00px;border:1px solid #6b84aa;border-radius:50%;background:radial-gradient(circle at 50% 25%,#f7fafd,#d3e0f0 55%,#a9bfdc);"><svg width="21" height="21" style="left:0;top:0"><path d="M3.5 10.5 L9.5 4.8 L9.5 8.3 L17 8.3 L17 12.7 L9.5 12.7 L9.5 16.2 Z" fill="#3d5b8e" stroke="#2b4674" stroke-width="0.6"/></svg></div>
<div style="left:1881.00px;top:30.50px;width:23.00px;height:23.00px;border:1px solid #6b84aa;border-radius:50%;background:radial-gradient(circle at 50% 25%,#f7fafd,#d3e0f0 55%,#a9bfdc);"><svg width="21" height="21" style="left:0;top:0"><path d="M17.5 10.5 L11.5 4.8 L11.5 8.3 L4 8.3 L4 12.7 L11.5 12.7 L11.5 16.2 Z" fill="#3d5b8e" stroke="#2b4674" stroke-width="0.6"/></svg></div>
<div style="left:811.00px;top:59.00px;width:1097.50px;height:796.00px;background:#fff;"></div>
<svg style="left:0;top:0" width="1920" height="890" viewBox="0 0 1920 890" font-family="Liberation Sans, sans-serif">
<defs><clipPath id="plot"><rect x="865.4" y="77.3" width="991.4" height="632.7"/></clipPath><radialGradient id="dot" cx="40%" cy="35%" r="60%"><stop offset="0" stop-color="#ff8080"/><stop offset="0.5" stop-color="#c00000"/><stop offset="1" stop-color="#600000"/></radialGradient></defs>
<rect x="1122.51" y="77.3" width="105.33" height="632.7" fill="#f9c08f"/>
<rect x="1227.84" y="77.3" width="210.54" height="632.7" fill="#dbede1"/>
<rect x="1438.38" y="77.3" width="105.33" height="632.7" fill="#f9c08f"/>
<path d="M865.4 103.50H1856.8 M865.4 130.50H1856.8 M865.4 156.50H1856.8 M865.4 182.50H1856.8 M865.4 209.50H1856.8 M865.4 235.50H1856.8 M865.4 261.50H1856.8 M865.4 288.50H1856.8 M865.4 314.50H1856.8 M865.4 340.50H1856.8 M865.4 367.50H1856.8 M865.4 393.50H1856.8 M865.4 420.50H1856.8 M865.4 446.50H1856.8 M865.4 472.50H1856.8 M865.4 499.50H1856.8 M865.4 525.50H1856.8 M865.4 551.50H1856.8 M865.4 578.50H1856.8 M865.4 604.50H1856.8 M865.4 630.50H1856.8 M865.4 657.50H1856.8 M865.4 683.50H1856.8 M910.50 77.3V710.0 M968.50 77.3V710.0 M1026.50 77.3V710.0 M1085.50 77.3V710.0 M1143.50 77.3V710.0 M1201.50 77.3V710.0 M1259.50 77.3V710.0 M1317.50 77.3V710.0 M1376.50 77.3V710.0 M1434.50 77.3V710.0 M1492.50 77.3V710.0 M1550.50 77.3V710.0 M1609.50 77.3V710.0 M1667.50 77.3V710.0 M1725.50 77.3V710.0 M1783.50 77.3V710.0 M1842.50 77.3V710.0" stroke="#cccccc" stroke-width="1" fill="none"/>
<text transform="translate(1134.5,81.5) rotate(-90)" text-anchor="end" font-size="10.5" fill="#fde6cf">1436.43</text>
<text transform="translate(1240.5,81.5) rotate(-90)" text-anchor="end" font-size="10.5" fill="#f5caa2">1454.52</text>
<text transform="translate(1437.8,81.5) rotate(-90)" text-anchor="end" font-size="10.5" fill="#f6c9a0">1490.68</text>
<text transform="translate(1542.8,81.5) rotate(-90)" text-anchor="end" font-size="10.5" fill="#fde6cf">1508.77</text>
<text x="1360" y="621" text-anchor="middle" font-size="29" fill="#808080" fill-opacity="0.28">OptionNET Explorer</text>
<text x="1360" y="636" text-anchor="middle" font-size="11" letter-spacing="0.3" fill="#808080" fill-opacity="0.4">2018 © THJ Systems Ltd</text>
<path d="M1246.47 77.3V710.0" stroke="#8a008a" stroke-width="1.4" stroke-dasharray="5 3.5"/>
<text transform="translate(1245.0,708) rotate(-90)" font-size="10.8" fill="#8a008a">1457.72</text>
<text x="1056" y="702" text-anchor="middle" font-size="11" fill="#8a008a">43.7%</text>
<text x="1551" y="702" text-anchor="middle" font-size="11" fill="#8a008a">56.3%</text>
<path d="M859.4 420.01H1861.8" stroke="#000" stroke-width="1.1"/>
<path d="M865.4 386.8H1856.8" stroke="#00ff00" stroke-width="3"/>
<path d="M865.4 469.0H1856.8" stroke="#ff0000" stroke-width="3"/>
<g clip-path="url(#plot)" fill="none" stroke-linejoin="round">
<path d="M865.40 547.20 C892.45 541.00 970.80 523.03 1027.70 510.00 C1084.60 496.97 1176.95 475.83 1206.80 469.00" stroke="#ff1a1a" stroke-width="1.1"/>
<path d="M865.40 596.60 C902.10 584.92 1018.83 547.77 1085.60 526.50 C1152.37 505.23 1235.93 478.58 1266.00 469.00" stroke="#ff1a1a" stroke-width="1.1"/>
<path d="M1206.80 469.00 C1220.67 466.25 1264.30 457.08 1290.00 452.50 C1315.70 447.92 1336.00 445.07 1361.00 441.50 C1386.00 437.93 1418.08 433.75 1440.00 431.10 C1461.92 428.45 1475.17 427.17 1492.50 425.60 C1509.83 424.03 1524.67 422.87 1544.00 421.70 C1563.33 420.53 1588.10 419.33 1608.50 418.60 C1628.90 417.87 1646.90 417.48 1666.40 417.30 C1685.90 417.12 1705.98 417.28 1725.50 417.50 C1745.02 417.72 1761.62 417.72 1783.50 418.60 C1805.38 419.48 1844.58 422.10 1856.80 422.80" stroke="#3cc83c" stroke-width="1.1"/>
<path d="M1266.00 469.00 C1281.83 464.58 1332.00 450.38 1361.00 442.50 C1390.00 434.62 1409.50 428.88 1440.00 421.70 C1470.50 414.52 1514.10 405.13 1544.00 399.40 C1573.90 393.67 1606.83 389.32 1619.40 387.30" stroke="#5a8ef0" stroke-width="1.1"/>
<path d="M1619.40 387.30 C1627.23 386.32 1648.72 383.32 1666.40 381.40 C1684.08 379.48 1705.98 377.37 1725.50 375.80 C1745.02 374.23 1761.62 373.10 1783.50 372.00 C1805.38 370.90 1844.58 369.67 1856.80 369.20" stroke="#2ef02e" stroke-width="1.1"/>
<path d="M865.40 681.71 L867.40 681.11 L869.40 680.52 L871.41 679.92 L873.41 679.31 L875.41 678.71 L877.41 678.10 L879.42 677.49 L881.42 676.87 L883.42 676.26 L885.42 675.64 L887.43 675.02 L889.43 674.40 L891.43 673.77 L893.43 673.14 L895.44 672.51 L897.44 671.88 L899.44 671.24 L901.44 670.60 L903.45 669.96 L905.45 669.31 L907.45 668.66 L909.45 668.01 L911.46 667.36 L913.46 666.70 L915.46 666.04 L917.46 665.38 L919.47 664.71 L921.47 664.04 L923.47 663.37 L925.47 662.69 L927.48 662.01 L929.48 661.32 L931.48 660.64 L933.48 659.95 L935.48 659.25 L937.49 658.56 L939.49 657.85 L941.49 657.15 L943.49 656.44 L945.50 655.73 L947.50 655.01 L949.50 654.29 L951.50 653.57 L953.51 652.85 L955.51 652.11 L957.51 651.38 L959.51 650.64 L961.52 649.90 L963.52 649.15 L965.52 648.40 L967.52 647.65 L969.53 646.89 L971.53 646.13 L973.53 645.36 L975.53 644.59 L977.54 643.82 L979.54 643.04 L981.54 642.25 L983.54 641.47 L985.55 640.68 L987.55 639.88 L989.55 639.08 L991.55 638.27 L993.56 637.47 L995.56 636.65 L997.56 635.83 L999.56 635.01 L1001.56 634.18 L1003.57 633.35 L1005.57 632.52 L1007.57 631.68 L1009.57 630.83 L1011.58 629.98 L1013.58 629.13 L1015.58 628.27 L1017.58 627.40 L1019.59 626.53 L1021.59 625.66 L1023.59 624.78 L1025.59 623.90 L1027.60 623.01 L1029.60 622.12 L1031.60 621.22 L1033.60 620.32 L1035.61 619.41 L1037.61 618.49 L1039.61 617.58 L1041.61 616.65 L1043.62 615.72 L1045.62 614.79 L1047.62 613.85 L1049.62 612.91 L1051.63 611.96 L1053.63 611.01 L1055.63 610.05 L1057.63 609.08 L1059.64 608.11 L1061.64 607.14 L1063.64 606.16 L1065.64 605.17 L1067.65 604.18 L1069.65 603.19 L1071.65 602.18 L1073.65 601.18 L1075.65 600.16 L1077.66 599.15 L1079.66 598.12 L1081.66 597.09 L1083.66 596.06 L1085.67 595.02 L1087.67 593.97 L1089.67 592.92 L1091.67 591.86 L1093.68 590.80 L1095.68 589.73 L1097.68 588.66 L1099.68 587.58 L1101.69 586.50 L1103.69 585.40 L1105.69 584.31 L1107.69 583.21 L1109.70 582.10 L1111.70 580.98 L1113.70 579.86 L1115.70 578.74 L1117.71 577.61 L1119.71 576.47 L1121.71 575.33 L1123.71 574.18 L1125.72 573.02 L1127.72 571.86 L1129.72 570.69 L1131.72 569.52 L1133.73 568.34 L1135.73 567.16 L1137.73 565.97 L1139.73 564.77 L1141.73 563.57 L1143.74 562.36 L1145.74 561.14 L1147.74 559.92 L1149.74 558.69 L1151.75 557.46 L1153.75 556.22 L1155.75 554.98 L1157.75 553.72 L1159.76 552.47 L1161.76 551.20 L1163.76 549.93 L1165.76 548.65 L1167.77 547.37 L1169.77 546.08 L1171.77 544.79 L1173.77 543.49 L1175.78 542.18 L1177.78 540.86 L1179.78 539.54 L1181.78 538.22 L1183.79 536.88 L1185.79 535.54 L1187.79 534.20 L1189.79 532.85 L1191.80 531.49 L1193.80 530.12 L1195.80 528.75 L1197.80 527.38 L1199.81 525.99 L1201.81 524.60 L1203.81 523.20 L1205.81 521.80 L1207.81 520.39 L1209.82 518.98 L1211.82 517.55 L1213.82 516.12 L1215.82 514.69 L1217.83 513.25 L1219.83 511.80 L1221.83 510.34 L1223.83 508.88 L1225.84 507.42 L1227.84 505.94 L1229.84 504.46 L1231.84 502.97 L1233.85 501.48 L1235.85 499.98 L1237.85 498.47 L1239.85 496.96 L1241.86 495.44 L1243.86 493.91 L1245.86 492.38 L1247.86 490.84 L1249.87 489.29 L1251.87 487.74 L1253.87 486.18 L1255.87 484.61 L1257.88 483.04 L1259.88 481.46 L1261.88 479.88 L1263.88 478.28 L1265.89 476.69 L1267.89 475.08 L1269.89 473.47 L1271.89 471.85 L1273.89 470.22 L1275.90 468.59 L1277.90 466.95 L1279.90 465.31 L1281.90 463.66 L1283.91 462.00 L1285.91 460.33 L1287.91 458.66 L1289.91 456.98 L1291.92 455.30 L1293.92 453.61 L1295.92 451.91 L1297.92 450.20 L1299.93 448.49 L1301.93 446.77 L1303.93 445.05 L1305.93 443.32 L1307.94 441.58 L1309.94 439.83 L1311.94 438.08 L1313.94 436.32 L1315.95 434.56 L1317.95 432.79 L1319.95 431.01 L1321.95 429.23 L1323.96 427.44 L1325.96 425.64 L1327.96 423.83 L1329.96 422.02 L1331.97 420.21 L1333.97 418.38 L1335.97 416.55 L1337.97 414.71 L1339.97 412.87 L1341.98 411.02 L1343.98 409.16 L1345.98 407.30 L1347.98 405.43 L1349.99 403.55 L1351.99 401.67 L1353.99 399.78 L1355.99 397.88 L1358.00 395.98 L1360.00 394.07 L1362.00 392.16 L1364.00 390.23 L1366.01 388.31 L1368.01 386.37 L1370.01 384.43 L1372.01 382.48 L1374.02 380.53 L1376.02 378.56 L1378.02 376.60 L1380.02 374.62 L1382.03 372.64 L1384.03 370.65 L1386.03 368.66 L1388.03 366.66 L1390.04 364.65 L1392.04 362.64 L1394.04 360.62 L1396.04 358.60 L1398.05 356.56 L1400.05 354.53 L1402.05 352.48 L1404.05 350.43 L1406.05 348.37 L1408.06 346.31 L1410.06 344.24 L1412.06 342.16 L1414.06 340.08 L1416.07 337.99 L1418.07 335.90 L1420.07 333.79 L1422.07 331.69 L1424.08 329.57 L1426.08 327.45 L1428.08 325.33 L1430.08 323.19 L1432.09 321.05 L1434.09 318.91 L1436.09 316.76 L1438.09 314.60 L1440.10 312.44 L1442.10 310.27 L1444.10 308.09 L1446.10 305.91 L1448.11 303.72 L1450.11 301.53 L1452.11 299.33 L1454.11 297.12 L1456.12 294.91 L1458.12 292.69 L1460.12 290.47 L1462.12 288.24 L1464.13 286.00 L1466.13 283.76 L1468.13 281.51 L1470.13 279.26 L1472.14 277.00 L1474.14 274.73 L1476.14 272.46 L1478.14 270.18 L1480.14 267.90 L1482.15 265.61 L1484.15 263.31 L1486.15 261.01 L1488.15 258.71 L1490.16 256.40 L1492.16 254.08 L1494.16 251.75 L1496.16 249.43 L1498.17 247.09 L1500.17 244.75 L1502.17 242.40 L1504.17 240.05 L1506.18 237.69 L1508.18 235.33 L1510.18 232.96 L1512.18 230.59 L1514.19 228.21 L1516.19 225.83 L1518.19 223.43 L1520.19 221.04 L1522.20 218.64 L1524.20 216.23 L1526.20 213.82 L1528.20 211.40 L1530.21 208.98 L1532.21 206.55 L1534.21 204.12 L1536.21 201.68 L1538.22 199.24 L1540.22 196.79 L1542.22 194.33 L1544.22 191.87 L1546.22 189.41 L1548.23 186.94 L1550.23 184.46 L1552.23 181.98 L1554.23 179.50 L1556.24 177.01 L1558.24 174.52 L1560.24 172.02 L1562.24 169.51 L1564.25 167.00 L1566.25 164.49 L1568.25 161.97 L1570.25 159.44 L1572.26 156.91 L1574.26 154.38 L1576.26 151.84 L1578.26 149.30 L1580.27 146.75 L1582.27 144.20 L1584.27 141.64 L1586.27 139.08 L1588.28 136.51 L1590.28 133.94 L1592.28 131.36 L1594.28 128.78 L1596.29 126.20 L1598.29 123.61 L1600.29 121.02 L1602.29 118.42 L1604.30 115.81 L1606.30 113.21 L1608.30 110.60 L1608.30 110.60 L1610.30 112.34 L1612.31 114.09 L1614.31 115.83 L1616.32 117.57 L1618.32 119.30 L1620.32 121.03 L1622.33 122.76 L1624.33 124.47 L1626.34 126.19 L1628.34 127.89 L1630.34 129.60 L1632.35 131.29 L1634.35 132.99 L1636.36 134.67 L1638.36 136.35 L1640.36 138.03 L1642.37 139.70 L1644.37 141.37 L1646.38 143.03 L1648.38 144.69 L1650.38 146.34 L1652.39 147.98 L1654.39 149.62 L1656.40 151.26 L1658.40 152.89 L1660.40 154.51 L1662.41 156.13 L1664.41 157.75 L1666.42 159.35 L1668.42 160.96 L1670.42 162.56 L1672.43 164.15 L1674.43 165.74 L1676.44 167.32 L1678.44 168.90 L1680.45 170.47 L1682.45 172.04 L1684.45 173.60 L1686.46 175.16 L1688.46 176.71 L1690.47 178.26 L1692.47 179.80 L1694.47 181.34 L1696.48 182.87 L1698.48 184.40 L1700.49 185.92 L1702.49 187.43 L1704.49 188.95 L1706.50 190.45 L1708.50 191.95 L1710.51 193.45 L1712.51 194.94 L1714.51 196.42 L1716.52 197.90 L1718.52 199.38 L1720.53 200.84 L1722.53 202.31 L1724.53 203.77 L1726.54 205.22 L1728.54 206.67 L1730.55 208.11 L1732.55 209.55 L1734.55 210.99 L1736.56 212.41 L1738.56 213.84 L1740.57 215.25 L1742.57 216.67 L1744.57 218.07 L1746.58 219.48 L1748.58 220.87 L1750.59 222.26 L1752.59 223.65 L1754.59 225.03 L1756.60 226.41 L1758.60 227.78 L1760.61 229.14 L1762.61 230.50 L1764.61 231.86 L1766.62 233.21 L1768.62 234.56 L1770.63 235.90 L1772.63 237.23 L1774.63 238.56 L1776.64 239.88 L1778.64 241.20 L1780.65 242.52 L1782.65 243.83 L1784.65 245.13 L1786.66 246.43 L1788.66 247.72 L1790.67 249.01 L1792.67 250.29 L1794.67 251.57 L1796.68 252.84 L1798.68 254.11 L1800.69 255.37 L1802.69 256.63 L1804.70 257.88 L1806.70 259.13 L1808.70 260.37 L1810.71 261.60 L1812.71 262.84 L1814.72 264.06 L1816.72 265.28 L1818.72 266.50 L1820.73 267.71 L1822.73 268.91 L1824.74 270.11 L1826.74 271.31 L1828.74 272.50 L1830.75 273.68 L1832.75 274.86 L1834.76 276.04 L1836.76 277.20 L1838.76 278.37 L1840.77 279.53 L1842.77 280.68 L1844.78 281.83 L1846.78 282.97 L1848.78 284.11 L1850.79 285.24 L1852.79 286.37 L1854.80 287.49 L1856.80 288.61" stroke="#4040c8" stroke-width="2"/>
<path d="M865.40 610.06 L867.40 609.54 L869.41 609.02 L871.41 608.49 L873.41 607.96 L875.41 607.42 L877.42 606.88 L879.42 606.34 L881.42 605.78 L883.42 605.23 L885.43 604.67 L887.43 604.11 L889.43 603.54 L891.43 602.96 L893.44 602.38 L895.44 601.80 L897.44 601.21 L899.44 600.62 L901.45 600.02 L903.45 599.42 L905.45 598.81 L907.45 598.20 L909.46 597.58 L911.46 596.96 L913.46 596.33 L915.46 595.70 L917.47 595.06 L919.47 594.42 L921.47 593.77 L923.47 593.12 L925.48 592.47 L927.48 591.80 L929.48 591.14 L931.48 590.47 L933.49 589.79 L935.49 589.11 L937.49 588.43 L939.49 587.74 L941.50 587.04 L943.50 586.34 L945.50 585.63 L947.50 584.92 L949.51 584.21 L951.51 583.49 L953.51 582.76 L955.52 582.03 L957.52 581.30 L959.52 580.56 L961.52 579.81 L963.53 579.06 L965.53 578.31 L967.53 577.55 L969.53 576.78 L971.54 576.01 L973.54 575.24 L975.54 574.46 L977.54 573.67 L979.55 572.88 L981.55 572.08 L983.55 571.28 L985.55 570.48 L987.56 569.67 L989.56 568.85 L991.56 568.03 L993.56 567.21 L995.57 566.37 L997.57 565.54 L999.57 564.70 L1001.57 563.85 L1003.58 563.00 L1005.58 562.14 L1007.58 561.28 L1009.58 560.41 L1011.59 559.54 L1013.59 558.66 L1015.59 557.78 L1017.59 556.89 L1019.60 556.00 L1021.60 555.10 L1023.60 554.20 L1025.60 553.29 L1027.61 552.37 L1029.61 551.45 L1031.61 550.53 L1033.61 549.60 L1035.62 548.67 L1037.62 547.73 L1039.62 546.78 L1041.62 545.83 L1043.63 544.87 L1045.63 543.91 L1047.63 542.95 L1049.64 541.97 L1051.64 541.00 L1053.64 540.01 L1055.64 539.03 L1057.65 538.03 L1059.65 537.03 L1061.65 536.03 L1063.65 535.02 L1065.66 534.01 L1067.66 532.99 L1069.66 531.96 L1071.66 530.93 L1073.67 529.89 L1075.67 528.85 L1077.67 527.81 L1079.67 526.75 L1081.68 525.70 L1083.68 524.63 L1085.68 523.57 L1087.68 522.49 L1089.69 521.41 L1091.69 520.33 L1093.69 519.24 L1095.69 518.14 L1097.70 517.04 L1099.70 515.93 L1101.70 514.82 L1103.70 513.70 L1105.71 512.58 L1107.71 511.45 L1109.71 510.32 L1111.71 509.18 L1113.72 508.03 L1115.72 506.88 L1117.72 505.73 L1119.72 504.57 L1121.73 503.40 L1123.73 502.23 L1125.73 501.05 L1127.73 499.86 L1129.74 498.67 L1131.74 497.48 L1133.74 496.28 L1135.75 495.07 L1137.75 493.86 L1139.75 492.64 L1141.75 491.42 L1143.76 490.19 L1145.76 488.96 L1147.76 487.72 L1149.76 486.47 L1151.77 485.22 L1153.77 483.96 L1155.77 482.70 L1157.77 481.43 L1159.78 480.16 L1161.78 478.88 L1163.78 477.59 L1165.78 476.30 L1167.79 475.01 L1169.79 473.70 L1171.79 472.40 L1173.79 471.08 L1175.80 469.76 L1177.80 468.44 L1179.80 467.11 L1181.80 465.77 L1183.81 464.43 L1185.81 463.08 L1187.81 461.72 L1189.81 460.36 L1191.82 459.00 L1193.82 457.63 L1195.82 456.25 L1197.82 454.87 L1199.83 453.48 L1201.83 452.08 L1203.83 450.68 L1205.83 449.28 L1207.84 447.86 L1209.84 446.45 L1211.84 445.02 L1213.84 443.59 L1215.85 442.16 L1217.85 440.72 L1219.85 439.27 L1221.85 437.82 L1223.86 436.36 L1225.86 434.89 L1227.86 433.42 L1229.87 431.94 L1231.87 430.46 L1233.87 428.97 L1235.87 427.48 L1237.88 425.98 L1239.88 424.47 L1241.88 422.96 L1243.88 421.44 L1245.89 419.92 L1247.89 418.39 L1249.89 416.85 L1251.89 415.31 L1253.90 413.76 L1255.90 412.20 L1257.90 410.64 L1259.90 409.08 L1261.91 407.51 L1263.91 405.93 L1265.91 404.34 L1267.91 402.75 L1269.92 401.16 L1271.92 399.55 L1273.92 397.95 L1275.92 396.33 L1277.93 394.71 L1279.93 393.08 L1281.93 391.45 L1283.93 389.81 L1285.94 388.17 L1287.94 386.51 L1289.94 384.86 L1291.94 383.19 L1293.95 381.52 L1295.95 379.85 L1297.95 378.17 L1299.95 376.48 L1301.96 374.78 L1303.96 373.08 L1305.96 371.38 L1307.96 369.66 L1309.97 367.95 L1311.97 366.22 L1313.97 364.49 L1315.98 362.75 L1317.98 361.01 L1319.98 359.26 L1321.98 357.50 L1323.99 355.74 L1325.99 353.97 L1327.99 352.20 L1329.99 350.42 L1332.00 348.63 L1334.00 346.83 L1336.00 345.03 L1338.00 343.23 L1340.01 341.42 L1342.01 339.60 L1344.01 337.77 L1346.01 335.94 L1348.02 334.10 L1350.02 332.26 L1352.02 330.41 L1354.02 328.55 L1356.03 326.69 L1358.03 324.82 L1360.03 322.94 L1362.03 321.06 L1364.04 319.17 L1366.04 317.28 L1368.04 315.38 L1370.04 313.47 L1372.05 311.56 L1374.05 309.63 L1376.05 307.71 L1378.05 305.77 L1380.06 303.84 L1382.06 301.89 L1384.06 299.94 L1386.06 297.98 L1388.07 296.01 L1390.07 294.04 L1392.07 292.06 L1394.07 290.08 L1396.08 288.09 L1398.08 286.09 L1400.08 284.08 L1402.08 282.07 L1404.09 280.06 L1406.09 278.03 L1408.09 276.00 L1410.10 273.96 L1412.10 271.92 L1414.10 269.87 L1416.10 267.81 L1418.11 265.75 L1420.11 263.68 L1422.11 261.61 L1424.11 259.52 L1426.12 257.43 L1428.12 255.34 L1430.12 253.24 L1432.12 251.13 L1434.13 249.01 L1436.13 246.89 L1438.13 244.76 L1440.13 242.62 L1442.14 240.48 L1444.14 238.33 L1446.14 236.18 L1448.14 234.02 L1450.15 231.85 L1452.15 229.67 L1454.15 227.49 L1456.15 225.30 L1458.16 223.10 L1460.16 220.90 L1462.16 218.69 L1464.16 216.48 L1466.17 214.26 L1468.17 212.03 L1470.17 209.79 L1472.17 207.55 L1474.18 205.30 L1476.18 203.04 L1478.18 200.78 L1480.18 198.51 L1482.19 196.23 L1484.19 193.95 L1486.19 191.66 L1488.19 189.36 L1490.20 187.06 L1492.20 184.60 L1492.20 184.60 L1494.22 184.97 L1496.24 185.34 L1498.26 185.71 L1500.28 186.06 L1502.31 186.41 L1504.33 186.75 L1506.35 187.09 L1508.37 187.42 L1510.39 187.75 L1512.41 188.06 L1514.43 188.37 L1516.45 188.68 L1518.47 188.98 L1520.49 189.27 L1522.52 189.55 L1524.54 189.83 L1526.56 190.10 L1528.58 190.37 L1530.60 190.63 L1532.62 190.88 L1534.64 191.13 L1536.66 191.37 L1538.68 191.60 L1540.71 191.83 L1542.73 192.05 L1544.75 192.26 L1546.77 192.47 L1548.79 192.67 L1550.81 192.87 L1552.83 193.06 L1554.85 193.24 L1556.87 193.41 L1558.89 193.58 L1560.92 193.74 L1562.94 193.90 L1564.96 194.05 L1566.98 194.19 L1569.00 194.33 L1571.02 194.46 L1573.04 194.58 L1575.06 194.70 L1577.08 194.81 L1579.11 194.92 L1581.13 195.01 L1583.15 195.11 L1585.17 195.19 L1587.19 195.27 L1589.21 195.34 L1591.23 195.41 L1593.25 195.47 L1595.27 195.52 L1597.29 195.57 L1599.32 195.61 L1601.34 195.64 L1603.36 195.67 L1605.38 195.69 L1607.40 195.70 L1607.40 195.70 L1609.41 197.46 L1611.42 199.22 L1613.43 200.98 L1615.45 202.73 L1617.46 204.48 L1619.47 206.22 L1621.48 207.96 L1623.49 209.69 L1625.50 211.42 L1627.51 213.14 L1629.52 214.86 L1631.54 216.57 L1633.55 218.28 L1635.56 219.98 L1637.57 221.67 L1639.58 223.36 L1641.59 225.05 L1643.60 226.73 L1645.61 228.41 L1647.63 230.08 L1649.64 231.74 L1651.65 233.40 L1653.66 235.06 L1655.67 236.71 L1657.68 238.35 L1659.69 239.99 L1661.70 241.63 L1663.72 243.25 L1665.73 244.88 L1667.74 246.50 L1669.75 248.11 L1671.76 249.72 L1673.77 251.32 L1675.78 252.92 L1677.80 254.51 L1679.81 256.10 L1681.82 257.68 L1683.83 259.26 L1685.84 260.83 L1687.85 262.40 L1689.86 263.96 L1691.87 265.52 L1693.89 267.07 L1695.90 268.62 L1697.91 270.16 L1699.92 271.70 L1701.93 273.23 L1703.94 274.75 L1705.95 276.27 L1707.96 277.79 L1709.98 279.30 L1711.99 280.80 L1714.00 282.30 L1716.01 283.80 L1718.02 285.29 L1720.03 286.77 L1722.04 288.25 L1724.05 289.73 L1726.07 291.20 L1728.08 292.66 L1730.09 294.12 L1732.10 295.57 L1734.11 297.02 L1736.12 298.46 L1738.13 299.90 L1740.15 301.33 L1742.16 302.76 L1744.17 304.18 L1746.18 305.60 L1748.19 307.01 L1750.20 308.42 L1752.21 309.82 L1754.22 311.22 L1756.24 312.61 L1758.25 314.00 L1760.26 315.38 L1762.27 316.76 L1764.28 318.13 L1766.29 319.49 L1768.30 320.85 L1770.31 322.21 L1772.33 323.56 L1774.34 324.90 L1776.35 326.24 L1778.36 327.58 L1780.37 328.91 L1782.38 330.23 L1784.39 331.55 L1786.40 332.87 L1788.42 334.17 L1790.43 335.48 L1792.44 336.78 L1794.45 338.07 L1796.46 339.36 L1798.47 340.64 L1800.48 341.92 L1802.50 343.19 L1804.51 344.46 L1806.52 345.72 L1808.53 346.98 L1810.54 348.23 L1812.55 349.48 L1814.56 350.72 L1816.57 351.96 L1818.59 353.19 L1820.60 354.42 L1822.61 355.64 L1824.62 356.85 L1826.63 358.06 L1828.64 359.27 L1830.65 360.47 L1832.66 361.67 L1834.68 362.86 L1836.69 364.04 L1838.70 365.22 L1840.71 366.40 L1842.72 367.56 L1844.73 368.73 L1846.74 369.89 L1848.75 371.04 L1850.77 372.19 L1852.78 373.34 L1854.79 374.47 L1856.80 375.61" stroke="#0a7a0a" stroke-width="2.1"/>
<rect x="1336" y="434" width="68" height="12" fill="#f0a070" fill-opacity="0.55" transform="rotate(-14 1370 440)"/>
<circle cx="1361.3" cy="441.3" r="4.6" fill="url(#dot)" stroke="#400000" stroke-width="0.8"/>
</g>
<path d="M865.4 76.8V710.0 M1856.8 76.8V710.0 M865.4 77.3H1857.5 M865.4 710.0H1857.5 M860.4 77.30H865.4 M1856.8 77.30H1861.8 M860.4 103.66H865.4 M1856.8 103.66H1861.8 M860.4 130.03H865.4 M1856.8 130.03H1861.8 M860.4 156.39H865.4 M1856.8 156.39H1861.8 M860.4 182.75H865.4 M1856.8 182.75H1861.8 M860.4 209.11H865.4 M1856.8 209.11H1861.8 M860.4 235.48H865.4 M1856.8 235.48H1861.8 M860.4 261.84H865.4 M1856.8 261.84H1861.8 M860.4 288.20H865.4 M1856.8 288.20H1861.8 M860.4 314.56H865.4 M1856.8 314.56H1861.8 M860.4 340.93H865.4 M1856.8 340.93H1861.8 M860.4 367.29H865.4 M1856.8 367.29H1861.8 M860.4 393.65H865.4 M1856.8 393.65H1861.8 M860.4 420.01H865.4 M1856.8 420.01H1861.8 M860.4 446.38H865.4 M1856.8 446.38H1861.8 M860.4 472.74H865.4 M1856.8 472.74H1861.8 M860.4 499.10H865.4 M1856.8 499.10H1861.8 M860.4 525.46H865.4 M1856.8 525.46H1861.8 M860.4 551.83H865.4 M1856.8 551.83H1861.8 M860.4 578.19H865.4 M1856.8 578.19H1861.8 M860.4 604.55H865.4 M1856.8 604.55H1861.8 M860.4 630.91H865.4 M1856.8 630.91H1861.8 M860.4 657.27H865.4 M1856.8 657.27H1861.8 M860.4 683.64H865.4 M1856.8 683.64H1861.8 M860.4 710.00H865.4 M1856.8 710.00H1861.8 M910.40 77.3V72.8 M910.40 710.0V714.5 M968.62 77.3V72.8 M968.62 710.0V714.5 M1026.85 77.3V72.8 M1026.85 710.0V714.5 M1085.08 77.3V72.8 M1085.08 710.0V714.5 M1143.30 77.3V72.8 M1143.30 710.0V714.5 M1201.53 77.3V72.8 M1201.53 710.0V714.5 M1259.75 77.3V72.8 M1259.75 710.0V714.5 M1317.97 77.3V72.8 M1317.97 710.0V714.5 M1376.20 77.3V72.8 M1376.20 710.0V714.5 M1434.42 77.3V72.8 M1434.42 710.0V714.5 M1492.65 77.3V72.8 M1492.65 710.0V714.5 M1550.88 77.3V72.8 M1550.88 710.0V714.5 M1609.10 77.3V72.8 M1609.10 710.0V714.5 M1667.32 77.3V72.8 M1667.32 710.0V714.5 M1725.55 77.3V72.8 M1725.55 710.0V714.5 M1783.78 77.3V72.8 M1783.78 710.0V714.5 M1842.00 77.3V72.8 M1842.00 710.0V714.5" stroke="#000" stroke-width="1.3" fill="none"/>
<text x="858.5" y="81.60" text-anchor="end" font-size="11.2" fill="#222">106%</text>
<text x="858.5" y="107.96" text-anchor="end" font-size="11.2" fill="#222">98%</text>
<text x="858.5" y="134.33" text-anchor="end" font-size="11.2" fill="#222">89%</text>
<text x="858.5" y="160.69" text-anchor="end" font-size="11.2" fill="#222">81%</text>
<text x="858.5" y="187.05" text-anchor="end" font-size="11.2" fill="#222">73%</text>
<text x="858.5" y="213.41" text-anchor="end" font-size="11.2" fill="#222">65%</text>
<text x="858.5" y="239.78" text-anchor="end" font-size="11.2" fill="#222">57%</text>
<text x="858.5" y="266.14" text-anchor="end" font-size="11.2" fill="#222">49%</text>
<text x="858.5" y="292.50" text-anchor="end" font-size="11.2" fill="#222">41%</text>
<text x="858.5" y="318.86" text-anchor="end" font-size="11.2" fill="#222">33%</text>
<text x="858.5" y="345.23" text-anchor="end" font-size="11.2" fill="#222">24%</text>
<text x="858.5" y="371.59" text-anchor="end" font-size="11.2" fill="#222">16%</text>
<text x="858.5" y="397.95" text-anchor="end" font-size="11.2" fill="#222">8%</text>
<text x="858.5" y="424.31" text-anchor="end" font-size="11.2" fill="#222">0%</text>
<text x="858.5" y="450.68" text-anchor="end" font-size="11.2" fill="#222">-8%</text>
<text x="858.5" y="477.04" text-anchor="end" font-size="11.2" fill="#222">-16%</text>
<text x="858.5" y="503.40" text-anchor="end" font-size="11.2" fill="#222">-24%</text>
<text x="858.5" y="529.76" text-anchor="end" font-size="11.2" fill="#222">-33%</text>
<text x="858.5" y="556.12" text-anchor="end" font-size="11.2" fill="#222">-41%</text>
<text x="858.5" y="582.49" text-anchor="end" font-size="11.2" fill="#222">-49%</text>
<text x="858.5" y="608.85" text-anchor="end" font-size="11.2" fill="#222">-57%</text>
<text x="858.5" y="635.21" text-anchor="end" font-size="11.2" fill="#222">-65%</text>
<text x="858.5" y="661.57" text-anchor="end" font-size="11.2" fill="#222">-73%</text>
<text x="858.5" y="687.94" text-anchor="end" font-size="11.2" fill="#222">-81%</text>
<text x="858.5" y="714.30" text-anchor="end" font-size="11.2" fill="#222">-89%</text>
<text x="1863.5" y="82.10" font-size="11.2" fill="#222">13,000</text>
<text x="1863.5" y="108.46" font-size="11.2" fill="#222">12,000</text>
<text x="1863.5" y="134.83" font-size="11.2" fill="#222">11,000</text>
<text x="1863.5" y="161.19" font-size="11.2" fill="#222">10,000</text>
<text x="1863.5" y="187.55" font-size="11.2" fill="#222">9,000</text>
<text x="1863.5" y="213.91" font-size="11.2" fill="#222">8,000</text>
<text x="1863.5" y="240.28" font-size="11.2" fill="#222">7,000</text>
<text x="1863.5" y="266.64" font-size="11.2" fill="#222">6,000</text>
<text x="1863.5" y="293.00" font-size="11.2" fill="#222">5,000</text>
<text x="1863.5" y="319.36" font-size="11.2" fill="#222">4,000</text>
<text x="1863.5" y="345.73" font-size="11.2" fill="#222">3,000</text>
<text x="1863.5" y="372.09" font-size="11.2" fill="#222">2,000</text>
<text x="1863.5" y="398.45" font-size="11.2" fill="#222">1,000</text>
<text x="1863.5" y="424.81" font-size="11.2" fill="#222">0</text>
<text x="1863.5" y="451.18" font-size="11.2" fill="#222">-1,000</text>
<text x="1863.5" y="477.54" font-size="11.2" fill="#222">-2,000</text>
<text x="1863.5" y="503.90" font-size="11.2" fill="#222">-3,000</text>
<text x="1863.5" y="530.26" font-size="11.2" fill="#222">-4,000</text>
<text x="1863.5" y="556.62" font-size="11.2" fill="#222">-5,000</text>
<text x="1863.5" y="582.99" font-size="11.2" fill="#222">-6,000</text>
<text x="1863.5" y="609.35" font-size="11.2" fill="#222">-7,000</text>
<text x="1863.5" y="635.71" font-size="11.2" fill="#222">-8,000</text>
<text x="1863.5" y="662.07" font-size="11.2" fill="#222">-9,000</text>
<text x="1863.5" y="688.44" font-size="11.2" fill="#222">-10,000</text>
<text x="1863.5" y="714.80" font-size="11.2" fill="#222">-11,000</text>
<text x="910.40" y="71.3" text-anchor="middle" font-size="11.2" fill="#222">-4.9%</text>
<text x="968.62" y="71.3" text-anchor="middle" font-size="11.2" fill="#222">-4.3%</text>
<text x="1026.85" y="71.3" text-anchor="middle" font-size="11.2" fill="#222">-3.6%</text>
<text x="1085.08" y="71.3" text-anchor="middle" font-size="11.2" fill="#222">-2.9%</text>
<text x="1143.30" y="71.3" text-anchor="middle" font-size="11.2" fill="#222">-2.2%</text>
<text x="1201.53" y="71.3" text-anchor="middle" font-size="11.2" fill="#222">-1.5%</text>
<text x="1259.75" y="71.3" text-anchor="middle" font-size="11.2" fill="#222">-0.9%</text>
<text x="1317.97" y="71.3" text-anchor="middle" font-size="11.2" fill="#222">-0.2%</text>
<text x="1376.20" y="71.3" text-anchor="middle" font-size="11.2" fill="#222">0.5%</text>
<text x="1434.42" y="71.3" text-anchor="middle" font-size="11.2" fill="#222">1.2%</text>
<text x="1492.65" y="71.3" text-anchor="middle" font-size="11.2" fill="#222">1.9%</text>
<text x="1550.88" y="71.3" text-anchor="middle" font-size="11.2" fill="#222">2.5%</text>
<text x="1609.10" y="71.3" text-anchor="middle" font-size="11.2" fill="#222">3.2%</text>
<text x="1667.32" y="71.3" text-anchor="middle" font-size="11.2" fill="#222">3.9%</text>
<text x="1725.55" y="71.3" text-anchor="middle" font-size="11.2" fill="#222">4.6%</text>
<text x="1783.78" y="71.3" text-anchor="middle" font-size="11.2" fill="#222">5.3%</text>
<text x="1842.00" y="71.3" text-anchor="middle" font-size="11.2" fill="#222">5.9%</text>
<text x="910.40" y="727" text-anchor="middle" font-size="11.2" fill="#222">1400</text>
<text x="968.62" y="727" text-anchor="middle" font-size="11.2" fill="#222">1410</text>
<text x="1026.85" y="727" text-anchor="middle" font-size="11.2" fill="#222">1420</text>
<text x="1085.08" y="727" text-anchor="middle" font-size="11.2" fill="#222">1430</text>
<text x="1143.30" y="727" text-anchor="middle" font-size="11.2" fill="#222">1440</text>
<text x="1201.53" y="727" text-anchor="middle" font-size="11.2" fill="#222">1450</text>
<text x="1259.75" y="727" text-anchor="middle" font-size="11.2" fill="#222">1460</text>
<text x="1317.97" y="727" text-anchor="middle" font-size="11.2" fill="#222">1470</text>
<text x="1376.20" y="727" text-anchor="middle" font-size="11.2" fill="#222">1480</text>
<text x="1434.42" y="727" text-anchor="middle" font-size="11.2" fill="#222">1490</text>
<text x="1492.65" y="727" text-anchor="middle" font-size="11.2" fill="#222">1500</text>
<text x="1550.88" y="727" text-anchor="middle" font-size="11.2" fill="#222">1510</text>
<text x="1609.10" y="727" text-anchor="middle" font-size="11.2" fill="#222">1520</text>
<text x="1667.32" y="727" text-anchor="middle" font-size="11.2" fill="#222">1530</text>
<text x="1725.55" y="727" text-anchor="middle" font-size="11.2" fill="#222">1540</text>
<text x="1783.78" y="727" text-anchor="middle" font-size="11.2" fill="#222">1550</text>
<text x="1842.00" y="727" text-anchor="middle" font-size="11.2" fill="#222">1560</text>
<rect x="1346" y="59.5" width="30" height="13" fill="#e8eef6" stroke="#5a6a80" stroke-width="1"/>
<text x="1361" y="70.3" text-anchor="middle" font-size="11.5" fill="#222">0.3%</text>
<rect x="816.5" y="380.5" width="44" height="13" fill="#00ff00" stroke="#3d4d66" stroke-width="1"/>
<text x="859.5" y="391.2" text-anchor="end" font-size="11.8" fill="#111">10%</text>
<rect x="816.5" y="434.5" width="44" height="13" fill="#e8eef6" stroke="#3d4d66" stroke-width="1"/>
<text x="859.5" y="445.2" text-anchor="end" font-size="11.8" fill="#111">-7%</text>
<rect x="816.5" y="462.5" width="44" height="13" fill="#ff0000" stroke="#3d4d66" stroke-width="1"/>
<text x="859.5" y="473.2" text-anchor="end" font-size="11.8" fill="#111">-15%</text>
<rect x="1797.5" y="380.5" width="108" height="13" fill="#00ff00" stroke="#3d4d66" stroke-width="1"/>
<text x="1799.5" y="391.2" font-size="11.8" fill="#111">Profit Target 1,231</text>
<rect x="1861.5" y="434.5" width="44" height="13" fill="#e8eef6" stroke="#3d4d66" stroke-width="1"/>
<text x="1863.5" y="445.2" font-size="11.8" fill="#111">-810</text>
<rect x="1809.5" y="462.5" width="96" height="13" fill="#ff0000" stroke="#3d4d66" stroke-width="1"/>
<text x="1811.5" y="473.2" font-size="11.8" fill="#111">Max Loss -1,846</text>
<rect x="870.5" y="663.5" width="105" height="41.5" rx="5" fill="#e8eef7" fill-opacity="0.8" stroke="#5a6a80" stroke-width="1"/>
<rect x="878" y="673.5" width="7.5" height="7.5" fill="#2a7a2a" stroke="#333" stroke-width="0.8"/>
<rect x="878" y="687.5" width="7.5" height="7.5" fill="#5ccd5c" stroke="#333" stroke-width="0.8"/>
<text x="890" y="682" font-size="11.2" fill="#333">15/11/2019 (0)</text>
<text x="890" y="696" font-size="11.2" fill="#333">09/10/2019 (37)</text>
<rect x="814.5" y="731.8" width="1089.5" height="117.5" rx="6" fill="#e8eef7" stroke="#5c6c82" stroke-width="1"/>
<text x="841" y="765" text-anchor="middle" font-size="11.5" fill="#555">PnL</text>
<text x="841" y="806.5" text-anchor="middle" font-size="11.5" fill="#555">Delta</text>
<text x="841" y="838.5" text-anchor="middle" font-size="11.5" fill="#555">Theta</text>
<text x="1883" y="765" text-anchor="middle" font-size="11.5" fill="#555">PnL</text>
<text x="1883" y="806.5" text-anchor="middle" font-size="11.5" fill="#555">Delta</text>
<text x="1883" y="838.5" text-anchor="middle" font-size="11.5" fill="#555">Theta</text>
<rect x="865.40" y="759.3" width="75.91" height="10.05" fill="#f07474" stroke="#505050" stroke-width="1"/>
<text x="910.40" y="747.6" text-anchor="middle" font-size="11.5" fill="#f26060">-36%</text>
<text x="910.40" y="759.2" text-anchor="middle" font-size="11.5" fill="#f26060">-4410</text>
<rect x="865.40" y="791.42" width="75.91" height="9.98" fill="#5878f8" stroke="#505050" stroke-width="1"/>
<text x="910.40" y="812.0" text-anchor="middle" font-size="11.5" fill="#5b6af2">52.51</text>
<rect x="865.40" y="833.8" width="75.91" height="1.03" fill="#f07474" stroke="#505050" stroke-width="1"/>
<text x="910.40" y="832.8" text-anchor="middle" font-size="11.5" fill="#f26060">-7.39</text>
<rect x="941.31" y="759.3" width="58.23" height="8.85" fill="#f07474" stroke="#505050" stroke-width="1"/>
<text x="968.62" y="747.6" text-anchor="middle" font-size="11.5" fill="#f26060">-32%</text>
<text x="968.62" y="759.2" text-anchor="middle" font-size="11.5" fill="#f26060">-3883</text>
<rect x="941.31" y="791.39" width="58.23" height="10.01" fill="#5878f8" stroke="#505050" stroke-width="1"/>
<text x="968.62" y="812.0" text-anchor="middle" font-size="11.5" fill="#5b6af2">52.67</text>
<rect x="941.31" y="833.65" width="58.23" height="0.15" fill="#5878f8" stroke="#505050" stroke-width="1"/>
<text x="968.62" y="844.0" text-anchor="middle" font-size="11.5" fill="#5b6af2">1.07</text>
<rect x="999.54" y="759.3" width="58.23" height="7.66" fill="#f07474" stroke="#505050" stroke-width="1"/>
<text x="1026.85" y="747.6" text-anchor="middle" font-size="11.5" fill="#f26060">-27%</text>
<text x="1026.85" y="759.2" text-anchor="middle" font-size="11.5" fill="#f26060">-3359</text>
<rect x="999.54" y="791.52" width="58.23" height="9.88" fill="#5878f8" stroke="#505050" stroke-width="1"/>
<text x="1026.85" y="812.0" text-anchor="middle" font-size="11.5" fill="#5b6af2">52.01</text>
<rect x="999.54" y="832.37" width="58.23" height="1.43" fill="#5878f8" stroke="#505050" stroke-width="1"/>
<text x="1026.85" y="844.0" text-anchor="middle" font-size="11.5" fill="#5b6af2">10.19</text>
<rect x="1057.76" y="759.3" width="58.22" height="6.49" fill="#f07474" stroke="#505050" stroke-width="1"/>
<text x="1085.08" y="747.6" text-anchor="middle" font-size="11.5" fill="#f26060">-23%</text>
<text x="1085.08" y="759.2" text-anchor="middle" font-size="11.5" fill="#f26060">-2846</text>
<rect x="1057.76" y="791.80" width="58.22" height="9.60" fill="#5878f8" stroke="#505050" stroke-width="1"/>
<text x="1085.08" y="812.0" text-anchor="middle" font-size="11.5" fill="#5b6af2">50.50</text>
<rect x="1057.76" y="831.04" width="58.22" height="2.76" fill="#5878f8" stroke="#505050" stroke-width="1"/>
<text x="1085.08" y="844.0" text-anchor="middle" font-size="11.5" fill="#5b6af2">19.69</text>
<rect x="1115.99" y="759.3" width="58.22" height="5.36" fill="#f07474" stroke="#505050" stroke-width="1"/>
<text x="1143.30" y="747.6" text-anchor="middle" font-size="11.5" fill="#f26060">-19%</text>
<text x="1143.30" y="759.2" text-anchor="middle" font-size="11.5" fill="#f26060">-2352</text>
<rect x="1115.99" y="792.25" width="58.22" height="9.15" fill="#5878f8" stroke="#505050" stroke-width="1"/>
<text x="1143.30" y="812.0" text-anchor="middle" font-size="11.5" fill="#5b6af2">48.15</text>
<rect x="1115.99" y="829.71" width="58.22" height="4.09" fill="#5878f8" stroke="#505050" stroke-width="1"/>
<text x="1143.30" y="844.0" text-anchor="middle" font-size="11.5" fill="#5b6af2">29.24</text>
<rect x="1174.21" y="759.3" width="58.23" height="4.30" fill="#f07474" stroke="#505050" stroke-width="1"/>
<text x="1201.53" y="747.6" text-anchor="middle" font-size="11.5" fill="#f26060">-15%</text>
<text x="1201.53" y="759.2" text-anchor="middle" font-size="11.5" fill="#f26060">-1886</text>
<rect x="1174.21" y="792.85" width="58.23" height="8.55" fill="#5878f8" stroke="#505050" stroke-width="1"/>
<text x="1201.53" y="812.0" text-anchor="middle" font-size="11.5" fill="#5b6af2">44.98</text>
<rect x="1174.21" y="828.41" width="58.23" height="5.39" fill="#5878f8" stroke="#505050" stroke-width="1"/>
<text x="1201.53" y="844.0" text-anchor="middle" font-size="11.5" fill="#5b6af2">38.51</text>
<rect x="1232.44" y="759.3" width="58.22" height="3.32" fill="#f07474" stroke="#505050" stroke-width="1"/>
<text x="1259.75" y="747.6" text-anchor="middle" font-size="11.5" fill="#f26060">-12%</text>
<text x="1259.75" y="759.2" text-anchor="middle" font-size="11.5" fill="#f26060">-1455</text>
<rect x="1232.44" y="793.60" width="58.22" height="7.80" fill="#5878f8" stroke="#505050" stroke-width="1"/>
<text x="1259.75" y="812.0" text-anchor="middle" font-size="11.5" fill="#5b6af2">41.07</text>
<rect x="1232.44" y="827.20" width="58.22" height="6.60" fill="#5878f8" stroke="#505050" stroke-width="1"/>
<text x="1259.75" y="844.0" text-anchor="middle" font-size="11.5" fill="#5b6af2">47.15</text>
<rect x="1290.66" y="759.3" width="58.23" height="2.43" fill="#f07474" stroke="#505050" stroke-width="1"/>
<text x="1317.97" y="747.6" text-anchor="middle" font-size="11.5" fill="#f26060">-9%</text>
<text x="1317.97" y="759.2" text-anchor="middle" font-size="11.5" fill="#f26060">-1067</text>
<rect x="1290.66" y="794.47" width="58.23" height="6.94" fill="#5878f8" stroke="#505050" stroke-width="1"/>
<text x="1317.97" y="812.0" text-anchor="middle" font-size="11.5" fill="#5b6af2">36.50</text>
<rect x="1290.66" y="826.12" width="58.23" height="7.68" fill="#5878f8" stroke="#505050" stroke-width="1"/>
<text x="1317.97" y="844.0" text-anchor="middle" font-size="11.5" fill="#5b6af2">54.85</text>
<rect x="1348.89" y="759.3" width="58.22" height="1.66" fill="#f07474" stroke="#505050" stroke-width="1"/>
<text x="1376.20" y="747.6" text-anchor="middle" font-size="11.5" fill="#f26060">-6%</text>
<text x="1376.20" y="759.2" text-anchor="middle" font-size="11.5" fill="#f26060">-727</text>
<rect x="1348.89" y="795.44" width="58.22" height="5.96" fill="#5878f8" stroke="#505050" stroke-width="1"/>
<text x="1376.20" y="812.0" text-anchor="middle" font-size="11.5" fill="#5b6af2">31.38</text>
<rect x="1348.89" y="825.21" width="58.22" height="8.59" fill="#5878f8" stroke="#505050" stroke-width="1"/>
<text x="1376.20" y="844.0" text-anchor="middle" font-size="11.5" fill="#5b6af2">61.33</text>
<rect x="1407.11" y="759.3" width="58.22" height="1.00" fill="#f07474" stroke="#505050" stroke-width="1"/>
<text x="1434.42" y="747.6" text-anchor="middle" font-size="11.5" fill="#f26060">-4%</text>
<text x="1434.42" y="759.2" text-anchor="middle" font-size="11.5" fill="#f26060">-440</text>
<rect x="1407.11" y="796.49" width="58.22" height="4.91" fill="#5878f8" stroke="#505050" stroke-width="1"/>
<text x="1434.42" y="812.0" text-anchor="middle" font-size="11.5" fill="#5b6af2">25.83</text>
<rect x="1407.11" y="824.51" width="58.22" height="9.29" fill="#5878f8" stroke="#505050" stroke-width="1"/>
<text x="1434.42" y="844.0" text-anchor="middle" font-size="11.5" fill="#5b6af2">66.36</text>
<rect x="1465.34" y="759.3" width="58.22" height="0.48" fill="#f07474" stroke="#505050" stroke-width="1"/>
<text x="1492.65" y="747.6" text-anchor="middle" font-size="11.5" fill="#f26060">-2%</text>
<text x="1492.65" y="759.2" text-anchor="middle" font-size="11.5" fill="#f26060">-211</text>
<rect x="1465.34" y="797.60" width="58.22" height="3.80" fill="#5878f8" stroke="#505050" stroke-width="1"/>
<text x="1492.65" y="812.0" text-anchor="middle" font-size="11.5" fill="#5b6af2">20.00</text>
<rect x="1465.34" y="824.03" width="58.22" height="9.77" fill="#5878f8" stroke="#505050" stroke-width="1"/>
<text x="1492.65" y="844.0" text-anchor="middle" font-size="11.5" fill="#5b6af2">69.76</text>
<rect x="1523.56" y="759.3" width="58.23" height="0.09" fill="#f07474" stroke="#505050" stroke-width="1"/>
<text x="1550.88" y="747.6" text-anchor="middle" font-size="11.5" fill="#f26060">0%</text>
<text x="1550.88" y="759.2" text-anchor="middle" font-size="11.5" fill="#f26060">-41</text>
<rect x="1523.56" y="798.73" width="58.23" height="2.67" fill="#5878f8" stroke="#505050" stroke-width="1"/>
<text x="1550.88" y="812.0" text-anchor="middle" font-size="11.5" fill="#5b6af2">14.03</text>
<rect x="1523.56" y="823.80" width="58.23" height="10.00" fill="#5878f8" stroke="#505050" stroke-width="1"/>
<text x="1550.88" y="844.0" text-anchor="middle" font-size="11.5" fill="#5b6af2">71.44</text>
<rect x="1581.79" y="759.14" width="58.23" height="0.16" fill="#5878f8" stroke="#505050" stroke-width="1"/>
<text x="1609.10" y="770.4" text-anchor="middle" font-size="11.5" fill="#5b6af2">70</text>
<text x="1609.10" y="780.4" text-anchor="middle" font-size="11.5" fill="#5b6af2">1%</text>
<rect x="1581.79" y="799.87" width="58.23" height="1.53" fill="#5878f8" stroke="#505050" stroke-width="1"/>
<text x="1609.10" y="812.0" text-anchor="middle" font-size="11.5" fill="#5b6af2">8.07</text>
<rect x="1581.79" y="823.81" width="58.23" height="9.99" fill="#5878f8" stroke="#505050" stroke-width="1"/>
<text x="1609.10" y="844.0" text-anchor="middle" font-size="11.5" fill="#5b6af2">71.38</text>
<rect x="1640.01" y="759.02" width="58.22" height="0.28" fill="#5878f8" stroke="#505050" stroke-width="1"/>
<text x="1667.32" y="770.4" text-anchor="middle" font-size="11.5" fill="#5b6af2">121</text>
<text x="1667.32" y="780.4" text-anchor="middle" font-size="11.5" fill="#5b6af2">1%</text>
<rect x="1640.01" y="800.97" width="58.22" height="0.43" fill="#5878f8" stroke="#505050" stroke-width="1"/>
<text x="1667.32" y="812.0" text-anchor="middle" font-size="11.5" fill="#5b6af2">2.26</text>
<rect x="1640.01" y="824.05" width="58.22" height="9.75" fill="#5878f8" stroke="#505050" stroke-width="1"/>
<text x="1667.32" y="844.0" text-anchor="middle" font-size="11.5" fill="#5b6af2">69.62</text>
<rect x="1698.24" y="759.04" width="58.22" height="0.26" fill="#5878f8" stroke="#505050" stroke-width="1"/>
<text x="1725.55" y="770.4" text-anchor="middle" font-size="11.5" fill="#5b6af2">116</text>
<text x="1725.55" y="780.4" text-anchor="middle" font-size="11.5" fill="#5b6af2">1%</text>
<rect x="1698.24" y="801.4" width="58.22" height="0.62" fill="#f07474" stroke="#505050" stroke-width="1"/>
<text x="1725.55" y="801.4" text-anchor="middle" font-size="11.5" fill="#f26060">-3.28</text>
<rect x="1698.24" y="824.52" width="58.22" height="9.28" fill="#5878f8" stroke="#505050" stroke-width="1"/>
<text x="1725.55" y="844.0" text-anchor="middle" font-size="11.5" fill="#5b6af2">66.27</text>
<rect x="1756.46" y="759.17" width="58.22" height="0.13" fill="#5878f8" stroke="#505050" stroke-width="1"/>
<text x="1783.78" y="770.4" text-anchor="middle" font-size="11.5" fill="#5b6af2">57</text>
<text x="1783.78" y="780.4" text-anchor="middle" font-size="11.5" fill="#5b6af2">0%</text>
<rect x="1756.46" y="801.4" width="58.22" height="1.60" fill="#f07474" stroke="#505050" stroke-width="1"/>
<text x="1783.78" y="801.4" text-anchor="middle" font-size="11.5" fill="#f26060">-8.44</text>
<rect x="1756.46" y="825.19" width="58.22" height="8.61" fill="#5878f8" stroke="#505050" stroke-width="1"/>
<text x="1783.78" y="844.0" text-anchor="middle" font-size="11.5" fill="#5b6af2">61.52</text>
<rect x="1814.69" y="759.3" width="42.11" height="0.12" fill="#f07474" stroke="#505050" stroke-width="1"/>
<text x="1842.00" y="747.6" text-anchor="middle" font-size="11.5" fill="#f26060">0%</text>
<text x="1842.00" y="759.2" text-anchor="middle" font-size="11.5" fill="#f26060">-52</text>
<rect x="1814.69" y="801.4" width="42.11" height="2.49" fill="#f07474" stroke="#505050" stroke-width="1"/>
<text x="1842.00" y="801.4" text-anchor="middle" font-size="11.5" fill="#f26060">-13.12</text>
<rect x="1814.69" y="826.02" width="42.11" height="7.78" fill="#5878f8" stroke="#505050" stroke-width="1"/>
<text x="1842.00" y="844.0" text-anchor="middle" font-size="11.5" fill="#5b6af2">55.56</text>
<rect x="1337" y="715.5" width="48" height="133" rx="6" fill="#eaf0f8" fill-opacity="0.82" stroke="#56667c" stroke-width="1"/>
<rect x="1337.5" y="753" width="47" height="8" fill="#dde6f3" fill-opacity="0.6"/>
<text x="1361.5" y="727.3" text-anchor="middle" font-size="11" fill="#111">1477.41</text>
<text x="1361" y="760.3" text-anchor="middle" font-size="12" fill="#ee1010">-810</text>
<text x="1361" y="776" text-anchor="middle" font-size="12" fill="#ee1010">-6.6%</text>
<text x="1361" y="807.3" text-anchor="middle" font-size="12" fill="#1010e0">32.75</text>
<text x="1361" y="839.3" text-anchor="middle" font-size="12" fill="#1010e0">59.79</text>
</svg>
<div style="left:1912.00px;top:0.00px;width:8.00px;height:890.00px;background:#000;"></div>
</body></html>
